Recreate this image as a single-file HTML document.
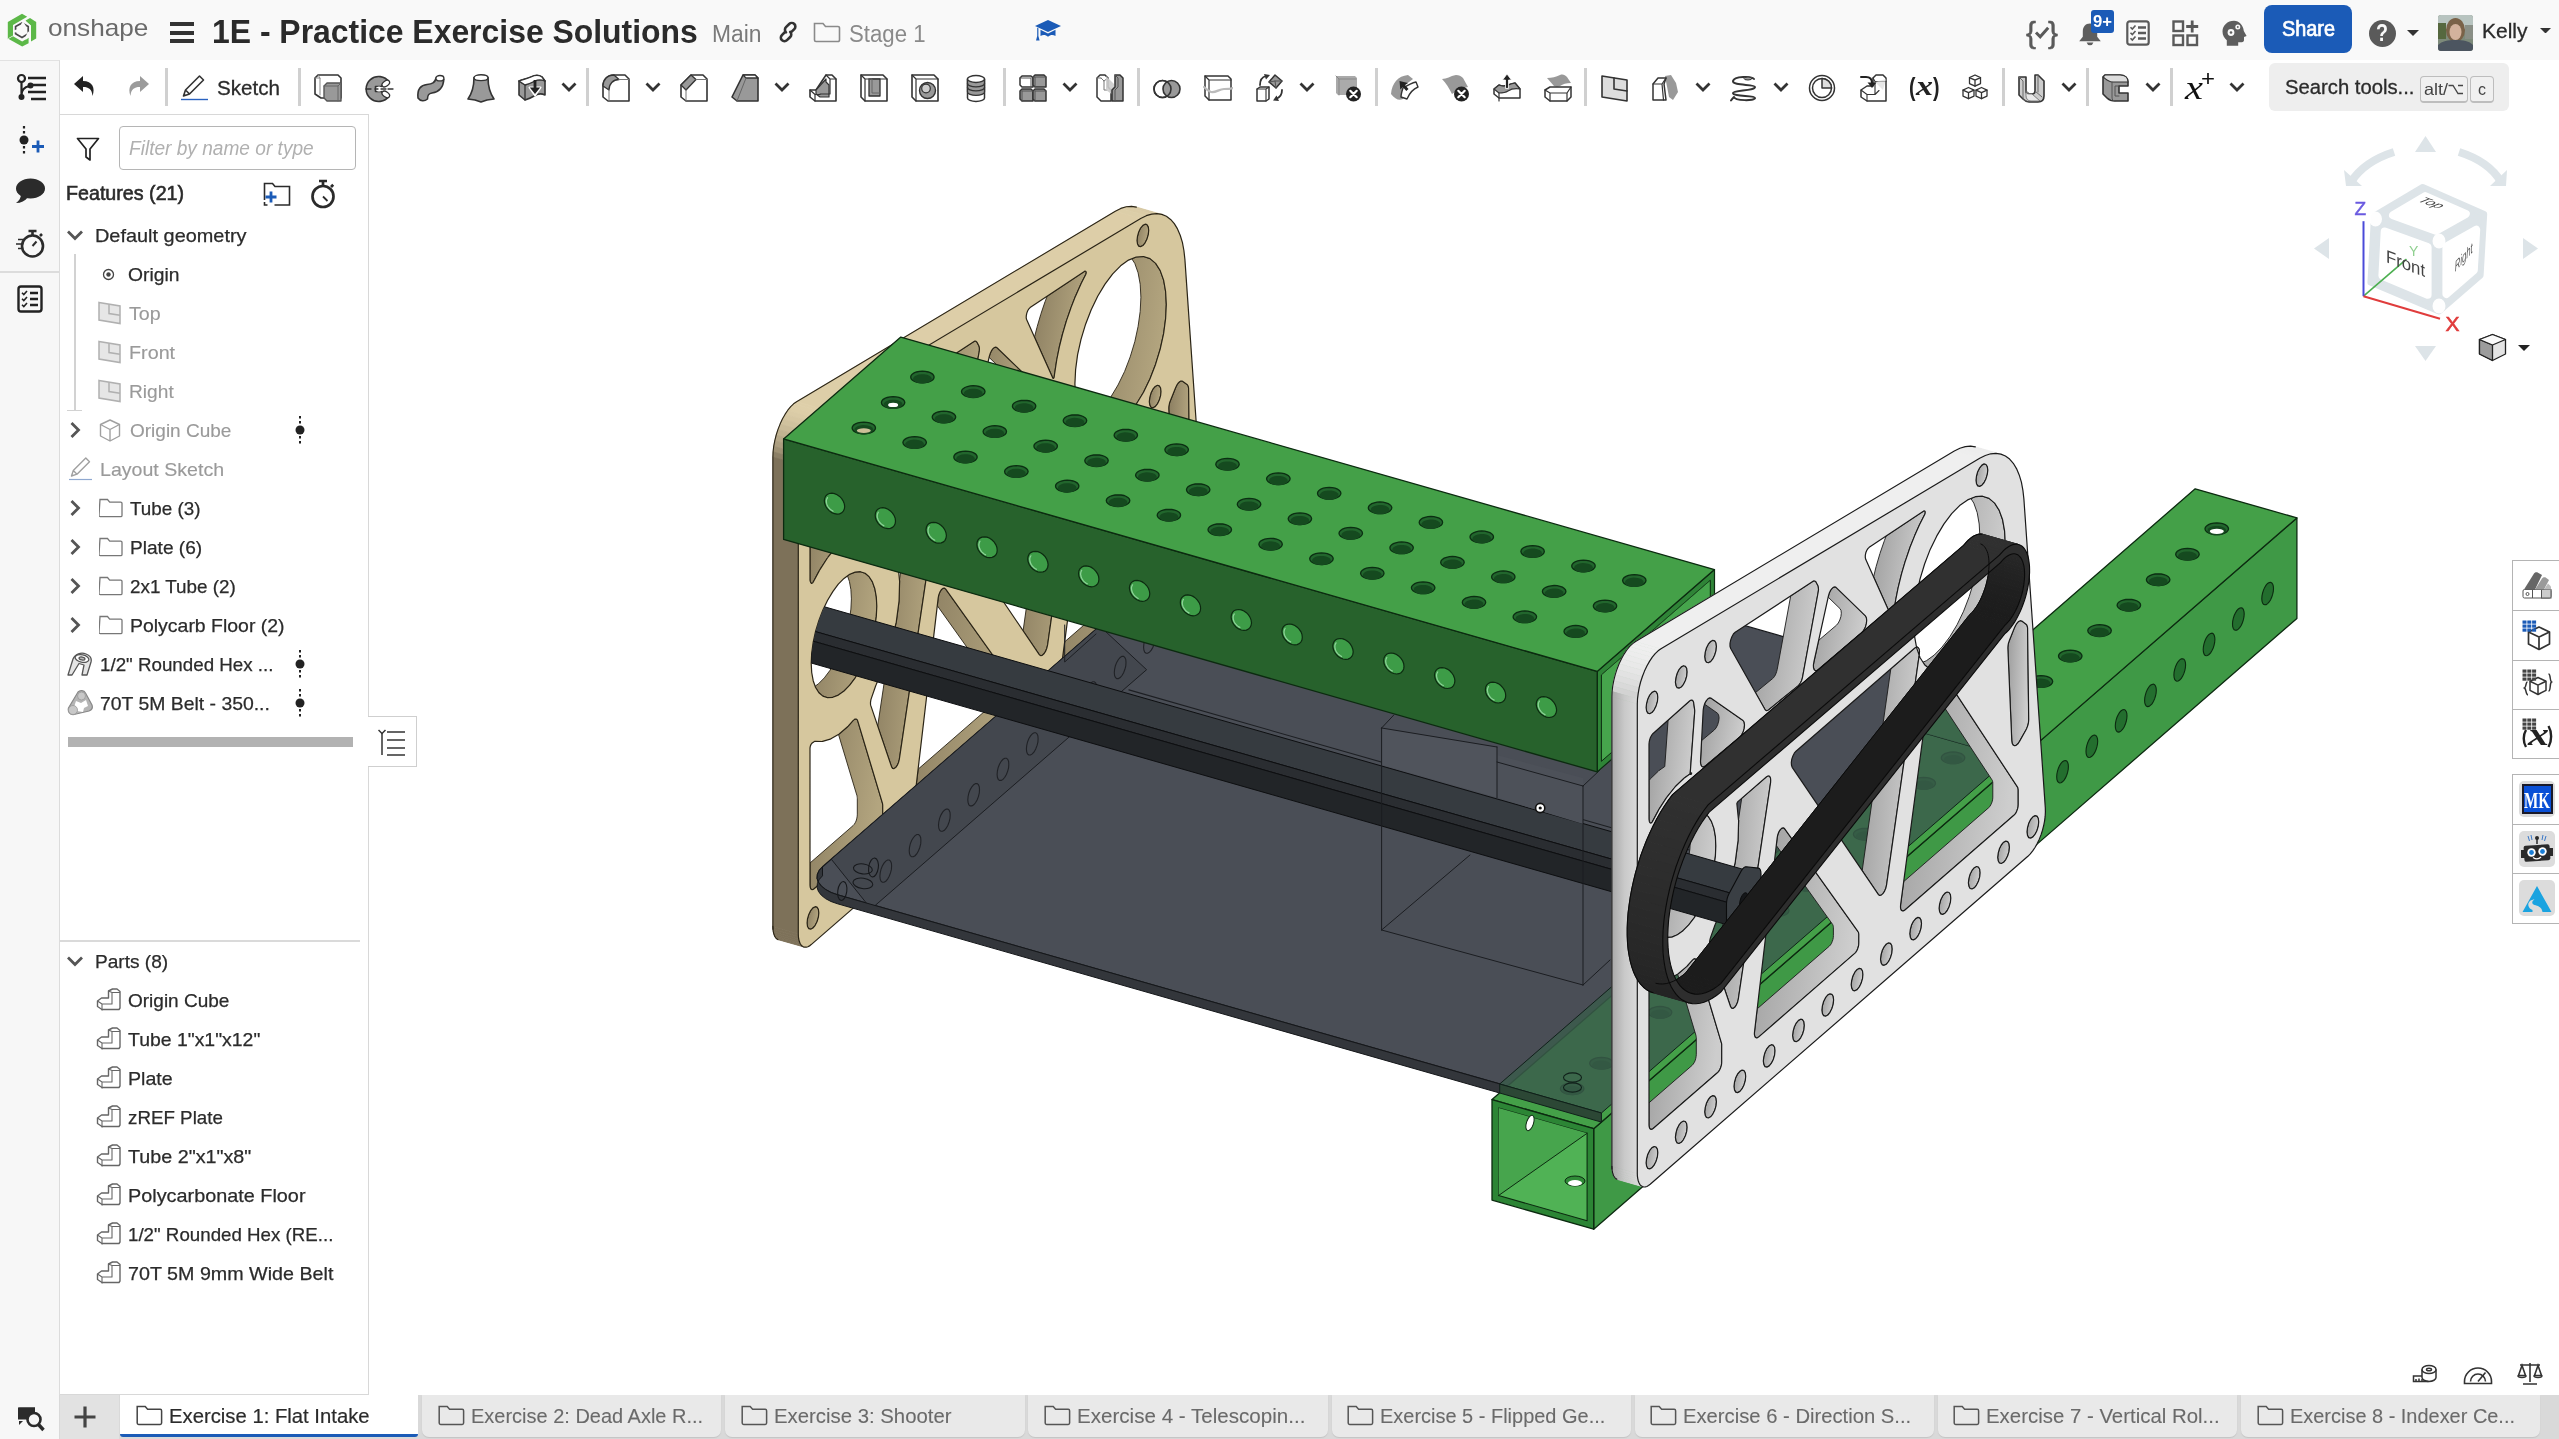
<!DOCTYPE html>
<html lang="en"><head><meta charset="utf-8"><title>1E - Practice Exercise Solutions | Onshape</title>
<style>
html,body{margin:0;padding:0;background:#fff;overflow:hidden}
#r{will-change:transform;opacity:.9999;position:relative;width:2559px;height:1439px;overflow:hidden;background:#fff;font-family:"Liberation Sans",sans-serif}
.a{position:absolute;display:block}
.t{position:absolute;white-space:nowrap;transform-origin:0 0;display:block}
</style></head>
<body><div id="r">
<svg class="a" style="left:0;top:0" width="2559" height="1439" viewBox="0 0 2559 1439">
<defs>
<clipPath id="sc1"><polygon points="844.0,578.4 838.9,583.6 833.9,590.0 829.1,597.5 824.7,605.9 820.8,615.1 817.5,624.7 814.8,634.5 812.8,644.4 811.6,654.0 811.2,663.2 811.6,671.7 812.8,679.2 814.8,685.6 817.5,690.8 820.8,694.6 824.7,697.0 829.1,697.8 833.9,697.0 838.9,694.7 844.0,691.0 2344.0,1179.5 2344.0,947.0"/></clipPath>
<clipPath id="sc2"><polygon points="1683.0,818.2 1677.9,823.3 1672.9,829.7 1668.1,837.2 1663.7,845.7 1659.8,854.8 1656.5,864.4 1653.8,874.3 1651.8,884.2 1650.6,893.8 1650.2,902.9 1650.6,911.4 1651.8,918.9 1653.8,925.4 1656.5,930.6 1659.8,934.4 1663.7,936.7 1668.1,937.5 1672.9,936.8 1677.9,934.5 1683.0,930.7 3183.0,1419.3 3183.0,1186.7"/></clipPath>
<linearGradient id="tpw" x1="0" y1="0" x2="1" y2="0.3"><stop offset="0" stop-color="#8a7d60"/><stop offset="1" stop-color="#b3a57f"/></linearGradient>
<linearGradient id="wpw" x1="0" y1="0" x2="1" y2="0.3"><stop offset="0" stop-color="#9c9c9c"/><stop offset="1" stop-color="#cdcdcd"/></linearGradient>
<clipPath id="endclip"><polygon points="1601.4,674.8 1710.3,580.2 1710.3,666.6 1601.4,761.3"/></clipPath>
<clipPath id="rtclip"><polygon points="1908.7,737.7 2195.2,488.8 2296.9,517.9 2296.9,618.4 2010.4,867.3"/></clipPath>
<linearGradient id="wpl" gradientUnits="userSpaceOnUse" x1="1611" y1="0" x2="1638" y2="0"><stop offset="0" stop-color="#a6a6a6"/><stop offset="0.5" stop-color="#c9c9c9"/><stop offset="1" stop-color="#dadada"/></linearGradient>
</defs>
<polygon points="798.3,933.7 798.4,936.5 773.0,929.2 772.9,926.4" fill="#7d7159" stroke="#7d7159" stroke-width="0.8"/>
<polygon points="798.4,936.5 798.7,939.0 773.3,931.8 773.0,929.2" fill="#7d7159" stroke="#7d7159" stroke-width="0.8"/>
<polygon points="798.7,939.0 799.3,941.3 773.9,934.0 773.3,931.8" fill="#7d7159" stroke="#7d7159" stroke-width="0.8"/>
<polygon points="799.3,941.3 800.0,943.2 774.6,936.0 773.9,934.0" fill="#7d7159" stroke="#7d7159" stroke-width="0.8"/>
<polygon points="800.0,943.2 801.0,944.8 775.5,937.6 774.6,936.0" fill="#7d7159" stroke="#7d7159" stroke-width="0.8"/>
<polygon points="801.0,944.8 802.1,946.0 776.7,938.8 775.5,937.6" fill="#7d7159" stroke="#7d7159" stroke-width="0.8"/>
<polygon points="802.1,946.0 803.3,946.8 777.9,939.6 776.7,938.8" fill="#7d7159" stroke="#7d7159" stroke-width="0.8"/>
<polygon points="1161.8,214.4 1156.9,213.6 1131.5,206.4 1136.4,207.1" fill="#d4c6a1" stroke="#d4c6a1" stroke-width="0.8"/>
<polygon points="1156.9,213.6 1151.7,214.1 1126.3,206.8 1131.5,206.4" fill="#d8c9a4" stroke="#d8c9a4" stroke-width="0.8"/>
<polygon points="1151.7,214.1 1146.3,215.7 1120.8,208.4 1126.3,206.8" fill="#dbcca6" stroke="#dbcca6" stroke-width="0.8"/>
<polygon points="1146.3,215.7 1140.7,218.5 1115.3,211.3 1120.8,208.4" fill="#dccea8" stroke="#dccea8" stroke-width="0.8"/>
<polygon points="1140.7,218.5 822.0,409.0 796.6,401.7 1115.3,211.3" fill="#ddcea8" stroke="#ddcea8" stroke-width="0.8"/>
<polygon points="822.0,409.0 819.1,411.1 793.6,403.8 796.6,401.7" fill="#decfa9" stroke="#decfa9" stroke-width="0.8"/>
<polygon points="819.1,411.1 816.1,414.0 790.7,406.7 793.6,403.8" fill="#decfa9" stroke="#decfa9" stroke-width="0.8"/>
<polygon points="816.1,414.0 813.2,417.5 787.8,410.2 790.7,406.7" fill="#ddcea8" stroke="#ddcea8" stroke-width="0.8"/>
<polygon points="813.2,417.5 810.5,421.6 785.0,414.4 787.8,410.2" fill="#dacba6" stroke="#dacba6" stroke-width="0.8"/>
<polygon points="810.5,421.6 807.9,426.3 782.4,419.0 785.0,414.4" fill="#d6c7a2" stroke="#d6c7a2" stroke-width="0.8"/>
<polygon points="807.9,426.3 805.5,431.3 780.1,424.1 782.4,419.0" fill="#d0c29e" stroke="#d0c29e" stroke-width="0.8"/>
<polygon points="805.5,431.3 803.4,436.7 778.0,429.4 780.1,424.1" fill="#c9bb98" stroke="#c9bb98" stroke-width="0.8"/>
<polygon points="803.4,436.7 801.6,442.3 776.2,435.0 778.0,429.4" fill="#c1b391" stroke="#c1b391" stroke-width="0.8"/>
<polygon points="801.6,442.3 800.2,448.0 774.8,440.7 776.2,435.0" fill="#b7a989" stroke="#b7a989" stroke-width="0.8"/>
<polygon points="800.2,448.0 799.1,453.6 773.7,446.3 774.8,440.7" fill="#ac9e80" stroke="#ac9e80" stroke-width="0.8"/>
<polygon points="799.1,453.6 798.5,459.1 773.1,451.8 773.7,446.3" fill="#9e9174" stroke="#9e9174" stroke-width="0.8"/>
<polygon points="798.5,459.1 798.3,464.3 772.9,457.1 773.1,451.8" fill="#8c8066" stroke="#8c8066" stroke-width="0.8"/>
<polygon points="798.3,464.3 798.3,933.7 772.9,926.4 772.9,457.1" fill="#7d7159" stroke="#7d7159" stroke-width="0.8"/>
<polygon points="1165.6,291.5 1163.6,280.1 1160.2,270.6 1155.6,263.4 1150.0,258.6 1143.5,256.5 1136.2,257.0 1131.8,258.8 1134.8,263.4 1138.1,272.8 1140.2,284.2 1140.9,297.2 1140.2,311.4 1138.1,326.4 1134.8,341.7 1130.2,356.9 1124.6,371.5 1118.0,385.0 1110.8,397.0 1103.1,407.2 1095.2,415.3 1087.2,421.0 1083.9,422.4 1085.6,425.0 1091.2,429.8 1097.7,431.9 1105.0,431.4 1112.7,428.3 1120.6,422.6 1128.5,414.5 1136.2,404.3 1143.5,392.2 1150.0,378.7 1155.6,364.2 1160.2,349.0 1163.6,333.7 1165.6,318.7 1166.3,304.5" fill="url(#tpw)" stroke="#2a2416" stroke-width="0.9" stroke-linejoin="round"/>
<polygon points="876.3,596.9 874.8,588.7 872.4,581.9 869.1,576.7 865.1,573.3 860.4,571.7 855.2,572.1 849.7,574.3 847.5,575.9 849.4,581.4 850.9,589.6 851.4,598.9 850.9,609.1 849.4,619.9 847.0,630.9 843.7,641.8 839.7,652.2 835.0,661.9 829.8,670.6 824.3,677.9 818.6,683.7 815.1,686.2 815.6,687.5 818.9,692.7 822.9,696.1 827.6,697.7 832.8,697.3 838.3,695.1 844.0,691.0 849.7,685.2 855.2,677.8 860.4,669.2 865.1,659.5 869.1,649.0 872.4,638.2 874.8,627.2 876.3,616.4 876.8,606.2" fill="url(#tpw)" stroke="#2a2416" stroke-width="0.9" stroke-linejoin="round"/>
<polygon points="1052.9,378.2 1053.1,378.4 1053.4,378.4 1053.6,378.2 1053.9,377.8 1054.1,377.3 1054.2,376.8 1054.6,373.5 1054.6,373.4 1054.6,373.4 1054.6,373.3 1054.7,373.2 1054.7,373.2 1054.7,373.1 1056.6,360.7 1056.6,360.6 1056.6,360.5 1056.6,360.4 1056.6,360.3 1056.7,360.2 1056.7,360.0 1059.2,347.6 1059.2,347.5 1059.2,347.4 1059.2,347.3 1059.3,347.2 1059.3,347.1 1059.3,347.0 1062.4,334.5 1062.4,334.4 1062.5,334.3 1062.5,334.2 1062.5,334.1 1062.6,334.0 1062.6,333.9 1066.2,321.5 1066.2,321.4 1066.3,321.3 1066.3,321.2 1066.4,321.1 1066.4,321.0 1066.4,320.9 1070.6,308.8 1070.6,308.6 1070.6,308.5 1070.7,308.4 1070.7,308.3 1070.8,308.2 1070.8,308.1 1075.4,296.3 1075.5,296.2 1075.5,296.1 1075.6,296.0 1075.6,295.9 1075.7,295.8 1075.7,295.7 1080.7,284.4 1080.8,284.3 1080.8,284.2 1080.9,284.1 1080.9,284.0 1081.0,283.9 1081.0,283.8 1085.7,274.5 1085.9,274.0 1086.1,273.5 1086.2,273.0 1086.2,272.5 1086.2,272.1 1086.0,271.8 1086.0,271.7 1085.8,271.5 1085.6,271.3 1085.3,271.2 1085.0,271.2 1084.7,271.2 1084.4,271.4 1047.2,296.2 1045.4,300.8 1045.3,300.9 1045.3,301.1 1045.3,301.2 1045.2,301.3 1045.2,301.4 1045.1,301.5 1041.0,313.6 1041.0,313.7 1040.9,313.8 1040.9,313.9 1040.9,314.0 1040.8,314.2 1040.8,314.3 1037.2,326.6 1037.1,326.7 1037.1,326.8 1037.1,326.9 1037.0,327.0 1037.0,327.2 1037.0,327.3 1034.5,337.1" fill="url(#tpw)" stroke="#2a2416" stroke-width="0.9" stroke-linejoin="round"/>
<polygon points="810.0,579.2 810.0,580.0 810.1,580.8 810.3,581.4 810.5,582.0 810.7,582.5 811.0,582.9 811.1,583.0 811.4,583.3 811.8,583.3 812.2,583.2 812.6,582.8 813.0,582.3 813.4,581.7 819.3,570.6 819.4,570.4 819.5,570.3 819.6,570.1 819.7,569.9 819.8,569.8 819.9,569.6 827.4,558.0 827.5,557.8 827.6,557.7 827.7,557.6 827.8,557.4 827.9,557.3 828.0,557.1 835.9,547.3 836.1,547.1 836.2,547.0 836.3,546.9 836.4,546.8 836.5,546.7 836.6,546.6 844.7,538.7 844.8,538.6 844.9,538.5 845.0,538.4 845.1,538.3 845.2,538.2 845.3,538.2 851.2,534.0 851.2,533.7 855.6,472.0 855.7,471.6 855.7,471.2 855.7,470.8 855.7,470.4 855.6,470.1 855.6,469.7 854.7,463.2 854.4,462.0 853.9,461.0 853.2,460.5 852.4,460.3 851.5,460.6 850.6,461.2 829.1,480.4 825.8,526.4 825.8,526.7 819.9,530.9 819.8,531.0 819.7,531.1 819.6,531.2 819.4,531.2 819.3,531.3 819.2,531.4 811.2,539.3 811.1,539.4 810.9,539.5 810.8,539.6 810.7,539.8 810.6,539.9 810.5,540.0 810.0,540.6" fill="url(#tpw)" stroke="#2a2416" stroke-width="0.9" stroke-linejoin="round"/>
<polygon points="861.5,521.5 861.5,523.6 861.9,525.4 862.6,526.6 863.6,527.1 864.8,527.1 866.0,526.3 900.7,497.6 902.5,495.4 904.1,492.2 905.1,488.6 905.5,485.2 905.0,482.4 903.9,480.8 872.0,458.4 870.6,458.1 868.9,459.0 867.2,461.1 865.7,463.9 865.6,464.4 878.5,473.5 879.6,475.1 880.0,477.9 879.7,481.4 878.7,485.0 877.1,488.1 875.2,490.3 862.6,500.8" fill="url(#tpw)" stroke="#2a2416" stroke-width="0.9" stroke-linejoin="round"/>
<polygon points="925.9,469.6 926.3,470.2 926.9,470.6 927.5,470.8 928.2,470.8 928.9,470.5 929.7,470.0 959.0,446.2 960.0,445.2 960.9,443.9 961.8,442.4 962.5,440.7 963.1,438.9 963.6,437.0 979.1,352.2 979.3,350.9 979.4,349.6 979.4,348.3 979.3,347.2 979.0,346.3 978.7,345.5 977.0,342.4 976.6,341.9 976.1,341.4 975.6,341.2 975.0,341.2 974.3,341.4 973.7,341.7 951.7,356.1 938.1,429.7 937.7,431.6 937.1,433.4 936.4,435.2 935.5,436.7 934.6,437.9 933.6,438.9 916.4,452.8" fill="url(#tpw)" stroke="#2a2416" stroke-width="0.9" stroke-linejoin="round"/>
<polygon points="989.1,357.4 1001.0,368.9 1001.9,370.7 1002.2,373.5 1001.8,376.8 1000.8,380.3 999.3,383.3 997.5,385.4 979.6,400.7 974.8,422.3 974.4,425.2 974.5,427.8 975.1,429.7 976.2,430.8 977.5,431.0 979.0,430.1 1022.9,392.7 1024.7,390.6 1026.2,387.6 1027.3,384.1 1027.7,380.7 1027.4,377.9 1026.4,376.1 997.0,347.7 995.8,347.1 994.4,347.5 992.8,348.9 991.4,350.9 990.2,353.6 989.3,356.4" fill="url(#tpw)" stroke="#2a2416" stroke-width="0.9" stroke-linejoin="round"/>
<polygon points="878.6,832.8 879.6,831.6 880.6,830.1 881.5,828.2 882.1,826.2 882.5,824.1 882.7,822.2 882.7,805.5 882.7,805.0 882.6,804.6 882.6,804.2 882.5,803.8 882.5,803.4 882.4,803.1 857.7,720.9 857.3,719.9 856.7,719.3 856.0,719.0 855.1,719.1 854.3,719.6 853.3,720.4 848.2,726.2 848.1,726.3 848.0,726.4 847.9,726.5 847.8,726.6 847.7,726.7 847.6,726.8 839.5,733.7 839.4,733.8 839.3,733.9 839.2,734.0 839.1,734.1 838.9,734.1 838.8,734.2 838.5,734.4 857.0,795.8 857.0,796.2 857.1,796.6 857.2,796.9 857.2,797.4 857.3,797.8 857.3,798.2 857.3,814.9 857.1,816.9 856.7,818.9 856.1,821.0 855.2,822.8 854.2,824.4 853.2,825.5 810.0,863.0 810.0,885.3 810.2,887.0 810.6,888.4 811.2,889.3 812.1,889.6 813.1,889.5 814.1,888.8" fill="url(#tpw)" stroke="#2a2416" stroke-width="0.9" stroke-linejoin="round"/>
<polygon points="931.5,542.6 931.7,540.3 931.5,538.3 930.9,536.9 930.0,536.2 928.9,536.2 927.6,537.0 902.6,558.6 899.5,579.9 899.5,580.2 899.5,580.4 899.6,580.7 899.6,580.9 899.6,581.1 899.6,581.4 899.6,581.6 899.1,600.0 899.1,600.2 899.1,600.5 899.1,600.7 899.0,601.0 899.0,601.2 899.0,601.5 896.4,621.1 896.4,621.4 896.3,621.7 896.3,621.9 896.3,622.2 896.2,622.5 896.1,622.7 891.6,642.9 891.5,643.1 891.4,643.4 891.4,643.7 891.3,643.9 891.2,644.2 891.1,644.5 888.8,651.7 877.7,726.1 891.6,766.9 892.6,768.4 894.0,768.6 895.6,767.6 897.2,765.4 898.5,762.5 899.3,759.4" fill="url(#tpw)" stroke="#2a2416" stroke-width="0.9" stroke-linejoin="round"/>
<polygon points="1015.7,713.7 1016.8,712.5 1017.8,711.0 1018.6,709.1 1019.3,707.1 1019.7,705.0 1019.8,703.1 1019.8,695.4 1019.8,694.7 1019.7,694.0 1019.6,693.4 1019.4,692.8 1019.2,692.3 1019.0,691.9 945.5,588.9 944.3,588.1 942.9,588.4 941.3,589.8 939.9,592.1 938.8,594.9 938.2,597.9 937.3,605.7 993.6,684.6 993.8,685.0 994.0,685.5 994.2,686.1 994.3,686.7 994.4,687.4 994.4,688.1 994.4,695.8 994.2,697.8 993.8,699.8 993.2,701.9 992.3,703.7 991.3,705.3 990.3,706.4 918.2,769.1 915.4,792.2 915.4,794.4 915.6,796.2 916.2,797.5 917.1,798.1 918.2,798.0 919.4,797.3" fill="url(#tpw)" stroke="#2a2416" stroke-width="0.9" stroke-linejoin="round"/>
<polygon points="1080.3,414.5 1080.4,412.0 1080.2,409.8 1079.5,408.2 1078.5,407.4 1077.2,407.4 1075.8,408.3 1051.7,429.1 1023.1,630.8 1039.3,654.7 1040.6,655.6 1042.2,655.3 1043.9,653.8 1045.5,651.4 1046.8,648.2 1047.6,644.9" fill="url(#tpw)" stroke="#2a2416" stroke-width="0.9" stroke-linejoin="round"/>
<polygon points="1175.1,575.2 1176.2,574.1 1177.1,572.5 1178.0,570.7 1178.7,568.6 1179.1,566.6 1179.2,564.7 1179.2,550.8 1179.2,550.1 1179.1,549.5 1179.0,548.9 1178.9,548.3 1178.7,547.8 1178.4,547.4 1099.3,427.1 1098.2,426.3 1096.8,426.6 1095.3,427.9 1093.8,430.1 1092.7,432.9 1092.0,435.8 1090.8,445.5 1153.0,540.1 1153.2,540.5 1153.4,541.0 1153.6,541.6 1153.7,542.2 1153.8,542.9 1153.8,543.6 1153.8,557.4 1153.6,559.3 1153.2,561.4 1152.6,563.4 1151.7,565.3 1150.7,566.8 1149.7,568.0 1064.7,641.8 1061.6,665.1 1061.4,667.3 1061.7,669.2 1062.3,670.5 1063.2,671.2 1064.3,671.2 1065.5,670.4" fill="url(#tpw)" stroke="#2a2416" stroke-width="0.9" stroke-linejoin="round"/>
<polygon points="1186.9,490.2 1187.7,488.6 1188.4,486.9 1189.0,485.0 1189.4,483.2 1189.6,481.4 1189.7,479.7 1188.6,389.4 1188.6,388.3 1188.4,387.2 1188.2,386.3 1187.8,385.5 1187.4,384.9 1187.0,384.5 1182.8,381.4 1181.7,381.0 1180.5,381.2 1179.2,382.1 1177.9,383.5 1176.7,385.4 1175.6,387.7 1170.5,400.5 1169.9,401.9 1169.5,403.4 1169.2,404.9 1168.9,406.3 1168.8,407.8 1168.8,409.1 1172.8,501.0 1173.2,503.6 1174.1,505.3 1175.5,506.0 1177.1,505.5 1178.9,504.0 1180.5,501.6" fill="url(#tpw)" stroke="#2a2416" stroke-width="0.9" stroke-linejoin="round"/>
<polygon points="818.4,909.4 817.1,907.2 815.2,906.7 812.9,907.9 810.7,910.6 808.8,914.4 807.5,918.8 807.1,923.0 807.5,926.5 808.8,928.7 810.7,929.2 812.9,928.0 815.2,925.3 817.1,921.5 818.4,917.1 818.8,912.9" fill="url(#tpw)" stroke="#2a2416" stroke-width="0.9" stroke-linejoin="round"/>
<polygon points="847.7,884.0 846.4,881.8 844.5,881.3 842.2,882.5 840.0,885.2 838.1,889.0 836.8,893.4 836.4,897.6 836.8,901.0 838.1,903.2 840.0,903.7 842.2,902.5 844.5,899.8 846.4,896.0 847.7,891.6 848.1,887.4" fill="url(#tpw)" stroke="#2a2416" stroke-width="0.9" stroke-linejoin="round"/>
<polygon points="877.0,858.5 875.7,856.3 873.8,855.8 871.5,857.0 869.3,859.7 867.4,863.5 866.1,867.9 865.7,872.1 866.1,875.6 867.4,877.8 869.3,878.3 871.5,877.1 873.8,874.4 875.7,870.6 877.0,866.2 877.4,862.0" fill="url(#tpw)" stroke="#2a2416" stroke-width="0.9" stroke-linejoin="round"/>
<polygon points="906.3,833.1 905.0,830.9 903.1,830.4 900.8,831.5 898.6,834.3 896.7,838.1 895.4,842.5 895.0,846.7 895.4,850.1 896.7,852.3 898.6,852.8 900.8,851.6 903.1,848.9 905.0,845.1 906.3,840.7 906.7,836.5" fill="url(#tpw)" stroke="#2a2416" stroke-width="0.9" stroke-linejoin="round"/>
<polygon points="935.6,807.6 934.3,805.4 932.4,804.9 930.1,806.1 927.9,808.8 926.0,812.6 924.7,817.0 924.3,821.2 924.7,824.7 926.0,826.9 927.9,827.4 930.1,826.2 932.4,823.5 934.3,819.7 935.6,815.3 936.0,811.1" fill="url(#tpw)" stroke="#2a2416" stroke-width="0.9" stroke-linejoin="round"/>
<polygon points="964.9,782.2 963.6,780.0 961.7,779.5 959.4,780.6 957.2,783.4 955.3,787.2 954.0,791.6 953.6,795.8 954.0,799.2 955.3,801.4 957.2,801.9 959.4,800.7 961.7,798.0 963.6,794.2 964.9,789.8 965.3,785.6" fill="url(#tpw)" stroke="#2a2416" stroke-width="0.9" stroke-linejoin="round"/>
<polygon points="994.2,756.7 992.9,754.5 991.0,754.0 988.8,755.2 986.5,757.9 984.6,761.7 983.3,766.1 982.9,770.3 983.3,773.8 984.6,776.0 986.5,776.5 988.8,775.3 991.0,772.6 992.9,768.8 994.2,764.4 994.6,760.2" fill="url(#tpw)" stroke="#2a2416" stroke-width="0.9" stroke-linejoin="round"/>
<polygon points="1023.5,731.3 1022.2,729.1 1020.3,728.6 1018.0,729.8 1015.8,732.5 1013.9,736.3 1012.6,740.7 1012.2,744.9 1012.6,748.3 1013.9,750.5 1015.8,751.0 1018.0,749.8 1020.3,747.1 1022.2,743.3 1023.5,738.9 1023.9,734.7" fill="url(#tpw)" stroke="#2a2416" stroke-width="0.9" stroke-linejoin="round"/>
<polygon points="1052.8,705.8 1051.5,703.6 1049.6,703.1 1047.3,704.3 1045.1,707.0 1043.2,710.8 1041.9,715.2 1041.5,719.4 1041.9,722.9 1043.2,725.1 1045.1,725.6 1047.3,724.4 1049.6,721.7 1051.5,717.9 1052.8,713.5 1053.2,709.3" fill="url(#tpw)" stroke="#2a2416" stroke-width="0.9" stroke-linejoin="round"/>
<polygon points="1082.1,680.4 1080.8,678.2 1078.9,677.7 1076.7,678.9 1074.4,681.6 1072.5,685.4 1071.2,689.8 1070.8,694.0 1071.2,697.4 1072.5,699.6 1074.4,700.1 1076.7,698.9 1078.9,696.2 1080.8,692.4 1082.1,688.0 1082.5,683.8" fill="url(#tpw)" stroke="#2a2416" stroke-width="0.9" stroke-linejoin="round"/>
<polygon points="1111.4,654.9 1110.1,652.7 1108.2,652.2 1106.0,653.4 1103.7,656.1 1101.8,659.9 1100.5,664.3 1100.1,668.5 1100.5,672.0 1101.8,674.2 1103.7,674.7 1106.0,673.5 1108.2,670.8 1110.1,667.0 1111.4,662.6 1111.8,658.4" fill="url(#tpw)" stroke="#2a2416" stroke-width="0.9" stroke-linejoin="round"/>
<polygon points="1140.7,629.5 1139.4,627.3 1137.5,626.8 1135.2,628.0 1133.0,630.7 1131.1,634.5 1129.8,638.9 1129.4,643.1 1129.8,646.5 1131.1,648.7 1133.0,649.2 1135.2,648.0 1137.5,645.3 1139.4,641.5 1140.7,637.1 1141.1,632.9" fill="url(#tpw)" stroke="#2a2416" stroke-width="0.9" stroke-linejoin="round"/>
<polygon points="1170.0,604.0 1168.7,601.8 1166.8,601.3 1164.5,602.5 1162.3,605.2 1160.4,609.0 1159.1,613.4 1158.7,617.6 1159.1,621.1 1160.4,623.3 1162.3,623.8 1164.5,622.6 1166.8,619.9 1168.7,616.1 1170.0,611.7 1170.4,607.5" fill="url(#tpw)" stroke="#2a2416" stroke-width="0.9" stroke-linejoin="round"/>
<polygon points="1199.3,578.6 1198.0,576.4 1196.1,575.9 1193.8,577.0 1191.6,579.8 1189.7,583.6 1188.4,588.0 1188.0,592.2 1188.4,595.6 1189.7,597.8 1191.6,598.3 1193.8,597.1 1196.1,594.4 1198.0,590.6 1199.3,586.2 1199.7,582.0" fill="url(#tpw)" stroke="#2a2416" stroke-width="0.9" stroke-linejoin="round"/>
<polygon points="818.4,454.1 817.1,452.0 815.2,451.5 812.9,452.6 810.7,455.3 808.8,459.2 807.5,463.5 807.1,467.8 807.5,471.2 808.8,473.4 810.7,473.9 812.9,472.7 815.2,470.0 817.1,466.2 818.4,461.8 818.8,457.6" fill="url(#tpw)" stroke="#2a2416" stroke-width="0.9" stroke-linejoin="round"/>
<polygon points="847.7,428.7 846.4,426.5 844.5,426.0 842.2,427.2 840.0,429.9 838.1,433.7 836.8,438.1 836.4,442.3 836.8,445.8 838.1,447.9 840.0,448.5 842.2,447.3 844.5,444.6 846.4,440.7 847.7,436.4 848.1,432.1" fill="url(#tpw)" stroke="#2a2416" stroke-width="0.9" stroke-linejoin="round"/>
<polygon points="877.0,403.2 875.7,401.1 873.8,400.6 871.5,401.7 869.3,404.4 867.4,408.3 866.1,412.6 865.7,416.9 866.1,420.3 867.4,422.5 869.3,423.0 871.5,421.8 873.8,419.1 875.7,415.3 877.0,410.9 877.4,406.7" fill="url(#tpw)" stroke="#2a2416" stroke-width="0.9" stroke-linejoin="round"/>
<polygon points="1148.3,226.9 1147.0,224.7 1145.1,224.2 1142.9,225.4 1140.6,228.1 1138.7,231.9 1137.5,236.3 1137.0,240.5 1137.5,244.0 1138.7,246.1 1140.6,246.6 1142.9,245.5 1145.1,242.8 1147.0,238.9 1148.3,234.6 1148.7,230.3" fill="url(#tpw)" stroke="#2a2416" stroke-width="0.9" stroke-linejoin="round"/>
<polygon points="1160.6,388.0 1159.3,385.9 1157.4,385.3 1155.2,386.5 1152.9,389.2 1151.0,393.1 1149.8,397.4 1149.3,401.7 1149.8,405.1 1151.0,407.3 1152.9,407.8 1155.2,406.6 1157.4,403.9 1159.3,400.1 1160.6,395.7 1161.0,391.5" fill="url(#tpw)" stroke="#2a2416" stroke-width="0.9" stroke-linejoin="round"/>
<path d="M798.3 933.7 L798.4 936.5 L798.7 939.0 L799.3 941.3 L800.0 943.2 L801.0 944.8 L802.1 946.0 L803.3 946.8 L804.7 947.2 L806.3 947.2 L807.9 946.7 L809.5 945.9 L811.2 944.6 L1188.8 616.6 L1191.3 614.2 L1193.7 611.2 L1196.0 607.7 L1198.2 603.8 L1200.2 599.6 L1201.9 595.1 L1203.4 590.5 L1204.7 585.8 L1205.6 581.0 L1206.2 576.4 L1206.4 572.0 L1206.3 567.9 L1184.9 259.4 L1183.9 250.5 L1182.4 242.4 L1180.2 235.2 L1177.5 228.9 L1174.3 223.6 L1170.6 219.4 L1166.4 216.3 L1161.8 214.4 L1156.9 213.6 L1151.7 214.1 L1146.3 215.7 L1140.7 218.5 L822.0 409.0 L819.1 411.1 L816.1 414.0 L813.2 417.5 L810.5 421.6 L807.9 426.3 L805.5 431.3 L803.4 436.7 L801.6 442.3 L800.2 448.0 L799.1 453.6 L798.5 459.1 L798.3 464.3ZM1166.3 304.5 L1165.6 291.5 L1163.6 280.1 L1160.2 270.6 L1155.6 263.4 L1150.0 258.6 L1143.5 256.5 L1136.2 257.0 L1128.5 260.1 L1120.6 265.8 L1112.7 273.9 L1105.0 284.1 L1097.7 296.2 L1091.2 309.7 L1085.6 324.2 L1081.0 339.4 L1077.6 354.7 L1075.6 369.7 L1074.9 383.9 L1075.6 396.9 L1077.6 408.3 L1081.0 417.8 L1085.6 425.0 L1091.2 429.8 L1097.7 431.9 L1105.0 431.4 L1112.7 428.3 L1120.6 422.6 L1128.5 414.5 L1136.2 404.3 L1143.5 392.2 L1150.0 378.7 L1155.6 364.2 L1160.2 349.0 L1163.6 333.7 L1165.6 318.7ZM876.8 606.2 L876.3 596.9 L874.8 588.7 L872.4 581.9 L869.1 576.7 L865.1 573.3 L860.4 571.7 L855.2 572.1 L849.7 574.3 L844.0 578.4 L838.3 584.2 L832.8 591.6 L827.6 600.2 L822.9 609.9 L818.9 620.4 L815.6 631.2 L813.2 642.2 L811.7 653.0 L811.2 663.2 L811.7 672.5 L813.2 680.7 L815.6 687.5 L818.9 692.7 L822.9 696.1 L827.6 697.7 L832.8 697.3 L838.3 695.1 L844.0 691.0 L849.7 685.2 L855.2 677.8 L860.4 669.2 L865.1 659.5 L869.1 649.0 L872.4 638.2 L874.8 627.2 L876.3 616.4ZM1026.6 319.5 L1026.2 317.8 L1026.3 315.6 L1026.8 313.1 L1027.7 310.8 L1028.9 308.8 L1030.1 307.6 L1084.4 271.4 L1084.7 271.2 L1085.0 271.2 L1085.3 271.2 L1085.6 271.3 L1085.8 271.5 L1086.0 271.7 L1086.0 271.8 L1086.2 272.1 L1086.2 272.5 L1086.2 273.0 L1086.1 273.5 L1085.9 274.0 L1085.7 274.5 L1081.0 283.8 L1081.0 283.9 L1080.9 284.0 L1080.9 284.1 L1080.8 284.2 L1080.8 284.3 L1080.7 284.4 L1075.7 295.7 L1075.7 295.8 L1075.6 295.9 L1075.6 296.0 L1075.5 296.1 L1075.5 296.2 L1075.4 296.3 L1070.8 308.1 L1070.8 308.2 L1070.7 308.3 L1070.7 308.4 L1070.6 308.5 L1070.6 308.6 L1070.6 308.8 L1066.4 320.9 L1066.4 321.0 L1066.4 321.1 L1066.3 321.2 L1066.3 321.3 L1066.2 321.4 L1066.2 321.5 L1062.6 333.9 L1062.6 334.0 L1062.5 334.1 L1062.5 334.2 L1062.5 334.3 L1062.4 334.4 L1062.4 334.5 L1059.3 347.0 L1059.3 347.1 L1059.3 347.2 L1059.2 347.3 L1059.2 347.4 L1059.2 347.5 L1059.2 347.6 L1056.7 360.0 L1056.7 360.2 L1056.6 360.3 L1056.6 360.4 L1056.6 360.5 L1056.6 360.6 L1056.6 360.7 L1054.7 373.1 L1054.7 373.2 L1054.7 373.2 L1054.6 373.3 L1054.6 373.4 L1054.6 373.4 L1054.6 373.5 L1054.2 376.8 L1054.1 377.3 L1053.9 377.8 L1053.6 378.2 L1053.4 378.4 L1053.1 378.4 L1052.9 378.2ZM810.0 504.3 L810.2 502.4 L810.6 500.4 L811.2 498.4 L812.0 496.5 L813.0 495.0 L814.1 493.8 L850.6 461.2 L851.5 460.6 L852.4 460.3 L853.2 460.5 L853.9 461.0 L854.4 462.0 L854.7 463.2 L855.6 469.7 L855.6 470.1 L855.7 470.4 L855.7 470.8 L855.7 471.2 L855.7 471.6 L855.6 472.0 L851.2 533.7 L851.2 534.1 L851.3 534.5 L851.5 534.7 L851.8 534.7 L852.1 534.6 L852.3 534.2 L852.4 534.2 L852.5 533.9 L852.6 533.7 L852.6 533.4 L852.5 533.3 L852.4 533.2 L852.3 533.2 L845.3 538.2 L845.2 538.2 L845.1 538.3 L845.0 538.4 L844.9 538.5 L844.8 538.6 L844.7 538.7 L836.6 546.6 L836.5 546.7 L836.4 546.8 L836.3 546.9 L836.2 547.0 L836.1 547.1 L835.9 547.3 L828.0 557.1 L827.9 557.3 L827.8 557.4 L827.7 557.6 L827.6 557.7 L827.5 557.8 L827.4 558.0 L819.9 569.6 L819.8 569.8 L819.7 569.9 L819.6 570.1 L819.5 570.3 L819.4 570.4 L819.3 570.6 L813.4 581.7 L813.0 582.3 L812.6 582.8 L812.2 583.2 L811.8 583.3 L811.4 583.3 L811.1 583.0 L811.0 582.9 L810.7 582.5 L810.5 582.0 L810.3 581.4 L810.1 580.8 L810.0 580.0 L810.0 579.2ZM864.2 470.4 L864.7 467.1 L865.7 463.9 L867.2 461.1 L868.9 459.0 L870.6 458.1 L872.0 458.4 L903.9 480.8 L905.0 482.4 L905.5 485.2 L905.1 488.6 L904.1 492.2 L902.5 495.4 L900.7 497.6 L866.0 526.3 L864.8 527.1 L863.6 527.1 L862.6 526.6 L861.9 525.4 L861.5 523.6 L861.5 521.5ZM891.7 408.8 L891.0 406.6 L891.0 403.6 L891.6 400.2 L892.8 396.9 L894.4 394.2 L896.2 392.5 L973.7 341.7 L974.3 341.4 L975.0 341.2 L975.6 341.2 L976.1 341.4 L976.6 341.9 L977.0 342.4 L978.7 345.5 L979.0 346.3 L979.3 347.2 L979.4 348.3 L979.4 349.6 L979.3 350.9 L979.1 352.2 L963.6 437.0 L963.1 438.9 L962.5 440.7 L961.8 442.4 L960.9 443.9 L960.0 445.2 L959.0 446.2 L929.7 470.0 L928.9 470.5 L928.2 470.8 L927.5 470.8 L926.9 470.6 L926.3 470.2 L925.9 469.6ZM989.3 356.4 L990.2 353.6 L991.4 350.9 L992.8 348.9 L994.4 347.5 L995.8 347.1 L997.0 347.7 L1026.4 376.1 L1027.4 377.9 L1027.7 380.7 L1027.3 384.1 L1026.2 387.6 L1024.7 390.6 L1022.9 392.7 L979.0 430.1 L977.5 431.0 L976.2 430.8 L975.1 429.7 L974.5 427.8 L974.4 425.2 L974.8 422.3ZM814.1 888.8 L813.1 889.5 L812.1 889.6 L811.2 889.3 L810.6 888.4 L810.2 887.0 L810.0 885.3 L810.0 748.4 L810.1 747.4 L810.3 746.3 L810.7 745.3 L811.1 744.3 L811.7 743.5 L812.2 743.0 L813.7 741.9 L813.9 741.7 L814.2 741.6 L814.5 741.5 L814.7 741.4 L815.0 741.3 L815.3 741.3 L822.0 741.5 L822.1 741.5 L822.2 741.5 L822.3 741.5 L822.4 741.4 L822.5 741.4 L822.6 741.4 L830.2 739.1 L830.3 739.1 L830.4 739.1 L830.5 739.0 L830.6 739.0 L830.8 738.9 L830.9 738.8 L838.8 734.2 L838.9 734.1 L839.1 734.1 L839.2 734.0 L839.3 733.9 L839.4 733.8 L839.5 733.7 L847.6 726.8 L847.7 726.7 L847.8 726.6 L847.9 726.5 L848.0 726.4 L848.1 726.3 L848.2 726.2 L853.3 720.4 L854.3 719.6 L855.1 719.1 L856.0 719.0 L856.7 719.3 L857.3 719.9 L857.7 720.9 L882.4 803.1 L882.5 803.4 L882.5 803.8 L882.6 804.2 L882.6 804.6 L882.7 805.0 L882.7 805.5 L882.7 822.2 L882.5 824.1 L882.1 826.2 L881.5 828.2 L880.6 830.1 L879.6 831.6 L878.6 832.8ZM899.3 759.4 L898.5 762.5 L897.2 765.4 L895.6 767.6 L894.0 768.6 L892.6 768.4 L891.6 766.9 L870.9 705.9 L870.6 704.9 L870.5 703.6 L870.5 702.3 L870.7 700.8 L871.0 699.4 L871.5 697.9 L875.7 685.7 L875.8 685.5 L875.9 685.4 L875.9 685.2 L876.0 685.0 L876.1 684.8 L876.2 684.6 L884.2 665.8 L884.3 665.5 L884.4 665.3 L884.5 665.0 L884.6 664.8 L884.7 664.5 L884.8 664.3 L891.1 644.5 L891.2 644.2 L891.3 643.9 L891.4 643.7 L891.4 643.4 L891.5 643.1 L891.6 642.9 L896.1 622.7 L896.2 622.5 L896.3 622.2 L896.3 621.9 L896.3 621.7 L896.4 621.4 L896.4 621.1 L899.0 601.5 L899.0 601.2 L899.0 601.0 L899.1 600.7 L899.1 600.5 L899.1 600.2 L899.1 600.0 L899.6 581.6 L899.6 581.4 L899.6 581.1 L899.6 580.9 L899.6 580.7 L899.5 580.4 L899.5 580.2 L897.9 564.3 L897.9 564.0 L897.9 563.7 L898.0 563.4 L898.1 563.0 L898.3 562.8 L898.4 562.5 L898.7 562.2 L898.8 562.0 L899.0 561.9 L899.1 561.8 L899.2 561.6 L899.3 561.5 L899.5 561.4 L927.6 537.0 L928.9 536.2 L930.0 536.2 L930.9 536.9 L931.5 538.3 L931.7 540.3 L931.5 542.6ZM919.4 797.3 L918.2 798.0 L917.1 798.1 L916.2 797.5 L915.6 796.2 L915.4 794.4 L915.4 792.2 L938.2 597.9 L938.8 594.9 L939.9 592.1 L941.3 589.8 L942.9 588.4 L944.3 588.1 L945.5 588.9 L1019.0 691.9 L1019.2 692.3 L1019.4 692.8 L1019.6 693.4 L1019.7 694.0 L1019.8 694.7 L1019.8 695.4 L1019.8 703.1 L1019.7 705.0 L1019.3 707.1 L1018.6 709.1 L1017.8 711.0 L1016.8 712.5 L1015.7 713.7ZM1047.6 644.9 L1046.8 648.2 L1045.5 651.4 L1043.9 653.8 L1042.2 655.3 L1040.6 655.6 L1039.3 654.7 L953.2 527.5 L952.4 525.5 L952.3 522.7 L952.8 519.5 L953.8 516.3 L955.3 513.5 L957.0 511.5 L1075.8 408.3 L1077.2 407.4 L1078.5 407.4 L1079.5 408.2 L1080.2 409.8 L1080.4 412.0 L1080.3 414.5ZM1065.5 670.4 L1064.3 671.2 L1063.2 671.2 L1062.3 670.5 L1061.7 669.2 L1061.4 667.3 L1061.6 665.1 L1092.0 435.8 L1092.7 432.9 L1093.8 430.1 L1095.3 427.9 L1096.8 426.6 L1098.2 426.3 L1099.3 427.1 L1178.4 547.4 L1178.7 547.8 L1178.9 548.3 L1179.0 548.9 L1179.1 549.5 L1179.2 550.1 L1179.2 550.8 L1179.2 564.7 L1179.1 566.6 L1178.7 568.6 L1178.0 570.7 L1177.1 572.5 L1176.2 574.1 L1175.1 575.2ZM1180.5 501.6 L1178.9 504.0 L1177.1 505.5 L1175.5 506.0 L1174.1 505.3 L1173.2 503.6 L1172.8 501.0 L1168.8 409.1 L1168.8 407.8 L1168.9 406.3 L1169.2 404.9 L1169.5 403.4 L1169.9 401.9 L1170.5 400.5 L1175.6 387.7 L1176.7 385.4 L1177.9 383.5 L1179.2 382.1 L1180.5 381.2 L1181.7 381.0 L1182.8 381.4 L1187.0 384.5 L1187.4 384.9 L1187.8 385.5 L1188.2 386.3 L1188.4 387.2 L1188.6 388.3 L1188.6 389.4 L1189.7 479.7 L1189.6 481.4 L1189.4 483.2 L1189.0 485.0 L1188.4 486.9 L1187.7 488.6 L1186.9 490.2ZM818.8 912.9 L818.4 909.4 L817.1 907.2 L815.2 906.7 L812.9 907.9 L810.7 910.6 L808.8 914.4 L807.5 918.8 L807.1 923.0 L807.5 926.5 L808.8 928.7 L810.7 929.2 L812.9 928.0 L815.2 925.3 L817.1 921.5 L818.4 917.1ZM848.1 887.4 L847.7 884.0 L846.4 881.8 L844.5 881.3 L842.2 882.5 L840.0 885.2 L838.1 889.0 L836.8 893.4 L836.4 897.6 L836.8 901.0 L838.1 903.2 L840.0 903.7 L842.2 902.5 L844.5 899.8 L846.4 896.0 L847.7 891.6ZM877.4 862.0 L877.0 858.5 L875.7 856.3 L873.8 855.8 L871.5 857.0 L869.3 859.7 L867.4 863.5 L866.1 867.9 L865.7 872.1 L866.1 875.6 L867.4 877.8 L869.3 878.3 L871.5 877.1 L873.8 874.4 L875.7 870.6 L877.0 866.2ZM906.7 836.5 L906.3 833.1 L905.0 830.9 L903.1 830.4 L900.8 831.5 L898.6 834.3 L896.7 838.1 L895.4 842.5 L895.0 846.7 L895.4 850.1 L896.7 852.3 L898.6 852.8 L900.8 851.6 L903.1 848.9 L905.0 845.1 L906.3 840.7ZM936.0 811.1 L935.6 807.6 L934.3 805.4 L932.4 804.9 L930.1 806.1 L927.9 808.8 L926.0 812.6 L924.7 817.0 L924.3 821.2 L924.7 824.7 L926.0 826.9 L927.9 827.4 L930.1 826.2 L932.4 823.5 L934.3 819.7 L935.6 815.3ZM965.3 785.6 L964.9 782.2 L963.6 780.0 L961.7 779.5 L959.4 780.6 L957.2 783.4 L955.3 787.2 L954.0 791.6 L953.6 795.8 L954.0 799.2 L955.3 801.4 L957.2 801.9 L959.4 800.7 L961.7 798.0 L963.6 794.2 L964.9 789.8ZM994.6 760.2 L994.2 756.7 L992.9 754.5 L991.0 754.0 L988.8 755.2 L986.5 757.9 L984.6 761.7 L983.3 766.1 L982.9 770.3 L983.3 773.8 L984.6 776.0 L986.5 776.5 L988.8 775.3 L991.0 772.6 L992.9 768.8 L994.2 764.4ZM1023.9 734.7 L1023.5 731.3 L1022.2 729.1 L1020.3 728.6 L1018.0 729.8 L1015.8 732.5 L1013.9 736.3 L1012.6 740.7 L1012.2 744.9 L1012.6 748.3 L1013.9 750.5 L1015.8 751.0 L1018.0 749.8 L1020.3 747.1 L1022.2 743.3 L1023.5 738.9ZM1053.2 709.3 L1052.8 705.8 L1051.5 703.6 L1049.6 703.1 L1047.3 704.3 L1045.1 707.0 L1043.2 710.8 L1041.9 715.2 L1041.5 719.4 L1041.9 722.9 L1043.2 725.1 L1045.1 725.6 L1047.3 724.4 L1049.6 721.7 L1051.5 717.9 L1052.8 713.5ZM1082.5 683.8 L1082.1 680.4 L1080.8 678.2 L1078.9 677.7 L1076.7 678.9 L1074.4 681.6 L1072.5 685.4 L1071.2 689.8 L1070.8 694.0 L1071.2 697.4 L1072.5 699.6 L1074.4 700.1 L1076.7 698.9 L1078.9 696.2 L1080.8 692.4 L1082.1 688.0ZM1111.8 658.4 L1111.4 654.9 L1110.1 652.7 L1108.2 652.2 L1106.0 653.4 L1103.7 656.1 L1101.8 659.9 L1100.5 664.3 L1100.1 668.5 L1100.5 672.0 L1101.8 674.2 L1103.7 674.7 L1106.0 673.5 L1108.2 670.8 L1110.1 667.0 L1111.4 662.6ZM1141.1 632.9 L1140.7 629.5 L1139.4 627.3 L1137.5 626.8 L1135.2 628.0 L1133.0 630.7 L1131.1 634.5 L1129.8 638.9 L1129.4 643.1 L1129.8 646.5 L1131.1 648.7 L1133.0 649.2 L1135.2 648.0 L1137.5 645.3 L1139.4 641.5 L1140.7 637.1ZM1170.4 607.5 L1170.0 604.0 L1168.7 601.8 L1166.8 601.3 L1164.5 602.5 L1162.3 605.2 L1160.4 609.0 L1159.1 613.4 L1158.7 617.6 L1159.1 621.1 L1160.4 623.3 L1162.3 623.8 L1164.5 622.6 L1166.8 619.9 L1168.7 616.1 L1170.0 611.7ZM1199.7 582.0 L1199.3 578.6 L1198.0 576.4 L1196.1 575.9 L1193.8 577.0 L1191.6 579.8 L1189.7 583.6 L1188.4 588.0 L1188.0 592.2 L1188.4 595.6 L1189.7 597.8 L1191.6 598.3 L1193.8 597.1 L1196.1 594.4 L1198.0 590.6 L1199.3 586.2ZM818.8 457.6 L818.4 454.1 L817.1 452.0 L815.2 451.5 L812.9 452.6 L810.7 455.3 L808.8 459.2 L807.5 463.5 L807.1 467.8 L807.5 471.2 L808.8 473.4 L810.7 473.9 L812.9 472.7 L815.2 470.0 L817.1 466.2 L818.4 461.8ZM848.1 432.1 L847.7 428.7 L846.4 426.5 L844.5 426.0 L842.2 427.2 L840.0 429.9 L838.1 433.7 L836.8 438.1 L836.4 442.3 L836.8 445.8 L838.1 447.9 L840.0 448.5 L842.2 447.3 L844.5 444.6 L846.4 440.7 L847.7 436.4ZM877.4 406.7 L877.0 403.2 L875.7 401.1 L873.8 400.6 L871.5 401.7 L869.3 404.4 L867.4 408.3 L866.1 412.6 L865.7 416.9 L866.1 420.3 L867.4 422.5 L869.3 423.0 L871.5 421.8 L873.8 419.1 L875.7 415.3 L877.0 410.9ZM1148.7 230.3 L1148.3 226.9 L1147.0 224.7 L1145.1 224.2 L1142.9 225.4 L1140.6 228.1 L1138.7 231.9 L1137.5 236.3 L1137.0 240.5 L1137.5 244.0 L1138.7 246.1 L1140.6 246.6 L1142.9 245.5 L1145.1 242.8 L1147.0 238.9 L1148.3 234.6ZM1161.0 391.5 L1160.6 388.0 L1159.3 385.9 L1157.4 385.3 L1155.2 386.5 L1152.9 389.2 L1151.0 393.1 L1149.8 397.4 L1149.3 401.7 L1149.8 405.1 L1151.0 407.3 L1152.9 407.8 L1155.2 406.6 L1157.4 403.9 L1159.3 400.1 L1160.6 395.7Z" fill="#d6c79e" fill-rule="evenodd" stroke="#2a2416" stroke-width="1.2" stroke-linejoin="round"/>
<polyline points="772.9,926.4 773.0,929.2 773.0,929.2 773.3,931.8 773.3,931.8 773.9,934.0 773.9,934.0 774.6,936.0 774.6,936.0 775.5,937.6 775.5,937.6 776.7,938.8 776.7,938.8 777.9,939.6" fill="none" stroke="#2a2416" stroke-width="1.1" stroke-linejoin="round" stroke-linecap="round" />
<polyline points="1136.4,207.1 1131.5,206.4 1131.5,206.4 1126.3,206.8 1126.3,206.8 1120.8,208.4 1120.8,208.4 1115.3,211.3 1115.3,211.3 796.6,401.7 796.6,401.7 793.6,403.8 793.6,403.8 790.7,406.7 790.7,406.7 787.8,410.2 787.8,410.2 785.0,414.4 785.0,414.4 782.4,419.0 782.4,419.0 780.1,424.1 780.1,424.1 778.0,429.4 778.0,429.4 776.2,435.0 776.2,435.0 774.8,440.7 774.8,440.7 773.7,446.3 773.7,446.3 773.1,451.8 773.1,451.8 772.9,457.1 772.9,457.1 772.9,926.4 772.9,926.4 773.0,929.2" fill="none" stroke="#2a2416" stroke-width="1.1" stroke-linejoin="round" stroke-linecap="round" />
<polygon points="822.5,866.8 819.2,870.5 817.4,874.4 817.1,878.4 818.4,882.4 821.3,886.1 825.5,889.5 831.0,892.5 837.6,894.8 1601.4,1113.0 2010.4,757.7 2010.4,701.5 1211.0,473.0 1211.0,529.3" fill="#4a4e56" stroke="#15171a" stroke-width="1.2" stroke-linejoin="round" />
<polygon points="831.3,859.2 1099.7,626.0 1146.6,669.7 871.1,909.0" fill="#43474e" stroke="#1c1e22" stroke-width="1" stroke-linejoin="round" />
<polygon points="891.6,866.0 891.4,863.2 890.5,861.1 889.2,860.0 887.6,860.0 885.8,861.1 884.0,863.1 882.3,866.0 881.0,869.3 880.2,872.9 879.9,876.2 880.2,879.1 881.0,881.1 882.3,882.2 884.0,882.2 885.8,881.2 887.6,879.1 889.2,876.3 890.5,872.9 891.4,869.4 891.6,866.0" fill="none" stroke="#202226" stroke-width="1.1"/>
<polygon points="920.9,840.6 920.7,837.7 919.8,835.6 918.5,834.5 916.9,834.5 915.1,835.6 913.3,837.7 911.6,840.5 910.3,843.9 909.5,847.4 909.2,850.8 909.5,853.6 910.3,855.7 911.6,856.8 913.3,856.8 915.1,855.7 916.9,853.7 918.5,850.8 919.8,847.5 920.7,843.9 920.9,840.6" fill="none" stroke="#202226" stroke-width="1.1"/>
<polygon points="950.2,815.1 950.0,812.3 949.1,810.2 947.8,809.1 946.2,809.1 944.4,810.2 942.6,812.2 940.9,815.1 939.6,818.4 938.8,822.0 938.5,825.3 938.8,828.2 939.6,830.2 940.9,831.3 942.6,831.3 944.4,830.3 946.2,828.2 947.8,825.4 949.1,822.0 950.0,818.5 950.2,815.1" fill="none" stroke="#202226" stroke-width="1.1"/>
<polygon points="979.5,789.7 979.3,786.8 978.4,784.7 977.1,783.6 975.5,783.6 973.7,784.7 971.9,786.8 970.2,789.6 968.9,793.0 968.1,796.5 967.8,799.9 968.1,802.7 968.9,804.8 970.2,805.9 971.9,805.9 973.7,804.8 975.5,802.8 977.1,799.9 978.4,796.6 979.3,793.0 979.5,789.7" fill="none" stroke="#202226" stroke-width="1.1"/>
<polygon points="1008.8,764.2 1008.6,761.4 1007.7,759.3 1006.4,758.2 1004.8,758.2 1003.0,759.3 1001.2,761.3 999.5,764.2 998.2,767.5 997.4,771.1 997.1,774.4 997.4,777.3 998.2,779.3 999.5,780.4 1001.2,780.4 1003.0,779.4 1004.8,777.3 1006.4,774.5 1007.7,771.1 1008.6,767.6 1008.8,764.2" fill="none" stroke="#202226" stroke-width="1.1"/>
<polygon points="1038.1,738.8 1037.9,735.9 1037.0,733.8 1035.7,732.7 1034.1,732.7 1032.3,733.8 1030.5,735.9 1028.8,738.7 1027.5,742.1 1026.7,745.6 1026.4,749.0 1026.7,751.8 1027.5,753.9 1028.8,755.0 1030.5,755.0 1032.3,753.9 1034.1,751.9 1035.7,749.0 1037.0,745.7 1037.9,742.1 1038.1,738.8" fill="none" stroke="#202226" stroke-width="1.1"/>
<polygon points="1067.4,713.3 1067.2,710.5 1066.3,708.4 1065.0,707.3 1063.4,707.3 1061.6,708.4 1059.8,710.4 1058.1,713.3 1056.8,716.6 1056.0,720.2 1055.7,723.5 1056.0,726.4 1056.8,728.4 1058.1,729.5 1059.8,729.5 1061.6,728.5 1063.4,726.4 1065.0,723.6 1066.3,720.2 1067.2,716.7 1067.4,713.3" fill="none" stroke="#202226" stroke-width="1.1"/>
<polygon points="1096.7,687.9 1096.5,685.0 1095.6,682.9 1094.3,681.8 1092.7,681.8 1090.9,682.9 1089.1,685.0 1087.4,687.8 1086.1,691.2 1085.3,694.7 1085.0,698.1 1085.3,700.9 1086.1,703.0 1087.4,704.1 1089.1,704.1 1090.9,703.0 1092.7,701.0 1094.3,698.1 1095.6,694.8 1096.5,691.2 1096.7,687.9" fill="none" stroke="#202226" stroke-width="1.1"/>
<polygon points="1126.0,662.4 1125.8,659.6 1124.9,657.5 1123.6,656.4 1122.0,656.4 1120.2,657.5 1118.4,659.5 1116.7,662.4 1115.4,665.7 1114.6,669.3 1114.3,672.6 1114.6,675.5 1115.4,677.5 1116.7,678.6 1118.4,678.6 1120.2,677.6 1122.0,675.5 1123.6,672.7 1124.9,669.3 1125.8,665.8 1126.0,662.4" fill="none" stroke="#202226" stroke-width="1.1"/>
<polygon points="1155.3,637.0 1155.1,634.1 1154.2,632.0 1152.9,630.9 1151.3,630.9 1149.5,632.0 1147.7,634.1 1146.0,636.9 1144.7,640.3 1143.9,643.8 1143.6,647.2 1143.9,650.0 1144.7,652.1 1146.0,653.2 1147.7,653.2 1149.5,652.1 1151.3,650.1 1152.9,647.2 1154.2,643.9 1155.1,640.3 1155.3,637.0" fill="none" stroke="#202226" stroke-width="1.1"/>
<polygon points="822.5,866.8 819.2,870.5 817.4,874.4 817.1,878.4 818.4,882.4 821.3,886.1 825.5,889.5 831.0,892.5 837.6,894.8 1601.4,1113.0 1601.4,1122.1 837.6,903.8 831.0,901.5 825.5,898.6 821.3,895.2 818.4,891.4 817.1,887.5 817.4,883.4 819.2,879.5 822.5,875.8" fill="#33363b" stroke="#15171a" stroke-width="1" stroke-linejoin="round" />
<ellipse cx="862.9" cy="868.9" rx="9.5" ry="5" fill="none" stroke="#17191c" stroke-width="1.1" transform="rotate(8 862.9 868.9)"/>
<ellipse cx="862.9" cy="883.4" rx="10" ry="5.2" fill="none" stroke="#17191c" stroke-width="1.1" transform="rotate(8 862.9 883.4)"/>
<ellipse cx="873.5" cy="867.5" rx="4.8" ry="9.5" fill="none" stroke="#17191c" stroke-width="1.1" transform="rotate(8 873.5 867.5)"/>
<ellipse cx="842.3" cy="891" rx="4.5" ry="9.5" fill="none" stroke="#17191c" stroke-width="1.1" transform="rotate(8 842.3 891)"/>
<polyline points="1128.9,689.9 1851.0,896.2" fill="none" stroke="#1d1f23" stroke-width="1.1" stroke-linejoin="round" stroke-linecap="round" />
<polyline points="1064.7,625.0 1064.7,662.0 1096.0,634.0" fill="none" stroke="#1d1f23" stroke-width="1.0" stroke-linejoin="round" stroke-linecap="round" />
<g clip-path="url(#sc1)"><polygon points="811.2,603.0 1675.6,850.0 1675.6,877.4 811.2,630.4" fill="#363b40" stroke="#0e0f11" stroke-width="1.0" stroke-linejoin="round" />
<polygon points="811.2,630.4 1675.6,877.4 1675.6,887.6 811.2,640.6" fill="#2a2d31" stroke="#0e0f11" stroke-width="1.0" stroke-linejoin="round" />
<polygon points="811.2,640.6 1675.6,887.6 1675.6,910.0 811.2,663.0" fill="#222528" stroke="#0e0f11" stroke-width="1.0" stroke-linejoin="round" /></g>
<polygon points="1381.6,728.0 1497.0,747.0 1497.0,797.6 1381.6,765.0" fill="#50545c" stroke="none" stroke-width="0" stroke-linejoin="round" />
<polygon points="1497.0,755.0 1583.0,778.0 1583.0,824.0 1497.0,797.6" fill="#4d5159" stroke="none" stroke-width="0" stroke-linejoin="round" />
<polyline points="1381.6,728.0 1381.6,930.0" fill="none" stroke="#1b1d21" stroke-width="1" stroke-linejoin="round" stroke-linecap="round" />
<polyline points="1381.6,728.0 1393.8,715.0" fill="none" stroke="#1b1d21" stroke-width="1" stroke-linejoin="round" stroke-linecap="round" />
<polyline points="1381.6,728.0 1497.0,747.0" fill="none" stroke="#1b1d21" stroke-width="1" stroke-linejoin="round" stroke-linecap="round" />
<polyline points="1497.0,747.0 1497.0,797.6" fill="none" stroke="#1b1d21" stroke-width="1" stroke-linejoin="round" stroke-linecap="round" />
<polyline points="1497.0,762.0 1583.0,786.0" fill="none" stroke="#1b1d21" stroke-width="1" stroke-linejoin="round" stroke-linecap="round" />
<polyline points="1583.0,786.0 1583.0,985.0" fill="none" stroke="#1b1d21" stroke-width="1" stroke-linejoin="round" stroke-linecap="round" />
<polyline points="1583.0,786.0 1600.0,770.0" fill="none" stroke="#1b1d21" stroke-width="1" stroke-linejoin="round" stroke-linecap="round" />
<polyline points="1381.6,930.0 1583.0,985.0" fill="none" stroke="#1b1d21" stroke-width="1" stroke-linejoin="round" stroke-linecap="round" />
<polyline points="1381.6,930.0 1470.0,855.0" fill="none" stroke="#1b1d21" stroke-width="1" stroke-linejoin="round" stroke-linecap="round" />
<polyline points="1583.0,985.0 1610.0,960.0" fill="none" stroke="#1b1d21" stroke-width="1" stroke-linejoin="round" stroke-linecap="round" />
<circle cx="1540.2" cy="808" r="4.6" fill="#fff" stroke="#111" stroke-width="1.6"/><circle cx="1540.2" cy="808" r="1.6" fill="#111"/>
<polygon points="1597.2,671.4 1714.5,569.6 1714.5,670.1 1597.2,771.9" fill="#2f8437" stroke="#0c2a10" stroke-width="1.2" stroke-linejoin="round" />
<polygon points="1601.4,674.8 1710.3,580.2 1710.3,666.6 1601.4,761.3" fill="#46a54c" stroke="#0c2a10" stroke-width="1" stroke-linejoin="round" />
<polygon points="1601.4,674.8 1710.3,580.2 1588.3,545.3 1479.3,640.0" fill="#3c9443" stroke="none" stroke-width="0" stroke-linejoin="round" clip-path="url(#endclip)"/>
<polygon points="783.6,438.9 1597.2,671.4 1597.2,771.9 783.6,539.4" fill="#27622c" stroke="#0c2a10" stroke-width="1.3" stroke-linejoin="round" />
<polygon points="783.6,438.9 1597.2,671.4 1714.5,569.6 900.8,337.1" fill="#44a048" stroke="#0c2a10" stroke-width="1.3" stroke-linejoin="round" />
<polygon points="932.6,380.0 933.7,378.6 934.1,377.0 933.7,375.5 932.6,374.1 930.7,372.9 928.3,372.0 925.4,371.4 922.4,371.2 919.4,371.4 916.5,372.0 914.1,372.9 912.2,374.2 911.1,375.6 910.7,377.1 911.1,378.6 912.2,380.0 914.1,381.2 916.5,382.2 919.4,382.7 922.4,382.9 925.4,382.7 928.3,382.1 930.7,381.2 932.6,380.0" fill="#22662d" stroke="#0b2e12" stroke-width="1.3"/><polygon points="930.5,381.2 931.6,379.8 931.7,378.4 931.0,376.9 929.4,375.7 927.1,374.8 924.3,374.3 921.4,374.2 918.6,374.6 916.1,375.4 914.3,376.5 913.2,377.9 913.1,379.4 913.8,380.8 915.4,382.0 917.7,382.9 920.5,383.5 923.4,383.5 926.2,383.1 928.7,382.3 930.5,381.2" fill="#154a1f"/>
<polygon points="983.4,394.5 984.6,393.1 985.0,391.6 984.6,390.1 983.4,388.6 981.5,387.4 979.1,386.5 976.3,385.9 973.2,385.7 970.2,385.9 967.4,386.5 964.9,387.5 963.1,388.7 961.9,390.1 961.5,391.6 961.9,393.1 963.1,394.6 965.0,395.8 967.4,396.7 970.2,397.3 973.3,397.5 976.3,397.3 979.1,396.7 981.6,395.7 983.4,394.5" fill="#22662d" stroke="#0b2e12" stroke-width="1.3"/><polygon points="981.4,395.7 982.4,394.4 982.6,392.9 981.8,391.5 980.2,390.2 977.9,389.3 975.2,388.8 972.3,388.7 969.4,389.1 967.0,389.9 965.1,391.1 964.1,392.4 963.9,393.9 964.7,395.3 966.3,396.6 968.6,397.5 971.3,398.0 974.2,398.1 977.1,397.7 979.5,396.9 981.4,395.7" fill="#154a1f"/>
<polygon points="1034.3,409.0 1035.4,407.6 1035.8,406.1 1035.4,404.6 1034.3,403.2 1032.4,402.0 1030.0,401.0 1027.1,400.5 1024.1,400.3 1021.1,400.5 1018.2,401.1 1015.8,402.0 1013.9,403.2 1012.8,404.6 1012.4,406.2 1012.8,407.7 1013.9,409.1 1015.8,410.3 1018.2,411.2 1021.1,411.8 1024.1,412.0 1027.1,411.8 1030.0,411.2 1032.4,410.3 1034.3,409.0" fill="#22662d" stroke="#0b2e12" stroke-width="1.3"/><polygon points="1032.2,410.3 1033.3,408.9 1033.4,407.4 1032.7,406.0 1031.1,404.8 1028.8,403.9 1026.0,403.3 1023.1,403.3 1020.3,403.7 1017.8,404.5 1016.0,405.6 1014.9,407.0 1014.8,408.4 1015.5,409.9 1017.1,411.1 1019.4,412.0 1022.2,412.5 1025.1,412.6 1027.9,412.2 1030.4,411.4 1032.2,410.3" fill="#154a1f"/>
<polygon points="1085.1,423.6 1086.3,422.1 1086.7,420.6 1086.3,419.1 1085.1,417.7 1083.2,416.5 1080.8,415.6 1078.0,415.0 1074.9,414.8 1071.9,415.0 1069.1,415.6 1066.6,416.5 1064.8,417.8 1063.6,419.2 1063.2,420.7 1063.6,422.2 1064.8,423.6 1066.7,424.8 1069.1,425.8 1071.9,426.3 1075.0,426.5 1078.0,426.3 1080.8,425.7 1083.3,424.8 1085.1,423.6" fill="#22662d" stroke="#0b2e12" stroke-width="1.3"/><polygon points="1083.1,424.8 1084.1,423.4 1084.3,421.9 1083.5,420.5 1081.9,419.3 1079.6,418.4 1076.9,417.9 1074.0,417.8 1071.1,418.2 1068.7,419.0 1066.8,420.1 1065.8,421.5 1065.6,423.0 1066.4,424.4 1068.0,425.6 1070.3,426.5 1073.0,427.1 1075.9,427.1 1078.8,426.7 1081.2,425.9 1083.1,424.8" fill="#154a1f"/>
<polygon points="1136.0,438.1 1137.1,436.7 1137.5,435.2 1137.1,433.6 1136.0,432.2 1134.1,431.0 1131.7,430.1 1128.8,429.5 1125.8,429.3 1122.8,429.5 1119.9,430.1 1117.5,431.1 1115.6,432.3 1114.5,433.7 1114.1,435.2 1114.5,436.7 1115.6,438.1 1117.5,439.4 1119.9,440.3 1122.8,440.9 1125.8,441.1 1128.8,440.8 1131.7,440.3 1134.1,439.3 1136.0,438.1" fill="#22662d" stroke="#0b2e12" stroke-width="1.3"/><polygon points="1133.9,439.3 1135.0,437.9 1135.1,436.5 1134.4,435.1 1132.8,433.8 1130.5,432.9 1127.7,432.4 1124.8,432.3 1122.0,432.7 1119.5,433.5 1117.7,434.7 1116.6,436.0 1116.5,437.5 1117.2,438.9 1118.8,440.1 1121.1,441.1 1123.9,441.6 1126.8,441.7 1129.6,441.3 1132.1,440.5 1133.9,439.3" fill="#154a1f"/>
<polygon points="1186.8,452.6 1188.0,451.2 1188.4,449.7 1188.0,448.2 1186.8,446.8 1184.9,445.6 1182.5,444.6 1179.7,444.1 1176.6,443.9 1173.6,444.1 1170.8,444.7 1168.3,445.6 1166.5,446.8 1165.3,448.2 1164.9,449.7 1165.3,451.3 1166.5,452.7 1168.4,453.9 1170.8,454.8 1173.6,455.4 1176.7,455.6 1179.7,455.4 1182.5,454.8 1185.0,453.8 1186.8,452.6" fill="#22662d" stroke="#0b2e12" stroke-width="1.3"/><polygon points="1184.8,453.8 1185.8,452.5 1186.0,451.0 1185.2,449.6 1183.6,448.4 1181.3,447.4 1178.6,446.9 1175.7,446.9 1172.8,447.2 1170.4,448.1 1168.5,449.2 1167.5,450.6 1167.3,452.0 1168.1,453.4 1169.7,454.7 1172.0,455.6 1174.7,456.1 1177.6,456.2 1180.5,455.8 1182.9,455.0 1184.8,453.8" fill="#154a1f"/>
<polygon points="1237.7,467.2 1238.8,465.7 1239.2,464.2 1238.8,462.7 1237.7,461.3 1235.8,460.1 1233.4,459.2 1230.5,458.6 1227.5,458.4 1224.5,458.6 1221.6,459.2 1219.2,460.1 1217.3,461.3 1216.2,462.8 1215.8,464.3 1216.2,465.8 1217.3,467.2 1219.2,468.4 1221.6,469.3 1224.5,469.9 1227.5,470.1 1230.5,469.9 1233.4,469.3 1235.8,468.4 1237.7,467.2" fill="#22662d" stroke="#0b2e12" stroke-width="1.3"/><polygon points="1235.6,468.4 1236.7,467.0 1236.8,465.5 1236.1,464.1 1234.5,462.9 1232.2,462.0 1229.4,461.5 1226.5,461.4 1223.7,461.8 1221.2,462.6 1219.4,463.7 1218.3,465.1 1218.2,466.6 1218.9,468.0 1220.5,469.2 1222.8,470.1 1225.6,470.6 1228.5,470.7 1231.3,470.3 1233.8,469.5 1235.6,468.4" fill="#154a1f"/>
<polygon points="1288.5,481.7 1289.7,480.3 1290.1,478.8 1289.7,477.2 1288.5,475.8 1286.6,474.6 1284.2,473.7 1281.4,473.1 1278.3,472.9 1275.3,473.1 1272.5,473.7 1270.0,474.7 1268.2,475.9 1267.0,477.3 1266.6,478.8 1267.0,480.3 1268.2,481.7 1270.1,482.9 1272.5,483.9 1275.3,484.4 1278.4,484.6 1281.4,484.4 1284.2,483.8 1286.7,482.9 1288.5,481.7" fill="#22662d" stroke="#0b2e12" stroke-width="1.3"/><polygon points="1286.5,482.9 1287.5,481.5 1287.7,480.1 1286.9,478.7 1285.3,477.4 1283.0,476.5 1280.3,476.0 1277.4,475.9 1274.5,476.3 1272.1,477.1 1270.2,478.3 1269.2,479.6 1269.0,481.1 1269.8,482.5 1271.4,483.7 1273.7,484.7 1276.4,485.2 1279.3,485.2 1282.2,484.9 1284.6,484.0 1286.5,482.9" fill="#154a1f"/>
<polygon points="1339.4,496.2 1340.5,494.8 1340.9,493.3 1340.5,491.8 1339.4,490.4 1337.5,489.1 1335.1,488.2 1332.2,487.6 1329.2,487.4 1326.2,487.7 1323.3,488.2 1320.9,489.2 1319.0,490.4 1317.9,491.8 1317.5,493.3 1317.9,494.9 1319.0,496.3 1320.9,497.5 1323.3,498.4 1326.2,499.0 1329.2,499.2 1332.2,499.0 1335.1,498.4 1337.5,497.4 1339.4,496.2" fill="#22662d" stroke="#0b2e12" stroke-width="1.3"/><polygon points="1337.3,497.4 1338.4,496.1 1338.5,494.6 1337.8,493.2 1336.2,492.0 1333.9,491.0 1331.1,490.5 1328.2,490.4 1325.4,490.8 1322.9,491.6 1321.1,492.8 1320.0,494.2 1319.9,495.6 1320.6,497.0 1322.2,498.3 1324.5,499.2 1327.3,499.7 1330.2,499.8 1333.0,499.4 1335.5,498.6 1337.3,497.4" fill="#154a1f"/>
<polygon points="1390.2,510.7 1391.4,509.3 1391.8,507.8 1391.4,506.3 1390.2,504.9 1388.3,503.7 1385.9,502.8 1383.1,502.2 1380.0,502.0 1377.0,502.2 1374.2,502.8 1371.7,503.7 1369.9,504.9 1368.7,506.4 1368.3,507.9 1368.7,509.4 1369.9,510.8 1371.8,512.0 1374.2,512.9 1377.0,513.5 1380.1,513.7 1383.1,513.5 1385.9,512.9 1388.4,512.0 1390.2,510.7" fill="#22662d" stroke="#0b2e12" stroke-width="1.3"/><polygon points="1388.2,512.0 1389.2,510.6 1389.4,509.1 1388.6,507.7 1387.0,506.5 1384.7,505.6 1382.0,505.0 1379.1,505.0 1376.2,505.4 1373.8,506.2 1371.9,507.3 1370.9,508.7 1370.7,510.2 1371.5,511.6 1373.1,512.8 1375.4,513.7 1378.1,514.2 1381.0,514.3 1383.9,513.9 1386.3,513.1 1388.2,512.0" fill="#154a1f"/>
<polygon points="1441.1,525.3 1442.2,523.9 1442.6,522.3 1442.2,520.8 1441.1,519.4 1439.2,518.2 1436.8,517.3 1433.9,516.7 1430.9,516.5 1427.9,516.7 1425.0,517.3 1422.6,518.2 1420.7,519.5 1419.6,520.9 1419.2,522.4 1419.6,523.9 1420.7,525.3 1422.6,526.5 1425.0,527.5 1427.9,528.0 1430.9,528.2 1433.9,528.0 1436.8,527.4 1439.2,526.5 1441.1,525.3" fill="#22662d" stroke="#0b2e12" stroke-width="1.3"/><polygon points="1439.0,526.5 1440.1,525.1 1440.2,523.7 1439.5,522.2 1437.9,521.0 1435.6,520.1 1432.8,519.6 1429.9,519.5 1427.1,519.9 1424.6,520.7 1422.8,521.8 1421.7,523.2 1421.6,524.7 1422.3,526.1 1423.9,527.3 1426.2,528.2 1429.0,528.8 1431.9,528.8 1434.7,528.4 1437.2,527.6 1439.0,526.5" fill="#154a1f"/>
<polygon points="1491.9,539.8 1493.1,538.4 1493.5,536.9 1493.1,535.4 1491.9,533.9 1490.0,532.7 1487.6,531.8 1484.8,531.2 1481.7,531.0 1478.7,531.2 1475.9,531.8 1473.4,532.8 1471.6,534.0 1470.4,535.4 1470.0,536.9 1470.4,538.4 1471.6,539.9 1473.5,541.1 1475.9,542.0 1478.7,542.6 1481.8,542.8 1484.8,542.6 1487.6,542.0 1490.1,541.0 1491.9,539.8" fill="#22662d" stroke="#0b2e12" stroke-width="1.3"/><polygon points="1489.9,541.0 1490.9,539.7 1491.1,538.2 1490.3,536.8 1488.7,535.5 1486.4,534.6 1483.7,534.1 1480.8,534.0 1477.9,534.4 1475.5,535.2 1473.6,536.4 1472.6,537.7 1472.4,539.2 1473.2,540.6 1474.8,541.9 1477.1,542.8 1479.8,543.3 1482.7,543.4 1485.6,543.0 1488.0,542.2 1489.9,541.0" fill="#154a1f"/>
<polygon points="1542.8,554.3 1543.9,552.9 1544.3,551.4 1543.9,549.9 1542.8,548.5 1540.9,547.3 1538.5,546.3 1535.6,545.8 1532.6,545.6 1529.6,545.8 1526.7,546.4 1524.3,547.3 1522.4,548.5 1521.3,549.9 1520.9,551.5 1521.3,553.0 1522.4,554.4 1524.3,555.6 1526.7,556.5 1529.6,557.1 1532.6,557.3 1535.6,557.1 1538.5,556.5 1540.9,555.6 1542.8,554.3" fill="#22662d" stroke="#0b2e12" stroke-width="1.3"/><polygon points="1540.7,555.6 1541.8,554.2 1541.9,552.7 1541.2,551.3 1539.6,550.1 1537.3,549.2 1534.5,548.6 1531.6,548.6 1528.8,549.0 1526.3,549.8 1524.5,550.9 1523.4,552.3 1523.3,553.7 1524.0,555.2 1525.6,556.4 1527.9,557.3 1530.7,557.8 1533.6,557.9 1536.4,557.5 1538.9,556.7 1540.7,555.6" fill="#154a1f"/>
<polygon points="1593.6,568.9 1594.8,567.4 1595.2,565.9 1594.8,564.4 1593.6,563.0 1591.7,561.8 1589.3,560.9 1586.5,560.3 1583.4,560.1 1580.4,560.3 1577.6,560.9 1575.1,561.8 1573.3,563.1 1572.1,564.5 1571.7,566.0 1572.1,567.5 1573.3,568.9 1575.2,570.1 1577.6,571.0 1580.4,571.6 1583.5,571.8 1586.5,571.6 1589.3,571.0 1591.8,570.1 1593.6,568.9" fill="#22662d" stroke="#0b2e12" stroke-width="1.3"/><polygon points="1591.6,570.1 1592.6,568.7 1592.8,567.2 1592.0,565.8 1590.4,564.6 1588.1,563.7 1585.4,563.2 1582.5,563.1 1579.6,563.5 1577.2,564.3 1575.3,565.4 1574.3,566.8 1574.1,568.3 1574.9,569.7 1576.5,570.9 1578.8,571.8 1581.5,572.4 1584.4,572.4 1587.3,572.0 1589.7,571.2 1591.6,570.1" fill="#154a1f"/>
<polygon points="1644.5,583.4 1645.6,582.0 1646.0,580.5 1645.6,578.9 1644.5,577.5 1642.6,576.3 1640.2,575.4 1637.3,574.8 1634.3,574.6 1631.3,574.8 1628.4,575.4 1626.0,576.4 1624.1,577.6 1623.0,579.0 1622.6,580.5 1623.0,582.0 1624.1,583.4 1626.0,584.7 1628.4,585.6 1631.3,586.2 1634.3,586.4 1637.3,586.1 1640.2,585.6 1642.6,584.6 1644.5,583.4" fill="#22662d" stroke="#0b2e12" stroke-width="1.3"/><polygon points="1642.4,584.6 1643.5,583.2 1643.6,581.8 1642.9,580.4 1641.3,579.1 1639.0,578.2 1636.2,577.7 1633.3,577.6 1630.5,578.0 1628.0,578.8 1626.2,580.0 1625.1,581.3 1625.0,582.8 1625.7,584.2 1627.3,585.4 1629.6,586.4 1632.4,586.9 1635.3,587.0 1638.1,586.6 1640.6,585.8 1642.4,584.6" fill="#154a1f"/>
<polygon points="903.3,405.4 904.4,404.0 904.8,402.5 904.4,401.0 903.3,399.6 901.4,398.4 899.0,397.4 896.1,396.9 893.1,396.7 890.1,396.9 887.2,397.5 884.8,398.4 882.9,399.6 881.8,401.0 881.4,402.5 881.8,404.1 882.9,405.5 884.8,406.7 887.2,407.6 890.1,408.2 893.1,408.4 896.1,408.2 899.0,407.6 901.4,406.6 903.3,405.4" fill="#22662d" stroke="#0b2e12" stroke-width="1.3"/><polygon points="901.2,406.6 902.3,405.3 902.4,403.8 901.7,402.4 900.1,401.2 897.8,400.2 895.0,399.7 892.1,399.7 889.3,400.0 886.8,400.9 885.0,402.0 883.9,403.4 883.8,404.8 884.5,406.2 886.1,407.5 888.4,408.4 891.2,408.9 894.1,409.0 896.9,408.6 899.4,407.8 901.2,406.6" fill="#154a1f"/>
<polygon points="954.1,420.0 955.3,418.5 955.7,417.0 955.3,415.5 954.1,414.1 952.2,412.9 949.8,412.0 947.0,411.4 943.9,411.2 940.9,411.4 938.1,412.0 935.6,412.9 933.8,414.1 932.6,415.6 932.2,417.1 932.6,418.6 933.8,420.0 935.7,421.2 938.1,422.1 940.9,422.7 944.0,422.9 947.0,422.7 949.8,422.1 952.3,421.2 954.1,420.0" fill="#22662d" stroke="#0b2e12" stroke-width="1.3"/><polygon points="952.1,421.2 953.1,419.8 953.3,418.3 952.5,416.9 950.9,415.7 948.6,414.8 945.9,414.3 943.0,414.2 940.1,414.6 937.7,415.4 935.8,416.5 934.8,417.9 934.6,419.4 935.4,420.8 937.0,422.0 939.3,422.9 942.0,423.4 944.9,423.5 947.8,423.1 950.2,422.3 952.1,421.2" fill="#154a1f"/>
<polygon points="1005.0,434.5 1006.1,433.1 1006.5,431.6 1006.1,430.0 1005.0,428.6 1003.1,427.4 1000.7,426.5 997.8,425.9 994.8,425.7 991.8,425.9 988.9,426.5 986.5,427.5 984.6,428.7 983.5,430.1 983.1,431.6 983.5,433.1 984.6,434.5 986.5,435.7 988.9,436.7 991.8,437.2 994.8,437.4 997.8,437.2 1000.7,436.6 1003.1,435.7 1005.0,434.5" fill="#22662d" stroke="#0b2e12" stroke-width="1.3"/><polygon points="1002.9,435.7 1004.0,434.3 1004.1,432.9 1003.4,431.5 1001.8,430.2 999.5,429.3 996.7,428.8 993.8,428.7 991.0,429.1 988.5,429.9 986.7,431.1 985.6,432.4 985.5,433.9 986.2,435.3 987.8,436.5 990.1,437.5 992.9,438.0 995.8,438.0 998.6,437.7 1001.1,436.8 1002.9,435.7" fill="#154a1f"/>
<polygon points="1055.8,449.0 1057.0,447.6 1057.4,446.1 1057.0,444.6 1055.8,443.2 1053.9,441.9 1051.5,441.0 1048.7,440.4 1045.6,440.2 1042.6,440.5 1039.8,441.0 1037.3,442.0 1035.5,443.2 1034.3,444.6 1033.9,446.1 1034.3,447.7 1035.5,449.1 1037.4,450.3 1039.8,451.2 1042.6,451.8 1045.7,452.0 1048.7,451.8 1051.5,451.2 1054.0,450.2 1055.8,449.0" fill="#22662d" stroke="#0b2e12" stroke-width="1.3"/><polygon points="1053.8,450.2 1054.8,448.9 1055.0,447.4 1054.2,446.0 1052.6,444.8 1050.3,443.8 1047.6,443.3 1044.7,443.2 1041.8,443.6 1039.4,444.4 1037.5,445.6 1036.5,447.0 1036.3,448.4 1037.1,449.8 1038.7,451.1 1041.0,452.0 1043.7,452.5 1046.6,452.6 1049.5,452.2 1051.9,451.4 1053.8,450.2" fill="#154a1f"/>
<polygon points="1106.7,463.5 1107.8,462.1 1108.2,460.6 1107.8,459.1 1106.7,457.7 1104.8,456.5 1102.4,455.6 1099.5,455.0 1096.5,454.8 1093.5,455.0 1090.6,455.6 1088.2,456.5 1086.3,457.7 1085.2,459.2 1084.8,460.7 1085.2,462.2 1086.3,463.6 1088.2,464.8 1090.6,465.7 1093.5,466.3 1096.5,466.5 1099.5,466.3 1102.4,465.7 1104.8,464.8 1106.7,463.5" fill="#22662d" stroke="#0b2e12" stroke-width="1.3"/><polygon points="1104.6,464.8 1105.7,463.4 1105.8,461.9 1105.1,460.5 1103.5,459.3 1101.2,458.4 1098.4,457.8 1095.5,457.8 1092.7,458.2 1090.2,459.0 1088.4,460.1 1087.3,461.5 1087.2,463.0 1087.9,464.4 1089.5,465.6 1091.8,466.5 1094.6,467.0 1097.5,467.1 1100.3,466.7 1102.8,465.9 1104.6,464.8" fill="#154a1f"/>
<polygon points="1157.5,478.1 1158.7,476.7 1159.1,475.1 1158.7,473.6 1157.5,472.2 1155.6,471.0 1153.2,470.1 1150.4,469.5 1147.3,469.3 1144.3,469.5 1141.5,470.1 1139.0,471.0 1137.2,472.3 1136.0,473.7 1135.6,475.2 1136.0,476.7 1137.2,478.1 1139.1,479.3 1141.5,480.3 1144.3,480.8 1147.4,481.0 1150.4,480.8 1153.2,480.2 1155.7,479.3 1157.5,478.1" fill="#22662d" stroke="#0b2e12" stroke-width="1.3"/><polygon points="1155.5,479.3 1156.5,477.9 1156.7,476.5 1155.9,475.0 1154.3,473.8 1152.0,472.9 1149.3,472.4 1146.4,472.3 1143.5,472.7 1141.1,473.5 1139.2,474.6 1138.2,476.0 1138.0,477.5 1138.8,478.9 1140.4,480.1 1142.7,481.0 1145.4,481.6 1148.3,481.6 1151.2,481.2 1153.6,480.4 1155.5,479.3" fill="#154a1f"/>
<polygon points="1208.4,492.6 1209.5,491.2 1209.9,489.7 1209.5,488.2 1208.4,486.7 1206.5,485.5 1204.1,484.6 1201.2,484.0 1198.2,483.8 1195.2,484.0 1192.3,484.6 1189.9,485.6 1188.0,486.8 1186.9,488.2 1186.5,489.7 1186.9,491.2 1188.0,492.7 1189.9,493.9 1192.3,494.8 1195.2,495.4 1198.2,495.6 1201.2,495.4 1204.1,494.8 1206.5,493.8 1208.4,492.6" fill="#22662d" stroke="#0b2e12" stroke-width="1.3"/><polygon points="1206.3,493.8 1207.4,492.5 1207.5,491.0 1206.8,489.6 1205.2,488.3 1202.9,487.4 1200.1,486.9 1197.2,486.8 1194.4,487.2 1191.9,488.0 1190.1,489.2 1189.0,490.5 1188.9,492.0 1189.6,493.4 1191.2,494.7 1193.5,495.6 1196.3,496.1 1199.2,496.2 1202.0,495.8 1204.5,495.0 1206.3,493.8" fill="#154a1f"/>
<polygon points="1259.2,507.1 1260.4,505.7 1260.8,504.2 1260.4,502.7 1259.2,501.3 1257.3,500.1 1254.9,499.1 1252.1,498.6 1249.0,498.4 1246.0,498.6 1243.2,499.2 1240.7,500.1 1238.9,501.3 1237.7,502.7 1237.3,504.3 1237.7,505.8 1238.9,507.2 1240.8,508.4 1243.2,509.3 1246.0,509.9 1249.1,510.1 1252.1,509.9 1254.9,509.3 1257.4,508.4 1259.2,507.1" fill="#22662d" stroke="#0b2e12" stroke-width="1.3"/><polygon points="1257.2,508.4 1258.2,507.0 1258.4,505.5 1257.6,504.1 1256.0,502.9 1253.7,502.0 1251.0,501.4 1248.1,501.4 1245.2,501.8 1242.8,502.6 1240.9,503.7 1239.9,505.1 1239.7,506.5 1240.5,508.0 1242.1,509.2 1244.4,510.1 1247.1,510.6 1250.0,510.7 1252.9,510.3 1255.3,509.5 1257.2,508.4" fill="#154a1f"/>
<polygon points="1310.1,521.7 1311.2,520.2 1311.6,518.7 1311.2,517.2 1310.1,515.8 1308.2,514.6 1305.8,513.7 1302.9,513.1 1299.9,512.9 1296.9,513.1 1294.0,513.7 1291.6,514.6 1289.7,515.9 1288.6,517.3 1288.2,518.8 1288.6,520.3 1289.7,521.7 1291.6,522.9 1294.0,523.8 1296.9,524.4 1299.9,524.6 1302.9,524.4 1305.8,523.8 1308.2,522.9 1310.1,521.7" fill="#22662d" stroke="#0b2e12" stroke-width="1.3"/><polygon points="1308.0,522.9 1309.1,521.5 1309.2,520.0 1308.5,518.6 1306.9,517.4 1304.6,516.5 1301.8,516.0 1298.9,515.9 1296.1,516.3 1293.6,517.1 1291.8,518.2 1290.7,519.6 1290.6,521.1 1291.3,522.5 1292.9,523.7 1295.2,524.6 1298.0,525.2 1300.9,525.2 1303.7,524.8 1306.2,524.0 1308.0,522.9" fill="#154a1f"/>
<polygon points="1360.9,536.2 1362.1,534.8 1362.5,533.3 1362.1,531.7 1360.9,530.3 1359.0,529.1 1356.6,528.2 1353.8,527.6 1350.7,527.4 1347.7,527.6 1344.9,528.2 1342.4,529.2 1340.6,530.4 1339.4,531.8 1339.0,533.3 1339.4,534.8 1340.6,536.2 1342.5,537.5 1344.9,538.4 1347.7,539.0 1350.8,539.2 1353.8,538.9 1356.6,538.4 1359.1,537.4 1360.9,536.2" fill="#22662d" stroke="#0b2e12" stroke-width="1.3"/><polygon points="1358.9,537.4 1359.9,536.0 1360.1,534.6 1359.3,533.2 1357.7,531.9 1355.4,531.0 1352.7,530.5 1349.8,530.4 1346.9,530.8 1344.5,531.6 1342.6,532.8 1341.6,534.1 1341.4,535.6 1342.2,537.0 1343.8,538.2 1346.1,539.2 1348.8,539.7 1351.7,539.8 1354.6,539.4 1357.0,538.6 1358.9,537.4" fill="#154a1f"/>
<polygon points="1411.8,550.7 1412.9,549.3 1413.3,547.8 1412.9,546.3 1411.8,544.9 1409.9,543.7 1407.5,542.7 1404.6,542.2 1401.6,542.0 1398.6,542.2 1395.7,542.8 1393.3,543.7 1391.4,544.9 1390.3,546.3 1389.9,547.8 1390.3,549.4 1391.4,550.8 1393.3,552.0 1395.7,552.9 1398.6,553.5 1401.6,553.7 1404.6,553.5 1407.5,552.9 1409.9,551.9 1411.8,550.7" fill="#22662d" stroke="#0b2e12" stroke-width="1.3"/><polygon points="1409.7,551.9 1410.8,550.6 1410.9,549.1 1410.2,547.7 1408.6,546.5 1406.3,545.5 1403.5,545.0 1400.6,545.0 1397.8,545.3 1395.3,546.2 1393.5,547.3 1392.4,548.7 1392.3,550.1 1393.0,551.5 1394.6,552.8 1396.9,553.7 1399.7,554.2 1402.6,554.3 1405.4,553.9 1407.9,553.1 1409.7,551.9" fill="#154a1f"/>
<polygon points="1462.6,565.3 1463.8,563.8 1464.2,562.3 1463.8,560.8 1462.6,559.4 1460.7,558.2 1458.3,557.3 1455.5,556.7 1452.4,556.5 1449.4,556.7 1446.6,557.3 1444.1,558.2 1442.3,559.4 1441.1,560.9 1440.7,562.4 1441.1,563.9 1442.3,565.3 1444.2,566.5 1446.6,567.4 1449.4,568.0 1452.5,568.2 1455.5,568.0 1458.3,567.4 1460.8,566.5 1462.6,565.3" fill="#22662d" stroke="#0b2e12" stroke-width="1.3"/><polygon points="1460.6,566.5 1461.6,565.1 1461.8,563.6 1461.0,562.2 1459.4,561.0 1457.1,560.1 1454.4,559.6 1451.5,559.5 1448.6,559.9 1446.2,560.7 1444.3,561.8 1443.3,563.2 1443.1,564.7 1443.9,566.1 1445.5,567.3 1447.8,568.2 1450.5,568.7 1453.4,568.8 1456.3,568.4 1458.7,567.6 1460.6,566.5" fill="#154a1f"/>
<polygon points="1513.5,579.8 1514.6,578.4 1515.0,576.9 1514.6,575.3 1513.5,573.9 1511.6,572.7 1509.2,571.8 1506.3,571.2 1503.3,571.0 1500.3,571.2 1497.4,571.8 1495.0,572.8 1493.1,574.0 1492.0,575.4 1491.6,576.9 1492.0,578.4 1493.1,579.8 1495.0,581.0 1497.4,582.0 1500.3,582.5 1503.3,582.7 1506.3,582.5 1509.2,581.9 1511.6,581.0 1513.5,579.8" fill="#22662d" stroke="#0b2e12" stroke-width="1.3"/><polygon points="1511.4,581.0 1512.5,579.6 1512.6,578.2 1511.9,576.8 1510.3,575.5 1508.0,574.6 1505.2,574.1 1502.3,574.0 1499.5,574.4 1497.0,575.2 1495.2,576.4 1494.1,577.7 1494.0,579.2 1494.7,580.6 1496.3,581.8 1498.6,582.8 1501.4,583.3 1504.3,583.3 1507.1,583.0 1509.6,582.1 1511.4,581.0" fill="#154a1f"/>
<polygon points="1564.3,594.3 1565.5,592.9 1565.9,591.4 1565.5,589.9 1564.3,588.5 1562.4,587.2 1560.0,586.3 1557.2,585.7 1554.1,585.5 1551.1,585.8 1548.3,586.3 1545.8,587.3 1544.0,588.5 1542.8,589.9 1542.4,591.4 1542.8,593.0 1544.0,594.4 1545.9,595.6 1548.3,596.5 1551.1,597.1 1554.2,597.3 1557.2,597.1 1560.0,596.5 1562.5,595.5 1564.3,594.3" fill="#22662d" stroke="#0b2e12" stroke-width="1.3"/><polygon points="1562.3,595.5 1563.3,594.2 1563.5,592.7 1562.7,591.3 1561.1,590.1 1558.8,589.1 1556.1,588.6 1553.2,588.5 1550.3,588.9 1547.9,589.7 1546.0,590.9 1545.0,592.3 1544.8,593.7 1545.6,595.1 1547.2,596.4 1549.5,597.3 1552.2,597.8 1555.1,597.9 1558.0,597.5 1560.4,596.7 1562.3,595.5" fill="#154a1f"/>
<polygon points="1615.2,608.8 1616.3,607.4 1616.7,605.9 1616.3,604.4 1615.2,603.0 1613.3,601.8 1610.9,600.8 1608.0,600.3 1605.0,600.1 1602.0,600.3 1599.1,600.9 1596.7,601.8 1594.8,603.0 1593.7,604.5 1593.3,606.0 1593.7,607.5 1594.8,608.9 1596.7,610.1 1599.1,611.0 1602.0,611.6 1605.0,611.8 1608.0,611.6 1610.9,611.0 1613.3,610.1 1615.2,608.8" fill="#22662d" stroke="#0b2e12" stroke-width="1.3"/><polygon points="1613.1,610.1 1614.2,608.7 1614.3,607.2 1613.6,605.8 1612.0,604.6 1609.7,603.7 1606.9,603.1 1604.0,603.1 1601.2,603.5 1598.7,604.3 1596.9,605.4 1595.8,606.8 1595.7,608.3 1596.4,609.7 1598.0,610.9 1600.3,611.8 1603.1,612.3 1606.0,612.4 1608.8,612.0 1611.3,611.2 1613.1,610.1" fill="#154a1f"/>
<polygon points="874.0,430.9 875.1,429.5 875.5,427.9 875.1,426.4 874.0,425.0 872.1,423.8 869.7,422.9 866.8,422.3 863.8,422.1 860.8,422.3 857.9,422.9 855.5,423.8 853.6,425.1 852.5,426.5 852.1,428.0 852.5,429.5 853.6,430.9 855.5,432.1 857.9,433.1 860.8,433.6 863.8,433.8 866.8,433.6 869.7,433.0 872.1,432.1 874.0,430.9" fill="#22662d" stroke="#0b2e12" stroke-width="1.3"/><polygon points="871.9,432.1 873.0,430.7 873.1,429.3 872.4,427.8 870.8,426.6 868.5,425.7 865.7,425.2 862.8,425.1 860.0,425.5 857.5,426.3 855.7,427.4 854.6,428.8 854.5,430.3 855.2,431.7 856.8,432.9 859.1,433.8 861.9,434.4 864.8,434.4 867.6,434.0 870.1,433.2 871.9,432.1" fill="#154a1f"/>
<polygon points="924.8,445.4 926.0,444.0 926.4,442.5 926.0,441.0 924.8,439.5 922.9,438.3 920.5,437.4 917.7,436.8 914.6,436.6 911.6,436.8 908.8,437.4 906.3,438.4 904.5,439.6 903.3,441.0 902.9,442.5 903.3,444.0 904.5,445.5 906.4,446.7 908.8,447.6 911.6,448.2 914.7,448.4 917.7,448.2 920.5,447.6 923.0,446.6 924.8,445.4" fill="#22662d" stroke="#0b2e12" stroke-width="1.3"/><polygon points="922.8,446.6 923.8,445.3 924.0,443.8 923.2,442.4 921.6,441.1 919.3,440.2 916.6,439.7 913.7,439.6 910.8,440.0 908.4,440.8 906.5,442.0 905.5,443.3 905.3,444.8 906.1,446.2 907.7,447.5 910.0,448.4 912.7,448.9 915.6,449.0 918.5,448.6 920.9,447.8 922.8,446.6" fill="#154a1f"/>
<polygon points="975.7,459.9 976.8,458.5 977.2,457.0 976.8,455.5 975.7,454.1 973.8,452.9 971.4,451.9 968.5,451.4 965.5,451.2 962.5,451.4 959.6,452.0 957.2,452.9 955.3,454.1 954.2,455.5 953.8,457.1 954.2,458.6 955.3,460.0 957.2,461.2 959.6,462.1 962.5,462.7 965.5,462.9 968.5,462.7 971.4,462.1 973.8,461.2 975.7,459.9" fill="#22662d" stroke="#0b2e12" stroke-width="1.3"/><polygon points="973.6,461.2 974.7,459.8 974.8,458.3 974.1,456.9 972.5,455.7 970.2,454.8 967.4,454.2 964.5,454.2 961.7,454.6 959.2,455.4 957.4,456.5 956.3,457.9 956.2,459.3 956.9,460.8 958.5,462.0 960.8,462.9 963.6,463.4 966.5,463.5 969.3,463.1 971.8,462.3 973.6,461.2" fill="#154a1f"/>
<polygon points="1026.5,474.5 1027.7,473.0 1028.1,471.5 1027.7,470.0 1026.5,468.6 1024.6,467.4 1022.2,466.5 1019.4,465.9 1016.3,465.7 1013.3,465.9 1010.5,466.5 1008.0,467.4 1006.2,468.7 1005.0,470.1 1004.6,471.6 1005.0,473.1 1006.2,474.5 1008.1,475.7 1010.5,476.6 1013.3,477.2 1016.4,477.4 1019.4,477.2 1022.2,476.6 1024.7,475.7 1026.5,474.5" fill="#22662d" stroke="#0b2e12" stroke-width="1.3"/><polygon points="1024.5,475.7 1025.5,474.3 1025.7,472.8 1024.9,471.4 1023.3,470.2 1021.0,469.3 1018.3,468.8 1015.4,468.7 1012.5,469.1 1010.1,469.9 1008.2,471.0 1007.2,472.4 1007.0,473.9 1007.8,475.3 1009.4,476.5 1011.7,477.4 1014.4,478.0 1017.3,478.0 1020.2,477.6 1022.6,476.8 1024.5,475.7" fill="#154a1f"/>
<polygon points="1077.4,489.0 1078.5,487.6 1078.9,486.1 1078.5,484.5 1077.4,483.1 1075.5,481.9 1073.1,481.0 1070.2,480.4 1067.2,480.2 1064.2,480.4 1061.3,481.0 1058.9,482.0 1057.0,483.2 1055.9,484.6 1055.5,486.1 1055.9,487.6 1057.0,489.0 1058.9,490.3 1061.3,491.2 1064.2,491.8 1067.2,492.0 1070.2,491.7 1073.1,491.2 1075.5,490.2 1077.4,489.0" fill="#22662d" stroke="#0b2e12" stroke-width="1.3"/><polygon points="1075.3,490.2 1076.4,488.8 1076.5,487.4 1075.8,486.0 1074.2,484.7 1071.9,483.8 1069.1,483.3 1066.2,483.2 1063.4,483.6 1060.9,484.4 1059.1,485.6 1058.0,486.9 1057.9,488.4 1058.6,489.8 1060.2,491.0 1062.5,492.0 1065.3,492.5 1068.2,492.6 1071.0,492.2 1073.5,491.4 1075.3,490.2" fill="#154a1f"/>
<polygon points="1128.2,503.5 1129.4,502.1 1129.8,500.6 1129.4,499.1 1128.2,497.7 1126.3,496.5 1123.9,495.5 1121.1,495.0 1118.0,494.8 1115.0,495.0 1112.2,495.6 1109.7,496.5 1107.9,497.7 1106.7,499.1 1106.3,500.6 1106.7,502.2 1107.9,503.6 1109.8,504.8 1112.2,505.7 1115.0,506.3 1118.1,506.5 1121.1,506.3 1123.9,505.7 1126.4,504.7 1128.2,503.5" fill="#22662d" stroke="#0b2e12" stroke-width="1.3"/><polygon points="1126.2,504.7 1127.2,503.4 1127.4,501.9 1126.6,500.5 1125.0,499.3 1122.7,498.3 1120.0,497.8 1117.1,497.8 1114.2,498.1 1111.8,499.0 1109.9,500.1 1108.9,501.5 1108.7,502.9 1109.5,504.3 1111.1,505.6 1113.4,506.5 1116.1,507.0 1119.0,507.1 1121.9,506.7 1124.3,505.9 1126.2,504.7" fill="#154a1f"/>
<polygon points="1179.1,518.1 1180.2,516.6 1180.6,515.1 1180.2,513.6 1179.1,512.2 1177.2,511.0 1174.8,510.1 1171.9,509.5 1168.9,509.3 1165.9,509.5 1163.0,510.1 1160.6,511.0 1158.7,512.2 1157.6,513.7 1157.2,515.2 1157.6,516.7 1158.7,518.1 1160.6,519.3 1163.0,520.2 1165.9,520.8 1168.9,521.0 1171.9,520.8 1174.8,520.2 1177.2,519.3 1179.1,518.1" fill="#22662d" stroke="#0b2e12" stroke-width="1.3"/><polygon points="1177.0,519.3 1178.1,517.9 1178.2,516.4 1177.5,515.0 1175.9,513.8 1173.6,512.9 1170.8,512.4 1167.9,512.3 1165.1,512.7 1162.6,513.5 1160.8,514.6 1159.7,516.0 1159.6,517.5 1160.3,518.9 1161.9,520.1 1164.2,521.0 1167.0,521.5 1169.9,521.6 1172.7,521.2 1175.2,520.4 1177.0,519.3" fill="#154a1f"/>
<polygon points="1229.9,532.6 1231.1,531.2 1231.5,529.7 1231.1,528.1 1229.9,526.7 1228.0,525.5 1225.6,524.6 1222.8,524.0 1219.7,523.8 1216.7,524.0 1213.9,524.6 1211.4,525.6 1209.6,526.8 1208.4,528.2 1208.0,529.7 1208.4,531.2 1209.6,532.6 1211.5,533.8 1213.9,534.8 1216.7,535.3 1219.8,535.5 1222.8,535.3 1225.6,534.7 1228.1,533.8 1229.9,532.6" fill="#22662d" stroke="#0b2e12" stroke-width="1.3"/><polygon points="1227.9,533.8 1228.9,532.4 1229.1,531.0 1228.3,529.6 1226.7,528.3 1224.4,527.4 1221.7,526.9 1218.8,526.8 1215.9,527.2 1213.5,528.0 1211.6,529.2 1210.6,530.5 1210.4,532.0 1211.2,533.4 1212.8,534.6 1215.1,535.6 1217.8,536.1 1220.7,536.1 1223.6,535.8 1226.0,534.9 1227.9,533.8" fill="#154a1f"/>
<polygon points="1280.8,547.1 1281.9,545.7 1282.3,544.2 1281.9,542.7 1280.8,541.3 1278.9,540.0 1276.5,539.1 1273.6,538.5 1270.6,538.3 1267.6,538.6 1264.7,539.1 1262.3,540.1 1260.4,541.3 1259.3,542.7 1258.9,544.2 1259.3,545.8 1260.4,547.2 1262.3,548.4 1264.7,549.3 1267.6,549.9 1270.6,550.1 1273.6,549.9 1276.5,549.3 1278.9,548.3 1280.8,547.1" fill="#22662d" stroke="#0b2e12" stroke-width="1.3"/><polygon points="1278.7,548.3 1279.8,547.0 1279.9,545.5 1279.2,544.1 1277.6,542.9 1275.3,541.9 1272.5,541.4 1269.6,541.3 1266.8,541.7 1264.3,542.5 1262.5,543.7 1261.4,545.1 1261.3,546.5 1262.0,547.9 1263.6,549.2 1265.9,550.1 1268.7,550.6 1271.6,550.7 1274.4,550.3 1276.9,549.5 1278.7,548.3" fill="#154a1f"/>
<polygon points="1331.6,561.6 1332.8,560.2 1333.2,558.7 1332.8,557.2 1331.6,555.8 1329.7,554.6 1327.3,553.6 1324.5,553.1 1321.4,552.9 1318.4,553.1 1315.6,553.7 1313.1,554.6 1311.3,555.8 1310.1,557.3 1309.7,558.8 1310.1,560.3 1311.3,561.7 1313.2,562.9 1315.6,563.8 1318.4,564.4 1321.5,564.6 1324.5,564.4 1327.3,563.8 1329.8,562.9 1331.6,561.6" fill="#22662d" stroke="#0b2e12" stroke-width="1.3"/><polygon points="1329.6,562.9 1330.6,561.5 1330.8,560.0 1330.0,558.6 1328.4,557.4 1326.1,556.5 1323.4,555.9 1320.5,555.9 1317.6,556.3 1315.2,557.1 1313.3,558.2 1312.3,559.6 1312.1,561.1 1312.9,562.5 1314.5,563.7 1316.8,564.6 1319.5,565.1 1322.4,565.2 1325.3,564.8 1327.7,564.0 1329.6,562.9" fill="#154a1f"/>
<polygon points="1382.5,576.2 1383.6,574.8 1384.0,573.2 1383.6,571.7 1382.5,570.3 1380.6,569.1 1378.2,568.2 1375.3,567.6 1372.3,567.4 1369.3,567.6 1366.4,568.2 1364.0,569.1 1362.1,570.4 1361.0,571.8 1360.6,573.3 1361.0,574.8 1362.1,576.2 1364.0,577.4 1366.4,578.4 1369.3,578.9 1372.3,579.1 1375.3,578.9 1378.2,578.3 1380.6,577.4 1382.5,576.2" fill="#22662d" stroke="#0b2e12" stroke-width="1.3"/><polygon points="1380.4,577.4 1381.5,576.0 1381.6,574.6 1380.9,573.1 1379.3,571.9 1377.0,571.0 1374.2,570.5 1371.3,570.4 1368.5,570.8 1366.0,571.6 1364.2,572.7 1363.1,574.1 1363.0,575.6 1363.7,577.0 1365.3,578.2 1367.6,579.1 1370.4,579.7 1373.3,579.7 1376.1,579.3 1378.6,578.5 1380.4,577.4" fill="#154a1f"/>
<polygon points="1433.3,590.7 1434.5,589.3 1434.9,587.8 1434.5,586.3 1433.3,584.8 1431.4,583.6 1429.0,582.7 1426.2,582.1 1423.1,581.9 1420.1,582.1 1417.3,582.7 1414.8,583.7 1413.0,584.9 1411.8,586.3 1411.4,587.8 1411.8,589.3 1413.0,590.8 1414.9,592.0 1417.3,592.9 1420.1,593.5 1423.2,593.7 1426.2,593.5 1429.0,592.9 1431.5,591.9 1433.3,590.7" fill="#22662d" stroke="#0b2e12" stroke-width="1.3"/><polygon points="1431.3,591.9 1432.3,590.6 1432.5,589.1 1431.7,587.7 1430.1,586.4 1427.8,585.5 1425.1,585.0 1422.2,584.9 1419.3,585.3 1416.9,586.1 1415.0,587.3 1414.0,588.6 1413.8,590.1 1414.6,591.5 1416.2,592.8 1418.5,593.7 1421.2,594.2 1424.1,594.3 1427.0,593.9 1429.4,593.1 1431.3,591.9" fill="#154a1f"/>
<polygon points="1484.2,605.2 1485.3,603.8 1485.7,602.3 1485.3,600.8 1484.2,599.4 1482.3,598.2 1479.9,597.2 1477.0,596.7 1474.0,596.5 1471.0,596.7 1468.1,597.3 1465.7,598.2 1463.8,599.4 1462.7,600.8 1462.3,602.4 1462.7,603.9 1463.8,605.3 1465.7,606.5 1468.1,607.4 1471.0,608.0 1474.0,608.2 1477.0,608.0 1479.9,607.4 1482.3,606.5 1484.2,605.2" fill="#22662d" stroke="#0b2e12" stroke-width="1.3"/><polygon points="1482.1,606.5 1483.2,605.1 1483.3,603.6 1482.6,602.2 1481.0,601.0 1478.7,600.1 1475.9,599.5 1473.0,599.5 1470.2,599.9 1467.7,600.7 1465.9,601.8 1464.8,603.2 1464.7,604.6 1465.4,606.1 1467.0,607.3 1469.3,608.2 1472.1,608.7 1475.0,608.8 1477.8,608.4 1480.3,607.6 1482.1,606.5" fill="#154a1f"/>
<polygon points="1535.0,619.8 1536.2,618.3 1536.6,616.8 1536.2,615.3 1535.0,613.9 1533.1,612.7 1530.7,611.8 1527.9,611.2 1524.8,611.0 1521.8,611.2 1519.0,611.8 1516.5,612.7 1514.7,614.0 1513.5,615.4 1513.1,616.9 1513.5,618.4 1514.7,619.8 1516.6,621.0 1519.0,622.0 1521.8,622.5 1524.9,622.7 1527.9,622.5 1530.7,621.9 1533.2,621.0 1535.0,619.8" fill="#22662d" stroke="#0b2e12" stroke-width="1.3"/><polygon points="1533.0,621.0 1534.0,619.6 1534.2,618.1 1533.4,616.7 1531.8,615.5 1529.5,614.6 1526.8,614.1 1523.9,614.0 1521.0,614.4 1518.6,615.2 1516.7,616.3 1515.7,617.7 1515.5,619.2 1516.3,620.6 1517.9,621.8 1520.2,622.7 1522.9,623.3 1525.8,623.3 1528.7,622.9 1531.1,622.1 1533.0,621.0" fill="#154a1f"/>
<polygon points="1585.9,634.3 1587.0,632.9 1587.4,631.4 1587.0,629.8 1585.9,628.4 1584.0,627.2 1581.6,626.3 1578.7,625.7 1575.7,625.5 1572.7,625.7 1569.8,626.3 1567.4,627.3 1565.5,628.5 1564.4,629.9 1564.0,631.4 1564.4,632.9 1565.5,634.3 1567.4,635.6 1569.8,636.5 1572.7,637.1 1575.7,637.3 1578.7,637.0 1581.6,636.5 1584.0,635.5 1585.9,634.3" fill="#22662d" stroke="#0b2e12" stroke-width="1.3"/><polygon points="1583.8,635.5 1584.9,634.1 1585.0,632.7 1584.3,631.3 1582.7,630.0 1580.4,629.1 1577.6,628.6 1574.7,628.5 1571.9,628.9 1569.4,629.7 1567.6,630.9 1566.5,632.2 1566.4,633.7 1567.1,635.1 1568.7,636.3 1571.0,637.3 1573.8,637.8 1576.7,637.9 1579.5,637.5 1582.0,636.7 1583.8,635.5" fill="#154a1f"/>
<polygon points="844.7,506.6 844.3,503.9 843.3,501.2 841.7,498.6 839.6,496.4 837.1,494.7 834.5,493.6 831.9,493.2 829.4,493.5 827.3,494.5 825.7,496.1 824.7,498.3 824.3,500.8 824.7,503.5 825.7,506.2 827.3,508.7 829.4,510.9 831.9,512.6 834.5,513.7 837.1,514.1 839.6,513.8 841.7,512.8 843.3,511.2 844.3,509.1 844.7,506.6" fill="#3d9c47" stroke="#0c2a10" stroke-width="1.2"/><polyline points="827.5,497.6 826.8,498.9 826.4,500.2 826.4,501.8 826.6,503.4 827.1,505.0 827.9,506.5 829.0,508.0 830.2,509.3 831.6,510.3 833.1,511.2" fill="none" stroke="#8fd39a" stroke-width="1.2" stroke-linejoin="round" stroke-linecap="round" />
<polygon points="895.5,521.1 895.2,518.4 894.2,515.7 892.5,513.1 890.4,510.9 888.0,509.2 885.4,508.1 882.7,507.7 880.3,508.0 878.2,509.0 876.5,510.7 875.5,512.8 875.2,515.3 875.5,518.0 876.5,520.7 878.2,523.3 880.3,525.5 882.7,527.2 885.4,528.2 888.0,528.7 890.4,528.4 892.5,527.4 894.2,525.7 895.2,523.6 895.5,521.1" fill="#3d9c47" stroke="#0c2a10" stroke-width="1.2"/><polyline points="878.3,512.2 877.7,513.4 877.3,514.8 877.2,516.3 877.5,517.9 878.0,519.5 878.8,521.0 879.8,522.5 881.0,523.8 882.4,524.9 883.9,525.7" fill="none" stroke="#8fd39a" stroke-width="1.2" stroke-linejoin="round" stroke-linecap="round" />
<polygon points="946.4,535.6 946.0,532.9 945.0,530.2 943.4,527.7 941.3,525.5 938.8,523.8 936.2,522.7 933.6,522.3 931.1,522.6 929.0,523.6 927.4,525.2 926.4,527.3 926.0,529.8 926.4,532.5 927.4,535.2 929.0,537.8 931.1,540.0 933.6,541.7 936.2,542.8 938.8,543.2 941.3,542.9 943.4,541.9 945.0,540.3 946.0,538.1 946.4,535.6" fill="#3d9c47" stroke="#0c2a10" stroke-width="1.2"/><polyline points="929.2,526.7 928.5,527.9 928.1,529.3 928.1,530.8 928.3,532.4 928.8,534.0 929.6,535.6 930.7,537.0 931.9,538.3 933.3,539.4 934.8,540.2" fill="none" stroke="#8fd39a" stroke-width="1.2" stroke-linejoin="round" stroke-linecap="round" />
<polygon points="997.2,550.2 996.9,547.5 995.9,544.8 994.2,542.2 992.1,540.0 989.7,538.3 987.0,537.2 984.4,536.8 982.0,537.1 979.9,538.1 978.2,539.7 977.2,541.9 976.9,544.4 977.2,547.1 978.2,549.8 979.9,552.3 982.0,554.5 984.4,556.2 987.0,557.3 989.7,557.7 992.1,557.4 994.2,556.4 995.9,554.8 996.9,552.7 997.2,550.2" fill="#3d9c47" stroke="#0c2a10" stroke-width="1.2"/><polyline points="980.0,541.2 979.4,542.4 979.0,543.8 978.9,545.4 979.2,546.9 979.7,548.6 980.5,550.1 981.5,551.6 982.7,552.8 984.1,553.9 985.6,554.8" fill="none" stroke="#8fd39a" stroke-width="1.2" stroke-linejoin="round" stroke-linecap="round" />
<polygon points="1048.1,564.7 1047.7,562.0 1046.7,559.3 1045.1,556.7 1043.0,554.5 1040.5,552.8 1037.9,551.7 1035.3,551.3 1032.8,551.6 1030.7,552.6 1029.1,554.2 1028.1,556.4 1027.7,558.9 1028.1,561.6 1029.1,564.3 1030.7,566.8 1032.8,569.0 1035.3,570.7 1037.9,571.8 1040.5,572.2 1043.0,571.9 1045.1,571.0 1046.7,569.3 1047.7,567.2 1048.1,564.7" fill="#3d9c47" stroke="#0c2a10" stroke-width="1.2"/><polyline points="1030.9,555.8 1030.2,557.0 1029.8,558.4 1029.8,559.9 1030.0,561.5 1030.5,563.1 1031.3,564.6 1032.4,566.1 1033.6,567.4 1035.0,568.5 1036.5,569.3" fill="none" stroke="#8fd39a" stroke-width="1.2" stroke-linejoin="round" stroke-linecap="round" />
<polygon points="1098.9,579.2 1098.6,576.5 1097.6,573.8 1095.9,571.3 1093.8,569.1 1091.4,567.4 1088.8,566.3 1086.1,565.9 1083.7,566.2 1081.6,567.2 1079.9,568.8 1078.9,570.9 1078.6,573.4 1078.9,576.1 1079.9,578.8 1081.6,581.4 1083.7,583.6 1086.1,585.3 1088.8,586.4 1091.4,586.8 1093.8,586.5 1095.9,585.5 1097.6,583.9 1098.6,581.7 1098.9,579.2" fill="#3d9c47" stroke="#0c2a10" stroke-width="1.2"/><polyline points="1081.7,570.3 1081.1,571.5 1080.7,572.9 1080.6,574.4 1080.9,576.0 1081.4,577.6 1082.2,579.2 1083.2,580.6 1084.4,581.9 1085.8,583.0 1087.3,583.8" fill="none" stroke="#8fd39a" stroke-width="1.2" stroke-linejoin="round" stroke-linecap="round" />
<polygon points="1149.8,593.8 1149.4,591.1 1148.4,588.3 1146.8,585.8 1144.7,583.6 1142.2,581.9 1139.6,580.8 1137.0,580.4 1134.5,580.7 1132.4,581.7 1130.8,583.3 1129.8,585.4 1129.4,587.9 1129.8,590.6 1130.8,593.4 1132.4,595.9 1134.5,598.1 1137.0,599.8 1139.6,600.9 1142.2,601.3 1144.7,601.0 1146.8,600.0 1148.4,598.4 1149.4,596.3 1149.8,593.8" fill="#3d9c47" stroke="#0c2a10" stroke-width="1.2"/><polyline points="1132.6,584.8 1131.9,586.0 1131.5,587.4 1131.5,588.9 1131.7,590.5 1132.2,592.1 1133.0,593.7 1134.1,595.1 1135.3,596.4 1136.7,597.5 1138.2,598.4" fill="none" stroke="#8fd39a" stroke-width="1.2" stroke-linejoin="round" stroke-linecap="round" />
<polygon points="1200.6,608.3 1200.3,605.6 1199.3,602.9 1197.6,600.3 1195.5,598.1 1193.1,596.4 1190.4,595.3 1187.8,594.9 1185.4,595.2 1183.3,596.2 1181.6,597.8 1180.6,600.0 1180.3,602.5 1180.6,605.2 1181.6,607.9 1183.3,610.4 1185.4,612.6 1187.8,614.3 1190.4,615.4 1193.1,615.8 1195.5,615.5 1197.6,614.5 1199.3,612.9 1200.3,610.8 1200.6,608.3" fill="#3d9c47" stroke="#0c2a10" stroke-width="1.2"/><polyline points="1183.4,599.3 1182.8,600.6 1182.4,602.0 1182.3,603.5 1182.6,605.1 1183.1,606.7 1183.9,608.2 1184.9,609.7 1186.1,611.0 1187.5,612.1 1189.0,612.9" fill="none" stroke="#8fd39a" stroke-width="1.2" stroke-linejoin="round" stroke-linecap="round" />
<polygon points="1251.5,622.8 1251.1,620.1 1250.1,617.4 1248.5,614.9 1246.4,612.7 1243.9,611.0 1241.3,609.9 1238.7,609.5 1236.2,609.8 1234.1,610.7 1232.5,612.4 1231.5,614.5 1231.1,617.0 1231.5,619.7 1232.5,622.4 1234.1,625.0 1236.2,627.2 1238.7,628.9 1241.3,630.0 1243.9,630.4 1246.4,630.1 1248.5,629.1 1250.1,627.5 1251.1,625.3 1251.5,622.8" fill="#3d9c47" stroke="#0c2a10" stroke-width="1.2"/><polyline points="1234.3,613.9 1233.6,615.1 1233.2,616.5 1233.2,618.0 1233.4,619.6 1233.9,621.2 1234.7,622.8 1235.8,624.2 1237.0,625.5 1238.4,626.6 1239.9,627.4" fill="none" stroke="#8fd39a" stroke-width="1.2" stroke-linejoin="round" stroke-linecap="round" />
<polygon points="1302.3,637.3 1302.0,634.6 1301.0,631.9 1299.3,629.4 1297.2,627.2 1294.8,625.5 1292.1,624.4 1289.5,624.0 1287.1,624.3 1285.0,625.3 1283.3,626.9 1282.3,629.0 1282.0,631.5 1282.3,634.2 1283.3,636.9 1285.0,639.5 1287.1,641.7 1289.5,643.4 1292.1,644.5 1294.8,644.9 1297.2,644.6 1299.3,643.6 1301.0,642.0 1302.0,639.8 1302.3,637.3" fill="#3d9c47" stroke="#0c2a10" stroke-width="1.2"/><polyline points="1285.1,628.4 1284.5,629.6 1284.1,631.0 1284.0,632.5 1284.3,634.1 1284.8,635.7 1285.6,637.3 1286.6,638.7 1287.8,640.0 1289.2,641.1 1290.7,642.0" fill="none" stroke="#8fd39a" stroke-width="1.2" stroke-linejoin="round" stroke-linecap="round" />
<polygon points="1353.2,651.9 1352.8,649.2 1351.8,646.5 1350.2,643.9 1348.1,641.7 1345.6,640.0 1343.0,638.9 1340.4,638.5 1337.9,638.8 1335.8,639.8 1334.2,641.4 1333.2,643.6 1332.8,646.1 1333.2,648.8 1334.2,651.5 1335.8,654.0 1337.9,656.2 1340.4,657.9 1343.0,659.0 1345.6,659.4 1348.1,659.1 1350.2,658.1 1351.8,656.5 1352.8,654.4 1353.2,651.9" fill="#3d9c47" stroke="#0c2a10" stroke-width="1.2"/><polyline points="1336.0,642.9 1335.3,644.2 1334.9,645.5 1334.9,647.1 1335.1,648.7 1335.6,650.3 1336.4,651.8 1337.5,653.3 1338.7,654.6 1340.1,655.6 1341.6,656.5" fill="none" stroke="#8fd39a" stroke-width="1.2" stroke-linejoin="round" stroke-linecap="round" />
<polygon points="1404.0,666.4 1403.7,663.7 1402.7,661.0 1401.0,658.4 1398.9,656.2 1396.5,654.5 1393.8,653.4 1391.2,653.0 1388.8,653.3 1386.7,654.3 1385.0,656.0 1384.0,658.1 1383.7,660.6 1384.0,663.3 1385.0,666.0 1386.7,668.6 1388.8,670.8 1391.2,672.5 1393.8,673.5 1396.5,674.0 1398.9,673.7 1401.0,672.7 1402.7,671.0 1403.7,668.9 1404.0,666.4" fill="#3d9c47" stroke="#0c2a10" stroke-width="1.2"/><polyline points="1386.8,657.5 1386.2,658.7 1385.8,660.1 1385.7,661.6 1386.0,663.2 1386.5,664.8 1387.3,666.3 1388.3,667.8 1389.5,669.1 1390.9,670.2 1392.4,671.0" fill="none" stroke="#8fd39a" stroke-width="1.2" stroke-linejoin="round" stroke-linecap="round" />
<polygon points="1454.9,680.9 1454.5,678.2 1453.5,675.5 1451.9,673.0 1449.8,670.8 1447.3,669.1 1444.7,668.0 1442.1,667.6 1439.6,667.9 1437.5,668.9 1435.9,670.5 1434.9,672.6 1434.5,675.1 1434.9,677.8 1435.9,680.5 1437.5,683.1 1439.6,685.3 1442.1,687.0 1444.7,688.1 1447.3,688.5 1449.8,688.2 1451.9,687.2 1453.5,685.6 1454.5,683.4 1454.9,680.9" fill="#3d9c47" stroke="#0c2a10" stroke-width="1.2"/><polyline points="1437.7,672.0 1437.0,673.2 1436.6,674.6 1436.6,676.1 1436.8,677.7 1437.3,679.3 1438.1,680.9 1439.2,682.3 1440.4,683.6 1441.8,684.7 1443.3,685.5" fill="none" stroke="#8fd39a" stroke-width="1.2" stroke-linejoin="round" stroke-linecap="round" />
<polygon points="1505.7,695.5 1505.4,692.8 1504.4,690.1 1502.7,687.5 1500.6,685.3 1498.2,683.6 1495.5,682.5 1492.9,682.1 1490.5,682.4 1488.4,683.4 1486.7,685.0 1485.7,687.2 1485.4,689.7 1485.7,692.4 1486.7,695.1 1488.4,697.6 1490.5,699.8 1492.9,701.5 1495.5,702.6 1498.2,703.0 1500.6,702.7 1502.7,701.7 1504.4,700.1 1505.4,698.0 1505.7,695.5" fill="#3d9c47" stroke="#0c2a10" stroke-width="1.2"/><polyline points="1488.5,686.5 1487.9,687.7 1487.5,689.1 1487.4,690.7 1487.7,692.2 1488.2,693.9 1489.0,695.4 1490.0,696.9 1491.2,698.1 1492.6,699.2 1494.1,700.1" fill="none" stroke="#8fd39a" stroke-width="1.2" stroke-linejoin="round" stroke-linecap="round" />
<polygon points="1556.6,710.0 1556.2,707.3 1555.2,704.6 1553.6,702.0 1551.5,699.8 1549.0,698.1 1546.4,697.0 1543.8,696.6 1541.3,696.9 1539.2,697.9 1537.6,699.5 1536.6,701.7 1536.2,704.2 1536.6,706.9 1537.6,709.6 1539.2,712.1 1541.3,714.3 1543.8,716.0 1546.4,717.1 1549.0,717.5 1551.5,717.2 1553.6,716.3 1555.2,714.6 1556.2,712.5 1556.6,710.0" fill="#3d9c47" stroke="#0c2a10" stroke-width="1.2"/><polyline points="1539.4,701.1 1538.7,702.3 1538.3,703.7 1538.3,705.2 1538.5,706.8 1539.0,708.4 1539.8,709.9 1540.9,711.4 1542.1,712.7 1543.5,713.8 1545.0,714.6" fill="none" stroke="#8fd39a" stroke-width="1.2" stroke-linejoin="round" stroke-linecap="round" />
<ellipse cx="893.1" cy="404.9" rx="5" ry="2.2" fill="#fff"/>
<ellipse cx="863.8" cy="430.6" rx="7" ry="2.4" fill="#cdbf98"/>
<polygon points="1593.7,1128.7 2296.9,517.9 2296.9,618.4 1593.7,1229.2" fill="#3f9946" stroke="#0c2a10" stroke-width="1.3" stroke-linejoin="round" />
<polygon points="1492.0,1099.6 1593.7,1128.7 2296.9,517.9 2195.2,488.8" fill="#44a048" stroke="#0c2a10" stroke-width="1.3" stroke-linejoin="round" />
<polygon points="1492.0,1099.6 1593.7,1128.7 1593.7,1229.2 1492.0,1200.1" fill="#2c8535" stroke="#0c2a10" stroke-width="1.3" stroke-linejoin="round" />
<polygon points="1498.6,1108.0 1587.1,1133.3 1587.1,1220.8 1498.6,1195.5" fill="#50b255" stroke="#0c2a10" stroke-width="1.1" stroke-linejoin="round" />
<polygon points="1498.6,1108.0 1587.1,1133.3 1498.6,1195.5" fill="#47a54d" stroke="none" stroke-width="0" stroke-linejoin="round" />
<polyline points="1587.1,1133.3 1498.6,1195.5" fill="none" stroke="#0c2a10" stroke-width="1" stroke-linejoin="round" stroke-linecap="round" />
<ellipse cx="1530" cy="1123" rx="3.5" ry="8" fill="#fff" stroke="#0c2a10" stroke-width="1" transform="rotate(18 1530 1123)"/>
<ellipse cx="1575" cy="1181" rx="10" ry="5" fill="#2f8a37" stroke="#0c2a10" stroke-width="1"/><ellipse cx="1575" cy="1183" rx="7" ry="3" fill="#fff"/>
<polygon points="1582.4,1091.6 1583.5,1090.2 1583.9,1088.7 1583.5,1087.2 1582.3,1085.7 1580.5,1084.5 1578.0,1083.6 1575.2,1083.0 1572.2,1082.8 1569.1,1083.0 1566.3,1083.6 1563.9,1084.6 1562.0,1085.8 1560.8,1087.2 1560.4,1088.7 1560.8,1090.2 1562.0,1091.7 1563.9,1092.9 1566.3,1093.8 1569.2,1094.4 1572.2,1094.6 1575.2,1094.4 1578.1,1093.8 1580.5,1092.8 1582.4,1091.6" fill="#22662d" stroke="#0b2e12" stroke-width="1.3"/><polygon points="1580.3,1092.8 1581.4,1091.5 1581.5,1090.0 1580.8,1088.6 1579.2,1087.3 1576.9,1086.4 1574.1,1085.9 1571.2,1085.8 1568.4,1086.2 1565.9,1087.0 1564.0,1088.2 1563.0,1089.6 1562.8,1091.0 1563.6,1092.4 1565.2,1093.7 1567.5,1094.6 1570.2,1095.1 1573.2,1095.2 1576.0,1094.8 1578.5,1094.0 1580.3,1092.8" fill="#154a1f"/>
<polygon points="1628.9,1148.4 1628.7,1146.0 1628.1,1144.1 1627.2,1142.8 1626.0,1142.2 1624.6,1142.5 1623.0,1143.4 1621.5,1145.1 1620.1,1147.3 1618.9,1150.0 1618.0,1152.9 1617.4,1155.8 1617.2,1158.6 1617.4,1161.0 1618.0,1162.9 1618.9,1164.2 1620.1,1164.7 1621.5,1164.5 1623.0,1163.5 1624.6,1161.9 1626.0,1159.6 1627.2,1157.0 1628.1,1154.1 1628.7,1151.2 1628.9,1148.4" fill="#236e2e" stroke="#0c2a10" stroke-width="1.1"/>
<polygon points="1611.7,1066.2 1612.8,1064.7 1613.2,1063.2 1612.8,1061.7 1611.6,1060.3 1609.8,1059.1 1607.3,1058.2 1604.5,1057.6 1601.5,1057.4 1598.4,1057.6 1595.6,1058.2 1593.2,1059.1 1591.3,1060.3 1590.1,1061.8 1589.7,1063.3 1590.1,1064.8 1591.3,1066.2 1593.2,1067.4 1595.6,1068.3 1598.5,1068.9 1601.5,1069.1 1604.5,1068.9 1607.4,1068.3 1609.8,1067.4 1611.7,1066.2" fill="#22662d" stroke="#0b2e12" stroke-width="1.3"/><polygon points="1609.6,1067.4 1610.7,1066.0 1610.8,1064.5 1610.1,1063.1 1608.5,1061.9 1606.2,1061.0 1603.4,1060.5 1600.5,1060.4 1597.7,1060.8 1595.2,1061.6 1593.3,1062.7 1592.3,1064.1 1592.1,1065.6 1592.9,1067.0 1594.5,1068.2 1596.8,1069.1 1599.5,1069.6 1602.5,1069.7 1605.3,1069.3 1607.8,1068.5 1609.6,1067.4" fill="#154a1f"/>
<polygon points="1658.2,1122.9 1658.0,1120.5 1657.4,1118.6 1656.5,1117.3 1655.3,1116.8 1653.9,1117.0 1652.3,1118.0 1650.8,1119.6 1649.4,1121.9 1648.2,1124.5 1647.3,1127.4 1646.7,1130.3 1646.5,1133.1 1646.7,1135.6 1647.3,1137.5 1648.2,1138.7 1649.4,1139.3 1650.8,1139.1 1652.3,1138.1 1653.9,1136.4 1655.3,1134.2 1656.5,1131.5 1657.4,1128.7 1658.0,1125.7 1658.2,1122.9" fill="#236e2e" stroke="#0c2a10" stroke-width="1.1"/>
<polygon points="1641.0,1040.7 1642.1,1039.3 1642.5,1037.8 1642.1,1036.3 1640.9,1034.8 1639.1,1033.6 1636.6,1032.7 1633.8,1032.1 1630.8,1031.9 1627.7,1032.1 1624.9,1032.7 1622.5,1033.7 1620.6,1034.9 1619.4,1036.3 1619.0,1037.8 1619.4,1039.3 1620.6,1040.8 1622.5,1042.0 1624.9,1042.9 1627.8,1043.5 1630.8,1043.7 1633.8,1043.5 1636.7,1042.9 1639.1,1041.9 1641.0,1040.7" fill="#22662d" stroke="#0b2e12" stroke-width="1.3"/><polygon points="1638.9,1041.9 1640.0,1040.6 1640.1,1039.1 1639.4,1037.7 1637.8,1036.4 1635.5,1035.5 1632.7,1035.0 1629.8,1034.9 1627.0,1035.3 1624.5,1036.1 1622.6,1037.3 1621.6,1038.7 1621.4,1040.1 1622.2,1041.5 1623.8,1042.8 1626.1,1043.7 1628.8,1044.2 1631.8,1044.3 1634.6,1043.9 1637.1,1043.1 1638.9,1041.9" fill="#154a1f"/>
<polygon points="1687.5,1097.5 1687.3,1095.1 1686.7,1093.2 1685.8,1091.9 1684.6,1091.3 1683.2,1091.6 1681.6,1092.5 1680.1,1094.2 1678.7,1096.4 1677.5,1099.1 1676.6,1102.0 1676.0,1104.9 1675.8,1107.7 1676.0,1110.1 1676.6,1112.0 1677.5,1113.3 1678.7,1113.8 1680.1,1113.6 1681.6,1112.6 1683.2,1111.0 1684.6,1108.7 1685.8,1106.1 1686.7,1103.2 1687.3,1100.3 1687.5,1097.5" fill="#236e2e" stroke="#0c2a10" stroke-width="1.1"/>
<polygon points="1670.3,1015.3 1671.4,1013.8 1671.8,1012.3 1671.4,1010.8 1670.2,1009.4 1668.4,1008.2 1665.9,1007.3 1663.1,1006.7 1660.1,1006.5 1657.0,1006.7 1654.2,1007.3 1651.8,1008.2 1649.9,1009.4 1648.7,1010.9 1648.3,1012.4 1648.7,1013.9 1649.9,1015.3 1651.8,1016.5 1654.2,1017.4 1657.1,1018.0 1660.1,1018.2 1663.1,1018.0 1666.0,1017.4 1668.4,1016.5 1670.3,1015.3" fill="#22662d" stroke="#0b2e12" stroke-width="1.3"/><polygon points="1668.2,1016.5 1669.3,1015.1 1669.4,1013.6 1668.7,1012.2 1667.1,1011.0 1664.8,1010.1 1662.0,1009.6 1659.1,1009.5 1656.3,1009.9 1653.8,1010.7 1651.9,1011.8 1650.9,1013.2 1650.7,1014.7 1651.5,1016.1 1653.1,1017.3 1655.4,1018.2 1658.1,1018.7 1661.1,1018.8 1663.9,1018.4 1666.4,1017.6 1668.2,1016.5" fill="#154a1f"/>
<polygon points="1716.8,1072.0 1716.6,1069.6 1716.0,1067.7 1715.1,1066.4 1713.9,1065.9 1712.5,1066.1 1710.9,1067.1 1709.4,1068.7 1708.0,1071.0 1706.8,1073.6 1705.9,1076.5 1705.3,1079.4 1705.1,1082.2 1705.3,1084.7 1705.9,1086.6 1706.8,1087.8 1708.0,1088.4 1709.4,1088.2 1710.9,1087.2 1712.5,1085.5 1713.9,1083.3 1715.1,1080.6 1716.0,1077.8 1716.6,1074.8 1716.8,1072.0" fill="#236e2e" stroke="#0c2a10" stroke-width="1.1"/>
<polygon points="1699.6,989.8 1700.7,988.4 1701.1,986.9 1700.7,985.4 1699.5,983.9 1697.7,982.7 1695.2,981.8 1692.4,981.2 1689.4,981.0 1686.3,981.2 1683.5,981.8 1681.1,982.8 1679.2,984.0 1678.0,985.4 1677.6,986.9 1678.0,988.4 1679.2,989.9 1681.1,991.1 1683.5,992.0 1686.4,992.6 1689.4,992.8 1692.4,992.6 1695.3,992.0 1697.7,991.0 1699.6,989.8" fill="#22662d" stroke="#0b2e12" stroke-width="1.3"/><polygon points="1697.5,991.0 1698.6,989.7 1698.7,988.2 1698.0,986.8 1696.4,985.5 1694.1,984.6 1691.3,984.1 1688.4,984.0 1685.6,984.4 1683.1,985.2 1681.2,986.4 1680.2,987.8 1680.0,989.2 1680.8,990.6 1682.4,991.9 1684.7,992.8 1687.4,993.3 1690.4,993.4 1693.2,993.0 1695.7,992.2 1697.5,991.0" fill="#154a1f"/>
<polygon points="1746.1,1046.6 1745.9,1044.2 1745.3,1042.3 1744.4,1041.0 1743.2,1040.4 1741.8,1040.7 1740.2,1041.6 1738.7,1043.3 1737.3,1045.5 1736.1,1048.2 1735.2,1051.1 1734.6,1054.0 1734.4,1056.8 1734.6,1059.2 1735.2,1061.1 1736.1,1062.4 1737.3,1062.9 1738.7,1062.7 1740.2,1061.7 1741.8,1060.1 1743.2,1057.8 1744.4,1055.2 1745.3,1052.3 1745.9,1049.4 1746.1,1046.6" fill="#236e2e" stroke="#0c2a10" stroke-width="1.1"/>
<polygon points="1728.9,964.4 1730.0,962.9 1730.4,961.4 1730.0,959.9 1728.8,958.5 1727.0,957.3 1724.5,956.4 1721.7,955.8 1718.7,955.6 1715.6,955.8 1712.8,956.4 1710.4,957.3 1708.5,958.5 1707.3,960.0 1706.9,961.5 1707.3,963.0 1708.5,964.4 1710.4,965.6 1712.8,966.5 1715.7,967.1 1718.7,967.3 1721.7,967.1 1724.6,966.5 1727.0,965.6 1728.9,964.4" fill="#22662d" stroke="#0b2e12" stroke-width="1.3"/><polygon points="1726.8,965.6 1727.9,964.2 1728.0,962.7 1727.3,961.3 1725.7,960.1 1723.4,959.2 1720.6,958.7 1717.7,958.6 1714.9,959.0 1712.4,959.8 1710.5,960.9 1709.5,962.3 1709.3,963.8 1710.1,965.2 1711.7,966.4 1714.0,967.3 1716.7,967.8 1719.7,967.9 1722.5,967.5 1725.0,966.7 1726.8,965.6" fill="#154a1f"/>
<polygon points="1775.4,1021.1 1775.2,1018.7 1774.6,1016.8 1773.7,1015.5 1772.5,1015.0 1771.1,1015.2 1769.5,1016.2 1768.0,1017.8 1766.6,1020.1 1765.4,1022.7 1764.5,1025.6 1763.9,1028.5 1763.7,1031.3 1763.9,1033.8 1764.5,1035.7 1765.4,1036.9 1766.6,1037.5 1768.0,1037.3 1769.5,1036.3 1771.1,1034.6 1772.5,1032.4 1773.7,1029.7 1774.6,1026.9 1775.2,1023.9 1775.4,1021.1" fill="#236e2e" stroke="#0c2a10" stroke-width="1.1"/>
<polygon points="1758.2,938.9 1759.3,937.5 1759.7,936.0 1759.3,934.5 1758.1,933.0 1756.3,931.8 1753.8,930.9 1751.0,930.3 1748.0,930.1 1744.9,930.3 1742.1,930.9 1739.7,931.9 1737.8,933.1 1736.6,934.5 1736.2,936.0 1736.6,937.5 1737.8,939.0 1739.7,940.2 1742.1,941.1 1745.0,941.7 1748.0,941.9 1751.0,941.7 1753.9,941.1 1756.3,940.1 1758.2,938.9" fill="#22662d" stroke="#0b2e12" stroke-width="1.3"/><polygon points="1756.1,940.1 1757.2,938.8 1757.3,937.3 1756.6,935.9 1755.0,934.6 1752.7,933.7 1749.9,933.2 1747.0,933.1 1744.2,933.5 1741.7,934.3 1739.8,935.5 1738.8,936.9 1738.6,938.3 1739.4,939.7 1741.0,941.0 1743.3,941.9 1746.0,942.4 1749.0,942.5 1751.8,942.1 1754.3,941.3 1756.1,940.1" fill="#154a1f"/>
<polygon points="1804.7,995.7 1804.5,993.3 1803.9,991.4 1803.0,990.1 1801.8,989.5 1800.4,989.8 1798.8,990.7 1797.3,992.4 1795.9,994.6 1794.7,997.3 1793.8,1000.2 1793.2,1003.1 1793.0,1005.9 1793.2,1008.3 1793.8,1010.2 1794.7,1011.5 1795.9,1012.0 1797.3,1011.8 1798.8,1010.8 1800.4,1009.2 1801.8,1006.9 1803.0,1004.3 1803.9,1001.4 1804.5,998.5 1804.7,995.7" fill="#236e2e" stroke="#0c2a10" stroke-width="1.1"/>
<polygon points="1787.5,913.5 1788.6,912.0 1789.0,910.5 1788.6,909.0 1787.4,907.6 1785.6,906.4 1783.1,905.5 1780.3,904.9 1777.3,904.7 1774.2,904.9 1771.4,905.5 1769.0,906.4 1767.1,907.6 1765.9,909.1 1765.5,910.6 1765.9,912.1 1767.1,913.5 1769.0,914.7 1771.4,915.6 1774.3,916.2 1777.3,916.4 1780.3,916.2 1783.2,915.6 1785.6,914.7 1787.5,913.5" fill="#22662d" stroke="#0b2e12" stroke-width="1.3"/><polygon points="1785.4,914.7 1786.5,913.3 1786.6,911.8 1785.9,910.4 1784.3,909.2 1782.0,908.3 1779.2,907.8 1776.3,907.7 1773.5,908.1 1771.0,908.9 1769.1,910.0 1768.1,911.4 1767.9,912.9 1768.7,914.3 1770.3,915.5 1772.6,916.4 1775.3,916.9 1778.3,917.0 1781.1,916.6 1783.6,915.8 1785.4,914.7" fill="#154a1f"/>
<polygon points="1834.0,970.2 1833.8,967.8 1833.2,965.9 1832.3,964.6 1831.1,964.1 1829.7,964.3 1828.1,965.3 1826.6,966.9 1825.2,969.2 1824.0,971.8 1823.1,974.7 1822.5,977.6 1822.3,980.4 1822.5,982.9 1823.1,984.8 1824.0,986.0 1825.2,986.6 1826.6,986.4 1828.1,985.4 1829.7,983.7 1831.1,981.5 1832.3,978.8 1833.2,976.0 1833.8,973.0 1834.0,970.2" fill="#236e2e" stroke="#0c2a10" stroke-width="1.1"/>
<polygon points="1816.8,888.0 1817.9,886.6 1818.3,885.1 1817.9,883.6 1816.7,882.1 1814.9,880.9 1812.4,880.0 1809.6,879.4 1806.6,879.2 1803.5,879.4 1800.7,880.0 1798.3,881.0 1796.4,882.2 1795.2,883.6 1794.8,885.1 1795.2,886.6 1796.4,888.1 1798.3,889.3 1800.7,890.2 1803.6,890.8 1806.6,891.0 1809.6,890.8 1812.5,890.2 1814.9,889.2 1816.8,888.0" fill="#22662d" stroke="#0b2e12" stroke-width="1.3"/><polygon points="1814.7,889.2 1815.8,887.9 1815.9,886.4 1815.2,885.0 1813.6,883.7 1811.3,882.8 1808.5,882.3 1805.6,882.2 1802.8,882.6 1800.3,883.4 1798.4,884.6 1797.4,886.0 1797.2,887.4 1798.0,888.8 1799.6,890.1 1801.9,891.0 1804.6,891.5 1807.6,891.6 1810.4,891.2 1812.9,890.4 1814.7,889.2" fill="#154a1f"/>
<polygon points="1863.3,944.8 1863.1,942.4 1862.5,940.5 1861.6,939.2 1860.4,938.6 1859.0,938.9 1857.4,939.8 1855.9,941.5 1854.5,943.7 1853.3,946.4 1852.4,949.3 1851.8,952.2 1851.6,955.0 1851.8,957.4 1852.4,959.3 1853.3,960.6 1854.5,961.1 1855.9,960.9 1857.4,959.9 1859.0,958.3 1860.4,956.0 1861.6,953.4 1862.5,950.5 1863.1,947.6 1863.3,944.8" fill="#236e2e" stroke="#0c2a10" stroke-width="1.1"/>
<polygon points="1846.1,862.6 1847.2,861.1 1847.6,859.6 1847.2,858.1 1846.0,856.7 1844.2,855.5 1841.7,854.6 1838.9,854.0 1835.9,853.8 1832.8,854.0 1830.0,854.6 1827.6,855.5 1825.7,856.7 1824.5,858.2 1824.1,859.7 1824.5,861.2 1825.7,862.6 1827.6,863.8 1830.0,864.7 1832.9,865.3 1835.9,865.5 1838.9,865.3 1841.8,864.7 1844.2,863.8 1846.1,862.6" fill="#22662d" stroke="#0b2e12" stroke-width="1.3"/><polygon points="1844.0,863.8 1845.1,862.4 1845.2,860.9 1844.5,859.5 1842.9,858.3 1840.6,857.4 1837.8,856.9 1834.9,856.8 1832.1,857.2 1829.6,858.0 1827.7,859.1 1826.7,860.5 1826.5,862.0 1827.3,863.4 1828.9,864.6 1831.2,865.5 1833.9,866.0 1836.9,866.1 1839.7,865.7 1842.2,864.9 1844.0,863.8" fill="#154a1f"/>
<polygon points="1892.6,919.3 1892.4,916.9 1891.8,915.0 1890.9,913.7 1889.7,913.2 1888.3,913.4 1886.7,914.4 1885.2,916.0 1883.8,918.3 1882.6,920.9 1881.7,923.8 1881.1,926.7 1880.9,929.5 1881.1,932.0 1881.7,933.9 1882.6,935.1 1883.8,935.7 1885.2,935.5 1886.7,934.5 1888.3,932.8 1889.7,930.6 1890.9,927.9 1891.8,925.1 1892.4,922.1 1892.6,919.3" fill="#236e2e" stroke="#0c2a10" stroke-width="1.1"/>
<polygon points="1875.4,837.1 1876.5,835.7 1876.9,834.2 1876.5,832.7 1875.3,831.2 1873.5,830.0 1871.0,829.1 1868.2,828.5 1865.2,828.3 1862.1,828.5 1859.3,829.1 1856.9,830.1 1855.0,831.3 1853.8,832.7 1853.4,834.2 1853.8,835.7 1855.0,837.2 1856.9,838.4 1859.3,839.3 1862.2,839.9 1865.2,840.1 1868.2,839.9 1871.1,839.3 1873.5,838.3 1875.4,837.1" fill="#22662d" stroke="#0b2e12" stroke-width="1.3"/><polygon points="1873.3,838.3 1874.4,837.0 1874.5,835.5 1873.8,834.1 1872.2,832.8 1869.9,831.9 1867.1,831.4 1864.2,831.3 1861.4,831.7 1858.9,832.5 1857.0,833.7 1856.0,835.1 1855.8,836.5 1856.6,837.9 1858.2,839.2 1860.5,840.1 1863.2,840.6 1866.2,840.7 1869.0,840.3 1871.5,839.5 1873.3,838.3" fill="#154a1f"/>
<polygon points="1921.9,893.9 1921.7,891.5 1921.1,889.6 1920.2,888.3 1919.0,887.7 1917.6,888.0 1916.0,888.9 1914.5,890.6 1913.1,892.8 1911.9,895.5 1911.0,898.4 1910.4,901.3 1910.2,904.1 1910.4,906.5 1911.0,908.4 1911.9,909.7 1913.1,910.2 1914.5,910.0 1916.0,909.0 1917.6,907.4 1919.0,905.1 1920.2,902.5 1921.1,899.6 1921.7,896.7 1921.9,893.9" fill="#236e2e" stroke="#0c2a10" stroke-width="1.1"/>
<polygon points="1904.7,811.7 1905.8,810.2 1906.2,808.7 1905.8,807.2 1904.6,805.8 1902.8,804.6 1900.3,803.7 1897.5,803.1 1894.5,802.9 1891.4,803.1 1888.6,803.7 1886.2,804.6 1884.3,805.8 1883.1,807.3 1882.7,808.8 1883.1,810.3 1884.3,811.7 1886.2,812.9 1888.6,813.8 1891.5,814.4 1894.5,814.6 1897.5,814.4 1900.4,813.8 1902.8,812.9 1904.7,811.7" fill="#22662d" stroke="#0b2e12" stroke-width="1.3"/><polygon points="1902.6,812.9 1903.7,811.5 1903.8,810.0 1903.1,808.6 1901.5,807.4 1899.2,806.5 1896.4,806.0 1893.5,805.9 1890.7,806.3 1888.2,807.1 1886.3,808.2 1885.3,809.6 1885.1,811.1 1885.9,812.5 1887.5,813.7 1889.8,814.6 1892.5,815.1 1895.5,815.2 1898.3,814.8 1900.8,814.0 1902.6,812.9" fill="#154a1f"/>
<polygon points="1951.2,868.4 1951.0,866.0 1950.4,864.1 1949.5,862.8 1948.3,862.3 1946.9,862.5 1945.3,863.5 1943.8,865.1 1942.4,867.4 1941.2,870.0 1940.3,872.9 1939.7,875.8 1939.5,878.6 1939.7,881.1 1940.3,883.0 1941.2,884.2 1942.4,884.8 1943.8,884.6 1945.3,883.6 1946.9,881.9 1948.3,879.7 1949.5,877.0 1950.4,874.2 1951.0,871.2 1951.2,868.4" fill="#236e2e" stroke="#0c2a10" stroke-width="1.1"/>
<polygon points="1934.0,786.2 1935.1,784.8 1935.5,783.3 1935.1,781.8 1933.9,780.3 1932.1,779.1 1929.6,778.2 1926.8,777.6 1923.8,777.4 1920.7,777.6 1917.9,778.2 1915.5,779.2 1913.6,780.4 1912.4,781.8 1912.0,783.3 1912.4,784.8 1913.6,786.3 1915.5,787.5 1917.9,788.4 1920.8,789.0 1923.8,789.2 1926.8,789.0 1929.7,788.4 1932.1,787.4 1934.0,786.2" fill="#22662d" stroke="#0b2e12" stroke-width="1.3"/><polygon points="1931.9,787.4 1933.0,786.1 1933.1,784.6 1932.4,783.2 1930.8,781.9 1928.5,781.0 1925.7,780.5 1922.8,780.4 1920.0,780.8 1917.5,781.6 1915.6,782.8 1914.6,784.2 1914.4,785.6 1915.2,787.0 1916.8,788.3 1919.1,789.2 1921.8,789.7 1924.8,789.8 1927.6,789.4 1930.1,788.6 1931.9,787.4" fill="#154a1f"/>
<polygon points="1980.5,843.0 1980.3,840.6 1979.7,838.7 1978.8,837.4 1977.6,836.8 1976.2,837.1 1974.6,838.0 1973.1,839.7 1971.7,841.9 1970.5,844.6 1969.6,847.5 1969.0,850.4 1968.8,853.2 1969.0,855.6 1969.6,857.5 1970.5,858.8 1971.7,859.3 1973.1,859.1 1974.6,858.1 1976.2,856.5 1977.6,854.2 1978.8,851.6 1979.7,848.7 1980.3,845.8 1980.5,843.0" fill="#236e2e" stroke="#0c2a10" stroke-width="1.1"/>
<polygon points="1963.3,760.8 1964.4,759.3 1964.8,757.8 1964.4,756.3 1963.2,754.9 1961.4,753.7 1958.9,752.8 1956.1,752.2 1953.1,752.0 1950.0,752.2 1947.2,752.8 1944.8,753.7 1942.9,754.9 1941.7,756.4 1941.3,757.9 1941.7,759.4 1942.9,760.8 1944.8,762.0 1947.2,762.9 1950.1,763.5 1953.1,763.7 1956.1,763.5 1959.0,762.9 1961.4,762.0 1963.3,760.8" fill="#22662d" stroke="#0b2e12" stroke-width="1.3"/><polygon points="1961.2,762.0 1962.3,760.6 1962.4,759.1 1961.7,757.7 1960.1,756.5 1957.8,755.6 1955.0,755.1 1952.1,755.0 1949.3,755.4 1946.8,756.2 1944.9,757.3 1943.9,758.7 1943.7,760.2 1944.5,761.6 1946.1,762.8 1948.4,763.7 1951.1,764.2 1954.1,764.3 1956.9,763.9 1959.4,763.1 1961.2,762.0" fill="#154a1f"/>
<polygon points="2009.8,817.5 2009.6,815.1 2009.0,813.2 2008.1,811.9 2006.9,811.4 2005.5,811.6 2003.9,812.6 2002.4,814.2 2001.0,816.5 1999.8,819.1 1998.9,822.0 1998.3,824.9 1998.1,827.7 1998.3,830.2 1998.9,832.1 1999.8,833.3 2001.0,833.9 2002.4,833.7 2003.9,832.7 2005.5,831.0 2006.9,828.8 2008.1,826.1 2009.0,823.3 2009.6,820.3 2009.8,817.5" fill="#236e2e" stroke="#0c2a10" stroke-width="1.1"/>
<polygon points="1992.6,735.3 1993.7,733.9 1994.1,732.4 1993.7,730.9 1992.5,729.4 1990.7,728.2 1988.2,727.3 1985.4,726.7 1982.4,726.5 1979.3,726.7 1976.5,727.3 1974.1,728.3 1972.2,729.5 1971.0,730.9 1970.6,732.4 1971.0,733.9 1972.2,735.4 1974.1,736.6 1976.5,737.5 1979.4,738.1 1982.4,738.3 1985.4,738.1 1988.3,737.5 1990.7,736.5 1992.6,735.3" fill="#22662d" stroke="#0b2e12" stroke-width="1.3"/><polygon points="1990.5,736.5 1991.6,735.2 1991.7,733.7 1991.0,732.3 1989.4,731.0 1987.1,730.1 1984.3,729.6 1981.4,729.5 1978.6,729.9 1976.1,730.7 1974.2,731.9 1973.2,733.3 1973.0,734.7 1973.8,736.1 1975.4,737.4 1977.7,738.3 1980.4,738.8 1983.4,738.9 1986.2,738.5 1988.7,737.7 1990.5,736.5" fill="#154a1f"/>
<polygon points="2039.1,792.1 2038.9,789.7 2038.3,787.8 2037.4,786.5 2036.2,785.9 2034.8,786.2 2033.2,787.1 2031.7,788.8 2030.3,791.0 2029.1,793.7 2028.2,796.6 2027.6,799.5 2027.4,802.3 2027.6,804.7 2028.2,806.6 2029.1,807.9 2030.3,808.4 2031.7,808.2 2033.2,807.2 2034.8,805.6 2036.2,803.3 2037.4,800.7 2038.3,797.8 2038.9,794.9 2039.1,792.1" fill="#236e2e" stroke="#0c2a10" stroke-width="1.1"/>
<polygon points="2021.9,709.9 2023.0,708.4 2023.4,706.9 2023.0,705.4 2021.8,704.0 2020.0,702.8 2017.5,701.9 2014.7,701.3 2011.7,701.1 2008.6,701.3 2005.8,701.9 2003.4,702.8 2001.5,704.0 2000.3,705.5 1999.9,707.0 2000.3,708.5 2001.5,709.9 2003.4,711.1 2005.8,712.0 2008.7,712.6 2011.7,712.8 2014.7,712.6 2017.6,712.0 2020.0,711.1 2021.9,709.9" fill="#22662d" stroke="#0b2e12" stroke-width="1.3"/><polygon points="2019.8,711.1 2020.9,709.7 2021.0,708.2 2020.3,706.8 2018.7,705.6 2016.4,704.7 2013.6,704.2 2010.7,704.1 2007.9,704.5 2005.4,705.3 2003.5,706.4 2002.5,707.8 2002.3,709.3 2003.1,710.7 2004.7,711.9 2007.0,712.8 2009.7,713.3 2012.7,713.4 2015.5,713.0 2018.0,712.2 2019.8,711.1" fill="#154a1f"/>
<polygon points="2068.4,766.6 2068.2,764.2 2067.6,762.3 2066.7,761.0 2065.5,760.5 2064.1,760.7 2062.5,761.7 2061.0,763.3 2059.6,765.6 2058.4,768.2 2057.5,771.1 2056.9,774.0 2056.7,776.8 2056.9,779.3 2057.5,781.2 2058.4,782.4 2059.6,783.0 2061.0,782.8 2062.5,781.8 2064.1,780.1 2065.5,777.9 2066.7,775.2 2067.6,772.4 2068.2,769.4 2068.4,766.6" fill="#236e2e" stroke="#0c2a10" stroke-width="1.1"/>
<polygon points="2051.2,684.4 2052.3,683.0 2052.7,681.5 2052.3,680.0 2051.1,678.5 2049.3,677.3 2046.8,676.4 2044.0,675.8 2041.0,675.6 2037.9,675.8 2035.1,676.4 2032.7,677.4 2030.8,678.6 2029.6,680.0 2029.2,681.5 2029.6,683.0 2030.8,684.5 2032.7,685.7 2035.1,686.6 2038.0,687.2 2041.0,687.4 2044.0,687.2 2046.9,686.6 2049.3,685.6 2051.2,684.4" fill="#22662d" stroke="#0b2e12" stroke-width="1.3"/><polygon points="2049.1,685.6 2050.2,684.3 2050.3,682.8 2049.6,681.4 2048.0,680.1 2045.7,679.2 2042.9,678.7 2040.0,678.6 2037.2,679.0 2034.7,679.8 2032.8,681.0 2031.8,682.4 2031.6,683.8 2032.4,685.2 2034.0,686.5 2036.3,687.4 2039.0,687.9 2042.0,688.0 2044.8,687.6 2047.3,686.8 2049.1,685.6" fill="#154a1f"/>
<polygon points="2097.7,741.2 2097.5,738.8 2096.9,736.9 2096.0,735.6 2094.8,735.0 2093.4,735.3 2091.8,736.2 2090.3,737.9 2088.9,740.1 2087.7,742.8 2086.8,745.7 2086.2,748.6 2086.0,751.4 2086.2,753.8 2086.8,755.7 2087.7,757.0 2088.9,757.5 2090.3,757.3 2091.8,756.3 2093.4,754.7 2094.8,752.4 2096.0,749.8 2096.9,746.9 2097.5,744.0 2097.7,741.2" fill="#236e2e" stroke="#0c2a10" stroke-width="1.1"/>
<polygon points="2080.5,659.0 2081.6,657.5 2082.0,656.0 2081.6,654.5 2080.4,653.1 2078.6,651.9 2076.1,651.0 2073.3,650.4 2070.3,650.2 2067.2,650.4 2064.4,651.0 2062.0,651.9 2060.1,653.1 2058.9,654.6 2058.5,656.1 2058.9,657.6 2060.1,659.0 2062.0,660.2 2064.4,661.1 2067.3,661.7 2070.3,661.9 2073.3,661.7 2076.2,661.1 2078.6,660.2 2080.5,659.0" fill="#22662d" stroke="#0b2e12" stroke-width="1.3"/><polygon points="2078.4,660.2 2079.5,658.8 2079.6,657.3 2078.9,655.9 2077.3,654.7 2075.0,653.8 2072.2,653.3 2069.3,653.2 2066.5,653.6 2064.0,654.4 2062.1,655.5 2061.1,656.9 2060.9,658.4 2061.7,659.8 2063.3,661.0 2065.6,661.9 2068.3,662.4 2071.3,662.5 2074.1,662.1 2076.6,661.3 2078.4,660.2" fill="#154a1f"/>
<polygon points="2127.0,715.7 2126.8,713.3 2126.2,711.4 2125.3,710.1 2124.1,709.6 2122.7,709.8 2121.1,710.8 2119.6,712.4 2118.2,714.7 2117.0,717.3 2116.1,720.2 2115.5,723.1 2115.3,725.9 2115.5,728.4 2116.1,730.3 2117.0,731.5 2118.2,732.1 2119.6,731.9 2121.1,730.9 2122.7,729.2 2124.1,727.0 2125.3,724.3 2126.2,721.5 2126.8,718.5 2127.0,715.7" fill="#236e2e" stroke="#0c2a10" stroke-width="1.1"/>
<polygon points="2109.8,633.5 2110.9,632.1 2111.3,630.6 2110.9,629.1 2109.7,627.6 2107.9,626.4 2105.4,625.5 2102.6,624.9 2099.6,624.7 2096.5,624.9 2093.7,625.5 2091.3,626.5 2089.4,627.7 2088.2,629.1 2087.8,630.6 2088.2,632.1 2089.4,633.6 2091.3,634.8 2093.7,635.7 2096.6,636.3 2099.6,636.5 2102.6,636.3 2105.5,635.7 2107.9,634.7 2109.8,633.5" fill="#22662d" stroke="#0b2e12" stroke-width="1.3"/><polygon points="2107.7,634.7 2108.8,633.4 2108.9,631.9 2108.2,630.5 2106.6,629.2 2104.3,628.3 2101.5,627.8 2098.6,627.7 2095.8,628.1 2093.3,628.9 2091.4,630.1 2090.4,631.5 2090.2,632.9 2091.0,634.3 2092.6,635.6 2094.9,636.5 2097.6,637.0 2100.6,637.1 2103.4,636.7 2105.9,635.9 2107.7,634.7" fill="#154a1f"/>
<polygon points="2156.3,690.3 2156.1,687.9 2155.5,686.0 2154.6,684.7 2153.4,684.1 2152.0,684.4 2150.4,685.3 2148.9,687.0 2147.5,689.2 2146.3,691.9 2145.4,694.8 2144.8,697.7 2144.6,700.5 2144.8,702.9 2145.4,704.8 2146.3,706.1 2147.5,706.6 2148.9,706.4 2150.4,705.4 2152.0,703.8 2153.4,701.5 2154.6,698.9 2155.5,696.0 2156.1,693.1 2156.3,690.3" fill="#236e2e" stroke="#0c2a10" stroke-width="1.1"/>
<polygon points="2139.1,608.1 2140.2,606.6 2140.6,605.1 2140.2,603.6 2139.0,602.2 2137.2,601.0 2134.7,600.1 2131.9,599.5 2128.9,599.3 2125.8,599.5 2123.0,600.1 2120.6,601.0 2118.7,602.2 2117.5,603.7 2117.1,605.2 2117.5,606.7 2118.7,608.1 2120.6,609.3 2123.0,610.2 2125.9,610.8 2128.9,611.0 2131.9,610.8 2134.8,610.2 2137.2,609.3 2139.1,608.1" fill="#22662d" stroke="#0b2e12" stroke-width="1.3"/><polygon points="2137.0,609.3 2138.1,607.9 2138.2,606.4 2137.5,605.0 2135.9,603.8 2133.6,602.9 2130.8,602.4 2127.9,602.3 2125.1,602.7 2122.6,603.5 2120.7,604.6 2119.7,606.0 2119.5,607.5 2120.3,608.9 2121.9,610.1 2124.2,611.0 2126.9,611.5 2129.9,611.6 2132.7,611.2 2135.2,610.4 2137.0,609.3" fill="#154a1f"/>
<polygon points="2185.6,664.8 2185.4,662.4 2184.8,660.5 2183.9,659.2 2182.7,658.7 2181.3,658.9 2179.7,659.9 2178.2,661.5 2176.8,663.8 2175.6,666.4 2174.7,669.3 2174.1,672.2 2173.9,675.0 2174.1,677.5 2174.7,679.4 2175.6,680.6 2176.8,681.2 2178.2,681.0 2179.7,680.0 2181.3,678.3 2182.7,676.1 2183.9,673.4 2184.8,670.6 2185.4,667.6 2185.6,664.8" fill="#236e2e" stroke="#0c2a10" stroke-width="1.1"/>
<polygon points="2168.4,582.6 2169.5,581.2 2169.9,579.7 2169.5,578.2 2168.3,576.7 2166.5,575.5 2164.0,574.6 2161.2,574.0 2158.2,573.8 2155.1,574.0 2152.3,574.6 2149.9,575.6 2148.0,576.8 2146.8,578.2 2146.4,579.7 2146.8,581.2 2148.0,582.7 2149.9,583.9 2152.3,584.8 2155.2,585.4 2158.2,585.6 2161.2,585.4 2164.1,584.8 2166.5,583.8 2168.4,582.6" fill="#22662d" stroke="#0b2e12" stroke-width="1.3"/><polygon points="2166.3,583.8 2167.4,582.5 2167.5,581.0 2166.8,579.6 2165.2,578.3 2162.9,577.4 2160.1,576.9 2157.2,576.8 2154.4,577.2 2151.9,578.0 2150.0,579.2 2149.0,580.6 2148.8,582.0 2149.6,583.4 2151.2,584.7 2153.5,585.6 2156.2,586.1 2159.2,586.2 2162.0,585.8 2164.5,585.0 2166.3,583.8" fill="#154a1f"/>
<polygon points="2214.9,639.4 2214.7,637.0 2214.1,635.1 2213.2,633.8 2212.0,633.2 2210.6,633.5 2209.0,634.4 2207.5,636.1 2206.1,638.3 2204.9,641.0 2204.0,643.9 2203.4,646.8 2203.2,649.6 2203.4,652.0 2204.0,653.9 2204.9,655.2 2206.1,655.7 2207.5,655.5 2209.0,654.5 2210.6,652.9 2212.0,650.6 2213.2,648.0 2214.1,645.1 2214.7,642.2 2214.9,639.4" fill="#236e2e" stroke="#0c2a10" stroke-width="1.1"/>
<polygon points="2197.7,557.2 2198.8,555.7 2199.2,554.2 2198.8,552.7 2197.6,551.3 2195.8,550.1 2193.3,549.2 2190.5,548.6 2187.5,548.4 2184.4,548.6 2181.6,549.2 2179.2,550.1 2177.3,551.3 2176.1,552.8 2175.7,554.3 2176.1,555.8 2177.3,557.2 2179.2,558.4 2181.6,559.3 2184.5,559.9 2187.5,560.1 2190.5,559.9 2193.4,559.3 2195.8,558.4 2197.7,557.2" fill="#22662d" stroke="#0b2e12" stroke-width="1.3"/><polygon points="2195.6,558.4 2196.7,557.0 2196.8,555.5 2196.1,554.1 2194.5,552.9 2192.2,552.0 2189.4,551.5 2186.5,551.4 2183.7,551.8 2181.2,552.6 2179.3,553.7 2178.3,555.1 2178.1,556.6 2178.9,558.0 2180.5,559.2 2182.8,560.1 2185.5,560.6 2188.5,560.7 2191.3,560.3 2193.8,559.5 2195.6,558.4" fill="#154a1f"/>
<polygon points="2244.2,613.9 2244.0,611.5 2243.4,609.6 2242.5,608.3 2241.3,607.8 2239.9,608.0 2238.3,609.0 2236.8,610.6 2235.4,612.9 2234.2,615.5 2233.3,618.4 2232.7,621.3 2232.5,624.1 2232.7,626.6 2233.3,628.5 2234.2,629.7 2235.4,630.3 2236.8,630.1 2238.3,629.1 2239.9,627.4 2241.3,625.2 2242.5,622.5 2243.4,619.7 2244.0,616.7 2244.2,613.9" fill="#236e2e" stroke="#0c2a10" stroke-width="1.1"/>
<polygon points="2227.0,531.7 2228.1,530.3 2228.5,528.8 2228.1,527.3 2226.9,525.8 2225.1,524.6 2222.6,523.7 2219.8,523.1 2216.8,522.9 2213.7,523.1 2210.9,523.7 2208.5,524.7 2206.6,525.9 2205.4,527.3 2205.0,528.8 2205.4,530.3 2206.6,531.8 2208.5,533.0 2210.9,533.9 2213.8,534.5 2216.8,534.7 2219.8,534.5 2222.7,533.9 2225.1,532.9 2227.0,531.7" fill="#22662d" stroke="#0b2e12" stroke-width="1.3"/><polygon points="2224.9,532.9 2226.0,531.6 2226.1,530.1 2225.4,528.7 2223.8,527.4 2221.5,526.5 2218.7,526.0 2215.8,525.9 2213.0,526.3 2210.5,527.1 2208.6,528.3 2207.6,529.7 2207.4,531.1 2208.2,532.5 2209.8,533.8 2212.1,534.7 2214.8,535.2 2217.8,535.3 2220.6,534.9 2223.1,534.1 2224.9,532.9" fill="#154a1f"/>
<polygon points="2273.5,588.5 2273.3,586.1 2272.7,584.2 2271.8,582.9 2270.6,582.3 2269.2,582.6 2267.6,583.5 2266.1,585.2 2264.7,587.4 2263.5,590.1 2262.6,593.0 2262.0,595.9 2261.8,598.7 2262.0,601.1 2262.6,603.0 2263.5,604.3 2264.7,604.8 2266.1,604.6 2267.6,603.6 2269.2,602.0 2270.6,599.7 2271.8,597.1 2272.7,594.2 2273.3,591.3 2273.5,588.5" fill="#236e2e" stroke="#0c2a10" stroke-width="1.1"/>
<ellipse cx="2216.8" cy="531.3" rx="7" ry="2.6" fill="#fff"/>
<polygon points="1499.7,1084.0 1601.4,1113.0 2010.4,757.7 1908.7,728.7" fill="rgba(58,91,76,0.82)" stroke="#10201a" stroke-width="1" stroke-linejoin="round" />
<polygon points="1499.7,1084.0 1601.4,1113.0 1601.4,1122.1 1499.7,1093.0" fill="#2c4735" stroke="#10201a" stroke-width="1" stroke-linejoin="round" />
<ellipse cx="1572.5" cy="1077.5" rx="9" ry="4.6" fill="none" stroke="#10201a" stroke-width="1.1"/>
<ellipse cx="1572.5" cy="1087.5" rx="9" ry="4.6" fill="none" stroke="#10201a" stroke-width="1.1"/>
<polygon points="1908.7,728.7 2010.4,757.7 2010.4,701.5 1908.7,672.4" fill="rgba(58,91,76,0.82)" stroke="none" stroke-width="0" stroke-linejoin="round" clip-path="url(#rtclip)"/>
<polygon points="1637.3,1173.4 1637.4,1176.2 1612.0,1169.0 1611.9,1166.2" fill="url(#wpl)" stroke="url(#wpl)" stroke-width="0.8"/>
<polygon points="1637.4,1176.2 1637.8,1178.8 1612.3,1171.5 1612.0,1169.0" fill="url(#wpl)" stroke="url(#wpl)" stroke-width="0.8"/>
<polygon points="1637.8,1178.8 1638.3,1181.0 1612.9,1173.8 1612.3,1171.5" fill="url(#wpl)" stroke="url(#wpl)" stroke-width="0.8"/>
<polygon points="1638.3,1181.0 1639.1,1183.0 1613.6,1175.7 1612.9,1173.8" fill="url(#wpl)" stroke="url(#wpl)" stroke-width="0.8"/>
<polygon points="1639.1,1183.0 1640.0,1184.6 1614.6,1177.3 1613.6,1175.7" fill="url(#wpl)" stroke="url(#wpl)" stroke-width="0.8"/>
<polygon points="1640.0,1184.6 1641.1,1185.8 1615.7,1178.5 1614.6,1177.3" fill="url(#wpl)" stroke="url(#wpl)" stroke-width="0.8"/>
<polygon points="1641.1,1185.8 1642.4,1186.6 1616.9,1179.3 1615.7,1178.5" fill="url(#wpl)" stroke="url(#wpl)" stroke-width="0.8"/>
<polygon points="2000.9,454.1 1995.9,453.4 1970.5,446.1 1975.4,446.9" fill="#ebebeb" stroke="#ebebeb" stroke-width="0.8"/>
<polygon points="1995.9,453.4 1990.7,453.8 1965.3,446.6 1970.5,446.1" fill="#ececec" stroke="#ececec" stroke-width="0.8"/>
<polygon points="1990.7,453.8 1985.3,455.5 1959.9,448.2 1965.3,446.6" fill="#ededed" stroke="#ededed" stroke-width="0.8"/>
<polygon points="1985.3,455.5 1979.7,458.3 1954.3,451.0 1959.9,448.2" fill="#eeeeee" stroke="#eeeeee" stroke-width="0.8"/>
<polygon points="1979.7,458.3 1661.0,648.7 1635.6,641.5 1954.3,451.0" fill="#efefef" stroke="#efefef" stroke-width="0.8"/>
<polygon points="1661.0,648.7 1658.1,650.8 1632.7,643.6 1635.6,641.5" fill="#efefef" stroke="#efefef" stroke-width="0.8"/>
<polygon points="1658.1,650.8 1655.2,653.7 1629.7,646.4 1632.7,643.6" fill="#efefef" stroke="#efefef" stroke-width="0.8"/>
<polygon points="1655.2,653.7 1652.3,657.2 1626.8,650.0 1629.7,646.4" fill="#eeeeee" stroke="#eeeeee" stroke-width="0.8"/>
<polygon points="1652.3,657.2 1649.5,661.4 1624.1,654.1 1626.8,650.0" fill="#ededed" stroke="#ededed" stroke-width="0.8"/>
<polygon points="1649.5,661.4 1646.9,666.0 1621.5,658.7 1624.1,654.1" fill="#ebebeb" stroke="#ebebeb" stroke-width="0.8"/>
<polygon points="1646.9,666.0 1644.5,671.1 1619.1,663.8 1621.5,658.7" fill="#e9e9e9" stroke="#e9e9e9" stroke-width="0.8"/>
<polygon points="1644.5,671.1 1642.4,676.5 1617.0,669.2 1619.1,663.8" fill="#e6e6e6" stroke="#e6e6e6" stroke-width="0.8"/>
<polygon points="1642.4,676.5 1640.6,682.0 1615.2,674.8 1617.0,669.2" fill="#e2e2e2" stroke="#e2e2e2" stroke-width="0.8"/>
<polygon points="1640.6,682.0 1639.2,687.7 1613.8,680.4 1615.2,674.8" fill="#dedede" stroke="#dedede" stroke-width="0.8"/>
<polygon points="1639.2,687.7 1638.2,693.3 1612.7,686.1 1613.8,680.4" fill="#d9d9d9" stroke="#d9d9d9" stroke-width="0.8"/>
<polygon points="1638.2,693.3 1637.5,698.8 1612.1,691.6 1612.7,686.1" fill="#d3d3d3" stroke="#d3d3d3" stroke-width="0.8"/>
<polygon points="1637.5,698.8 1637.3,704.1 1611.9,696.8 1612.1,691.6" fill="url(#wpl)" stroke="url(#wpl)" stroke-width="0.8"/>
<polygon points="1637.3,704.1 1637.3,1173.4 1611.9,1166.2 1611.9,696.8" fill="url(#wpl)" stroke="url(#wpl)" stroke-width="0.8"/>
<polygon points="2004.6,531.2 2002.6,519.8 1999.2,510.4 1994.6,503.1 1989.0,498.4 1982.5,496.2 1975.3,496.7 1970.9,498.5 1973.8,503.1 1977.2,512.6 1979.2,524.0 1979.9,537.0 1979.2,551.2 1977.2,566.2 1973.8,581.5 1969.2,596.7 1963.6,611.2 1957.1,624.7 1949.8,636.8 1942.1,647.0 1934.2,655.1 1926.3,660.8 1923.0,662.1 1924.6,664.7 1930.2,669.5 1936.8,671.7 1944.0,671.2 1951.7,668.0 1959.6,662.3 1967.6,654.2 1975.3,644.0 1982.5,632.0 1989.0,618.5 1994.6,603.9 1999.2,588.8 2002.6,573.4 2004.6,558.5 2005.3,544.2" fill="url(#wpw)" stroke="#1a1a1a" stroke-width="0.9" stroke-linejoin="round"/>
<polygon points="1715.4,836.6 1713.9,828.4 1711.5,821.6 1708.2,816.4 1704.1,813.0 1699.4,811.5 1694.3,811.8 1688.7,814.1 1686.5,815.7 1688.4,821.1 1689.9,829.3 1690.4,838.7 1689.9,848.9 1688.4,859.6 1686.0,870.6 1682.7,881.5 1678.7,892.0 1674.0,901.7 1668.8,910.3 1663.3,917.7 1657.6,923.5 1654.1,925.9 1654.6,927.3 1657.9,932.5 1661.9,935.9 1666.6,937.4 1671.8,937.1 1677.3,934.8 1683.0,930.7 1688.7,924.9 1694.3,917.6 1699.4,908.9 1704.1,899.2 1708.2,888.8 1711.5,877.9 1713.9,866.9 1715.4,856.1 1715.8,845.9" fill="url(#wpw)" stroke="#1a1a1a" stroke-width="0.9" stroke-linejoin="round"/>
<polygon points="1892.0,617.9 1892.1,618.1 1892.4,618.1 1892.7,617.9 1892.9,617.5 1893.1,617.0 1893.2,616.5 1893.6,613.2 1893.7,613.2 1893.7,613.1 1893.7,613.0 1893.7,613.0 1893.7,612.9 1893.7,612.8 1895.6,600.5 1895.6,600.3 1895.6,600.2 1895.7,600.1 1895.7,600.0 1895.7,599.9 1895.7,599.8 1898.2,587.4 1898.2,587.3 1898.2,587.2 1898.3,587.0 1898.3,586.9 1898.3,586.8 1898.4,586.7 1901.4,574.3 1901.5,574.2 1901.5,574.1 1901.5,573.9 1901.5,573.8 1901.6,573.7 1901.6,573.6 1905.2,561.3 1905.3,561.2 1905.3,561.1 1905.3,560.9 1905.4,560.8 1905.4,560.7 1905.5,560.6 1909.6,548.5 1909.6,548.4 1909.7,548.3 1909.7,548.2 1909.8,548.1 1909.8,548.0 1909.8,547.8 1914.5,536.1 1914.5,536.0 1914.5,535.9 1914.6,535.8 1914.6,535.7 1914.7,535.5 1914.7,535.4 1919.8,524.1 1919.8,524.0 1919.9,523.9 1919.9,523.8 1920.0,523.7 1920.0,523.6 1920.1,523.5 1924.8,514.2 1925.0,513.8 1925.1,513.2 1925.2,512.7 1925.2,512.2 1925.2,511.8 1925.1,511.5 1925.0,511.5 1924.8,511.2 1924.6,511.0 1924.3,510.9 1924.1,510.9 1923.7,511.0 1923.4,511.2 1886.2,535.9 1884.4,540.6 1884.4,540.7 1884.3,540.8 1884.3,540.9 1884.2,541.0 1884.2,541.1 1884.2,541.2 1880.0,553.3 1880.0,553.5 1880.0,553.6 1879.9,553.7 1879.9,553.8 1879.8,553.9 1879.8,554.0 1876.2,566.3 1876.2,566.5 1876.1,566.6 1876.1,566.7 1876.1,566.8 1876.0,566.9 1876.0,567.0 1873.6,576.9" fill="url(#wpw)" stroke="#1a1a1a" stroke-width="0.9" stroke-linejoin="round"/>
<polygon points="1649.0,819.0 1649.1,819.8 1649.2,820.5 1649.3,821.2 1649.5,821.8 1649.7,822.3 1650.0,822.7 1650.1,822.8 1650.4,823.0 1650.8,823.1 1651.2,822.9 1651.6,822.6 1652.1,822.1 1652.5,821.4 1658.4,810.4 1658.4,810.2 1658.5,810.0 1658.6,809.8 1658.7,809.7 1658.8,809.5 1658.9,809.4 1666.5,797.7 1666.6,797.6 1666.7,797.4 1666.8,797.3 1666.9,797.2 1667.0,797.0 1667.1,796.9 1675.0,787.0 1675.1,786.9 1675.2,786.8 1675.3,786.6 1675.4,786.5 1675.5,786.4 1675.6,786.3 1683.7,778.5 1683.8,778.4 1683.9,778.3 1684.0,778.2 1684.1,778.1 1684.2,778.0 1684.3,777.9 1690.3,773.7 1690.2,773.4 1694.7,711.8 1694.7,711.4 1694.7,711.0 1694.7,710.6 1694.7,710.2 1694.6,709.8 1694.6,709.4 1693.7,703.0 1693.4,701.7 1692.9,700.8 1692.2,700.2 1691.5,700.1 1690.6,700.3 1689.6,701.0 1668.1,720.1 1664.8,766.1 1664.8,766.5 1658.9,770.6 1658.8,770.7 1658.7,770.8 1658.6,770.9 1658.5,771.0 1658.4,771.1 1658.3,771.2 1650.2,779.0 1650.1,779.2 1650.0,779.3 1649.9,779.4 1649.8,779.5 1649.7,779.6 1649.5,779.8 1649.0,780.4" fill="url(#wpw)" stroke="#1a1a1a" stroke-width="0.9" stroke-linejoin="round"/>
<polygon points="1700.5,761.2 1700.6,763.4 1701.0,765.1 1701.7,766.3 1702.6,766.9 1703.8,766.8 1705.1,766.1 1739.7,737.3 1741.5,735.1 1743.1,732.0 1744.2,728.4 1744.5,724.9 1744.1,722.1 1743.0,720.5 1711.1,698.2 1709.6,697.9 1707.9,698.8 1706.2,700.8 1704.7,703.6 1704.6,704.2 1717.5,713.2 1718.6,714.9 1719.1,717.7 1718.7,721.1 1717.7,724.7 1716.1,727.9 1714.3,730.0 1701.6,740.6" fill="url(#wpw)" stroke="#1a1a1a" stroke-width="0.9" stroke-linejoin="round"/>
<polygon points="1764.9,709.3 1765.4,710.0 1765.9,710.4 1766.5,710.6 1767.2,710.5 1767.9,710.2 1768.7,709.7 1798.0,685.9 1799.0,685.0 1799.9,683.7 1800.8,682.2 1801.6,680.5 1802.2,678.6 1802.6,676.8 1818.2,592.0 1818.4,590.6 1818.5,589.3 1818.4,588.1 1818.3,587.0 1818.1,586.0 1817.7,585.2 1816.1,582.2 1815.7,581.6 1815.2,581.2 1814.6,581.0 1814.0,580.9 1813.4,581.1 1812.7,581.5 1790.7,595.9 1777.2,669.5 1776.7,671.4 1776.1,673.2 1775.4,674.9 1774.5,676.4 1773.6,677.7 1772.6,678.6 1755.5,692.6" fill="url(#wpw)" stroke="#1a1a1a" stroke-width="0.9" stroke-linejoin="round"/>
<polygon points="1828.1,597.1 1840.0,608.6 1841.0,610.4 1841.3,613.2 1840.9,616.6 1839.8,620.0 1838.3,623.0 1836.5,625.2 1818.6,640.4 1813.9,662.0 1813.4,665.0 1813.5,667.6 1814.1,669.5 1815.2,670.6 1816.5,670.7 1818.1,669.8 1862.0,632.4 1863.7,630.3 1865.3,627.3 1866.3,623.9 1866.7,620.5 1866.4,617.7 1865.4,615.9 1836.0,587.4 1834.8,586.9 1833.4,587.3 1831.9,588.6 1830.4,590.7 1829.2,593.3 1828.4,596.2" fill="url(#wpw)" stroke="#1a1a1a" stroke-width="0.9" stroke-linejoin="round"/>
<polygon points="1717.6,1072.5 1718.7,1071.4 1719.7,1069.8 1720.5,1068.0 1721.2,1065.9 1721.6,1063.9 1721.7,1061.9 1721.7,1045.2 1721.7,1044.8 1721.7,1044.4 1721.6,1044.0 1721.6,1043.6 1721.5,1043.2 1721.4,1042.8 1696.8,960.7 1696.3,959.7 1695.7,959.0 1695.0,958.7 1694.2,958.8 1693.3,959.3 1692.4,960.2 1687.2,966.0 1687.1,966.1 1687.0,966.2 1686.9,966.3 1686.8,966.4 1686.7,966.5 1686.6,966.6 1678.5,973.5 1678.4,973.6 1678.3,973.7 1678.2,973.7 1678.1,973.8 1678.0,973.9 1677.9,974.0 1677.6,974.1 1696.0,1035.6 1696.1,1035.9 1696.1,1036.3 1696.2,1036.7 1696.2,1037.1 1696.3,1037.5 1696.3,1038.0 1696.3,1054.7 1696.1,1056.6 1695.7,1058.7 1695.1,1060.7 1694.2,1062.6 1693.2,1064.1 1692.2,1065.3 1649.0,1102.8 1649.0,1125.1 1649.2,1126.8 1649.6,1128.1 1650.2,1129.0 1651.1,1129.4 1652.1,1129.2 1653.1,1128.5" fill="url(#wpw)" stroke="#1a1a1a" stroke-width="0.9" stroke-linejoin="round"/>
<polygon points="1770.6,782.3 1770.7,780.0 1770.5,778.1 1769.9,776.7 1769.0,775.9 1767.9,776.0 1766.6,776.7 1741.7,798.4 1738.5,819.6 1738.5,820.0 1738.6,820.2 1738.6,820.4 1738.6,820.6 1738.6,820.9 1738.6,821.1 1738.6,821.4 1738.1,839.7 1738.1,839.9 1738.1,840.2 1738.1,840.4 1738.1,840.7 1738.0,841.0 1738.0,841.2 1735.4,860.9 1735.4,861.1 1735.4,861.4 1735.3,861.7 1735.3,861.9 1735.2,862.2 1735.2,862.5 1730.6,882.6 1730.5,882.9 1730.5,883.1 1730.4,883.4 1730.3,883.7 1730.2,883.9 1730.2,884.2 1727.8,891.5 1716.8,965.8 1730.6,1006.7 1731.6,1008.1 1733.0,1008.4 1734.7,1007.3 1736.2,1005.2 1737.5,1002.3 1738.3,999.1" fill="url(#wpw)" stroke="#1a1a1a" stroke-width="0.9" stroke-linejoin="round"/>
<polygon points="1854.7,953.4 1855.8,952.3 1856.8,950.7 1857.6,948.9 1858.3,946.8 1858.7,944.8 1858.8,942.8 1858.8,935.2 1858.8,934.4 1858.7,933.7 1858.6,933.1 1858.5,932.5 1858.3,932.0 1858.0,931.6 1784.5,828.6 1783.3,827.8 1781.9,828.2 1780.3,829.6 1778.9,831.8 1777.8,834.7 1777.2,837.6 1776.3,845.5 1832.6,924.4 1832.8,924.8 1833.0,925.3 1833.2,925.8 1833.3,926.5 1833.4,927.2 1833.4,927.9 1833.4,935.6 1833.3,937.5 1832.9,939.6 1832.2,941.6 1831.4,943.5 1830.4,945.0 1829.3,946.2 1757.2,1008.8 1754.5,1032.0 1754.4,1034.1 1754.7,1035.9 1755.3,1037.2 1756.2,1037.8 1757.3,1037.8 1758.5,1037.1" fill="url(#wpw)" stroke="#1a1a1a" stroke-width="0.9" stroke-linejoin="round"/>
<polygon points="1919.3,654.3 1919.5,651.7 1919.2,649.5 1918.5,648.0 1917.5,647.1 1916.2,647.2 1914.8,648.0 1890.8,668.9 1862.2,870.6 1878.3,894.4 1879.6,895.4 1881.2,895.1 1882.9,893.6 1884.6,891.1 1885.9,888.0 1886.6,884.6" fill="url(#wpw)" stroke="#1a1a1a" stroke-width="0.9" stroke-linejoin="round"/>
<polygon points="2014.1,815.0 2015.2,813.8 2016.2,812.3 2017.0,810.4 2017.7,808.4 2018.1,806.3 2018.2,804.4 2018.2,790.6 2018.2,789.9 2018.1,789.2 2018.0,788.6 2017.9,788.0 2017.7,787.6 2017.5,787.1 1938.4,666.9 1937.3,666.0 1935.8,666.3 1934.3,667.6 1932.8,669.8 1931.7,672.6 1931.1,675.6 1929.8,685.2 1992.0,779.9 1992.3,780.3 1992.5,780.8 1992.6,781.3 1992.7,781.9 1992.8,782.6 1992.8,783.3 1992.8,797.1 1992.7,799.1 1992.3,801.1 1991.6,803.1 1990.7,805.0 1989.8,806.6 1988.7,807.7 1903.7,881.6 1900.6,904.8 1900.5,907.0 1900.7,908.9 1901.3,910.2 1902.2,910.9 1903.3,910.9 1904.6,910.2" fill="url(#wpw)" stroke="#1a1a1a" stroke-width="0.9" stroke-linejoin="round"/>
<polygon points="2025.9,730.0 2026.7,728.4 2027.4,726.6 2028.0,724.8 2028.4,722.9 2028.6,721.1 2028.7,719.4 2027.6,629.2 2027.6,628.0 2027.4,627.0 2027.2,626.1 2026.9,625.3 2026.5,624.7 2026.0,624.2 2021.8,621.1 2020.8,620.7 2019.5,621.0 2018.2,621.8 2016.9,623.3 2015.7,625.2 2014.6,627.4 2009.5,640.2 2009.0,641.6 2008.5,643.1 2008.2,644.6 2008.0,646.1 2007.9,647.5 2007.9,648.8 2011.8,740.8 2012.2,743.3 2013.1,745.0 2014.5,745.7 2016.1,745.3 2017.9,743.8 2019.5,741.4" fill="url(#wpw)" stroke="#1a1a1a" stroke-width="0.9" stroke-linejoin="round"/>
<polygon points="1657.4,1149.1 1656.1,1147.0 1654.2,1146.5 1652.0,1147.6 1649.7,1150.4 1647.8,1154.2 1646.6,1158.6 1646.1,1162.8 1646.6,1166.2 1647.8,1168.4 1649.7,1168.9 1652.0,1167.7 1654.2,1165.0 1656.1,1161.2 1657.4,1156.8 1657.8,1152.6" fill="url(#wpw)" stroke="#1a1a1a" stroke-width="0.9" stroke-linejoin="round"/>
<polygon points="1686.7,1123.7 1685.4,1121.5 1683.5,1121.0 1681.3,1122.2 1679.0,1124.9 1677.1,1128.7 1675.9,1133.1 1675.4,1137.3 1675.9,1140.8 1677.1,1143.0 1679.0,1143.5 1681.3,1142.3 1683.5,1139.6 1685.4,1135.8 1686.7,1131.4 1687.1,1127.2" fill="url(#wpw)" stroke="#1a1a1a" stroke-width="0.9" stroke-linejoin="round"/>
<polygon points="1716.0,1098.2 1714.7,1096.1 1712.8,1095.6 1710.6,1096.7 1708.3,1099.5 1706.4,1103.3 1705.2,1107.7 1704.7,1111.9 1705.2,1115.3 1706.4,1117.5 1708.3,1118.0 1710.6,1116.8 1712.8,1114.1 1714.7,1110.3 1716.0,1105.9 1716.4,1101.7" fill="url(#wpw)" stroke="#1a1a1a" stroke-width="0.9" stroke-linejoin="round"/>
<polygon points="1745.3,1072.8 1744.0,1070.6 1742.1,1070.1 1739.9,1071.3 1737.6,1074.0 1735.7,1077.8 1734.5,1082.2 1734.0,1086.4 1734.5,1089.9 1735.7,1092.1 1737.6,1092.6 1739.9,1091.4 1742.1,1088.7 1744.0,1084.9 1745.3,1080.5 1745.7,1076.3" fill="url(#wpw)" stroke="#1a1a1a" stroke-width="0.9" stroke-linejoin="round"/>
<polygon points="1774.6,1047.3 1773.3,1045.2 1771.4,1044.7 1769.2,1045.8 1766.9,1048.6 1765.0,1052.4 1763.8,1056.8 1763.3,1061.0 1763.8,1064.4 1765.0,1066.6 1766.9,1067.1 1769.2,1065.9 1771.4,1063.2 1773.3,1059.4 1774.6,1055.0 1775.0,1050.8" fill="url(#wpw)" stroke="#1a1a1a" stroke-width="0.9" stroke-linejoin="round"/>
<polygon points="1803.9,1021.9 1802.6,1019.7 1800.7,1019.2 1798.5,1020.4 1796.2,1023.1 1794.3,1026.9 1793.1,1031.3 1792.6,1035.5 1793.1,1039.0 1794.3,1041.2 1796.2,1041.7 1798.5,1040.5 1800.7,1037.8 1802.6,1034.0 1803.9,1029.6 1804.3,1025.4" fill="url(#wpw)" stroke="#1a1a1a" stroke-width="0.9" stroke-linejoin="round"/>
<polygon points="1833.2,996.4 1831.9,994.3 1830.0,993.8 1827.8,994.9 1825.5,997.7 1823.6,1001.5 1822.4,1005.9 1821.9,1010.1 1822.4,1013.5 1823.6,1015.7 1825.5,1016.2 1827.8,1015.0 1830.0,1012.3 1831.9,1008.5 1833.2,1004.1 1833.6,999.9" fill="url(#wpw)" stroke="#1a1a1a" stroke-width="0.9" stroke-linejoin="round"/>
<polygon points="1862.5,971.0 1861.2,968.8 1859.3,968.3 1857.1,969.5 1854.8,972.2 1852.9,976.0 1851.7,980.4 1851.2,984.6 1851.7,988.1 1852.9,990.3 1854.8,990.8 1857.1,989.6 1859.3,986.9 1861.2,983.1 1862.5,978.7 1862.9,974.5" fill="url(#wpw)" stroke="#1a1a1a" stroke-width="0.9" stroke-linejoin="round"/>
<polygon points="1891.8,945.5 1890.5,943.4 1888.6,942.9 1886.4,944.0 1884.1,946.8 1882.2,950.6 1881.0,955.0 1880.5,959.2 1881.0,962.6 1882.2,964.8 1884.1,965.3 1886.4,964.1 1888.6,961.4 1890.5,957.6 1891.8,953.2 1892.2,949.0" fill="url(#wpw)" stroke="#1a1a1a" stroke-width="0.9" stroke-linejoin="round"/>
<polygon points="1921.1,920.1 1919.8,917.9 1917.9,917.4 1915.7,918.6 1913.4,921.3 1911.5,925.1 1910.3,929.5 1909.8,933.7 1910.3,937.2 1911.5,939.4 1913.4,939.9 1915.7,938.7 1917.9,936.0 1919.8,932.2 1921.1,927.8 1921.5,923.6" fill="url(#wpw)" stroke="#1a1a1a" stroke-width="0.9" stroke-linejoin="round"/>
<polygon points="1950.4,894.6 1949.1,892.5 1947.2,892.0 1945.0,893.1 1942.7,895.9 1940.8,899.7 1939.6,904.1 1939.1,908.3 1939.6,911.7 1940.8,913.9 1942.7,914.4 1945.0,913.2 1947.2,910.5 1949.1,906.7 1950.4,902.3 1950.8,898.1" fill="url(#wpw)" stroke="#1a1a1a" stroke-width="0.9" stroke-linejoin="round"/>
<polygon points="1979.7,869.2 1978.4,867.0 1976.5,866.5 1974.3,867.7 1972.0,870.4 1970.1,874.2 1968.9,878.6 1968.4,882.8 1968.9,886.3 1970.1,888.5 1972.0,889.0 1974.3,887.8 1976.5,885.1 1978.4,881.3 1979.7,876.9 1980.1,872.7" fill="url(#wpw)" stroke="#1a1a1a" stroke-width="0.9" stroke-linejoin="round"/>
<polygon points="2009.0,843.7 2007.7,841.6 2005.8,841.1 2003.6,842.2 2001.3,845.0 1999.4,848.8 1998.2,853.2 1997.7,857.4 1998.2,860.8 1999.4,863.0 2001.3,863.5 2003.6,862.3 2005.8,859.6 2007.7,855.8 2009.0,851.4 2009.4,847.2" fill="url(#wpw)" stroke="#1a1a1a" stroke-width="0.9" stroke-linejoin="round"/>
<polygon points="2038.3,818.3 2037.0,816.1 2035.1,815.6 2032.9,816.8 2030.6,819.5 2028.7,823.3 2027.5,827.7 2027.0,831.9 2027.5,835.4 2028.7,837.6 2030.6,838.1 2032.9,836.9 2035.1,834.2 2037.0,830.4 2038.3,826.0 2038.7,821.8" fill="url(#wpw)" stroke="#1a1a1a" stroke-width="0.9" stroke-linejoin="round"/>
<polygon points="1657.4,693.9 1656.1,691.7 1654.2,691.2 1652.0,692.4 1649.7,695.1 1647.8,698.9 1646.6,703.3 1646.1,707.5 1646.6,711.0 1647.8,713.1 1649.7,713.7 1652.0,712.5 1654.2,709.8 1656.1,705.9 1657.4,701.6 1657.8,697.3" fill="url(#wpw)" stroke="#1a1a1a" stroke-width="0.9" stroke-linejoin="round"/>
<polygon points="1686.7,668.4 1685.4,666.3 1683.5,665.7 1681.3,666.9 1679.0,669.6 1677.1,673.5 1675.9,677.8 1675.4,682.1 1675.9,685.5 1677.1,687.7 1679.0,688.2 1681.3,687.0 1683.5,684.3 1685.4,680.5 1686.7,676.1 1687.1,671.9" fill="url(#wpw)" stroke="#1a1a1a" stroke-width="0.9" stroke-linejoin="round"/>
<polygon points="1716.0,643.0 1714.7,640.8 1712.8,640.3 1710.6,641.5 1708.3,644.2 1706.4,648.0 1705.2,652.4 1704.7,656.6 1705.2,660.1 1706.4,662.2 1708.3,662.8 1710.6,661.6 1712.8,658.9 1714.7,655.0 1716.0,650.7 1716.4,646.4" fill="url(#wpw)" stroke="#1a1a1a" stroke-width="0.9" stroke-linejoin="round"/>
<polygon points="1987.3,466.6 1986.0,464.5 1984.1,463.9 1981.9,465.1 1979.7,467.8 1977.7,471.7 1976.5,476.0 1976.0,480.2 1976.5,483.7 1977.7,485.9 1979.7,486.4 1981.9,485.2 1984.1,482.5 1986.0,478.7 1987.3,474.3 1987.8,470.1" fill="url(#wpw)" stroke="#1a1a1a" stroke-width="0.9" stroke-linejoin="round"/>
<polygon points="1999.6,627.8 1998.3,625.6 1996.4,625.1 1994.2,626.3 1992.0,629.0 1990.1,632.8 1988.8,637.2 1988.3,641.4 1988.8,644.9 1990.1,647.0 1992.0,647.6 1994.2,646.4 1996.4,643.7 1998.3,639.8 1999.6,635.5 2000.1,631.2" fill="url(#wpw)" stroke="#1a1a1a" stroke-width="0.9" stroke-linejoin="round"/>
<path d="M1637.3 1173.4 L1637.4 1176.2 L1637.8 1178.8 L1638.3 1181.0 L1639.1 1183.0 L1640.0 1184.6 L1641.1 1185.8 L1642.4 1186.6 L1643.8 1187.0 L1645.3 1186.9 L1646.9 1186.5 L1648.5 1185.6 L1650.2 1184.3 L2027.9 856.3 L2030.3 853.9 L2032.7 850.9 L2035.0 847.5 L2037.2 843.6 L2039.2 839.4 L2041.0 834.9 L2042.5 830.2 L2043.7 825.5 L2044.6 820.8 L2045.2 816.2 L2045.4 811.8 L2045.3 807.6 L2023.9 499.1 L2022.9 490.3 L2021.4 482.2 L2019.2 474.9 L2016.5 468.6 L2013.3 463.3 L2009.6 459.1 L2005.4 456.0 L2000.9 454.1 L1995.9 453.4 L1990.7 453.8 L1985.3 455.5 L1979.7 458.3 L1661.0 648.7 L1658.1 650.8 L1655.2 653.7 L1652.3 657.2 L1649.5 661.4 L1646.9 666.0 L1644.5 671.1 L1642.4 676.5 L1640.6 682.0 L1639.2 687.7 L1638.2 693.3 L1637.5 698.8 L1637.3 704.1ZM2005.3 544.2 L2004.6 531.2 L2002.6 519.8 L1999.2 510.4 L1994.6 503.1 L1989.0 498.4 L1982.5 496.2 L1975.3 496.7 L1967.6 499.9 L1959.6 505.6 L1951.7 513.6 L1944.0 523.9 L1936.8 535.9 L1930.2 549.4 L1924.6 564.0 L1920.0 579.1 L1916.7 594.4 L1914.6 609.4 L1913.9 623.6 L1914.6 636.7 L1916.7 648.1 L1920.0 657.5 L1924.6 664.7 L1930.2 669.5 L1936.8 671.7 L1944.0 671.2 L1951.7 668.0 L1959.6 662.3 L1967.6 654.2 L1975.3 644.0 L1982.5 632.0 L1989.0 618.5 L1994.6 603.9 L1999.2 588.8 L2002.6 573.4 L2004.6 558.5ZM1715.8 845.9 L1715.4 836.6 L1713.9 828.4 L1711.5 821.6 L1708.2 816.4 L1704.1 813.0 L1699.4 811.5 L1694.3 811.8 L1688.7 814.1 L1683.0 818.2 L1677.3 824.0 L1671.8 831.3 L1666.6 840.0 L1661.9 849.7 L1657.9 860.1 L1654.6 871.0 L1652.2 882.0 L1650.7 892.7 L1650.2 902.9 L1650.7 912.3 L1652.2 920.5 L1654.6 927.3 L1657.9 932.5 L1661.9 935.9 L1666.6 937.4 L1671.8 937.1 L1677.3 934.8 L1683.0 930.7 L1688.7 924.9 L1694.3 917.6 L1699.4 908.9 L1704.1 899.2 L1708.2 888.8 L1711.5 877.9 L1713.9 866.9 L1715.4 856.1ZM1865.7 559.3 L1865.3 557.5 L1865.3 555.3 L1865.8 552.8 L1866.7 550.5 L1867.9 548.6 L1869.2 547.3 L1923.4 511.2 L1923.7 511.0 L1924.1 510.9 L1924.3 510.9 L1924.6 511.0 L1924.8 511.2 L1925.0 511.5 L1925.1 511.5 L1925.2 511.8 L1925.2 512.2 L1925.2 512.7 L1925.1 513.2 L1925.0 513.8 L1924.8 514.2 L1920.1 523.5 L1920.0 523.6 L1920.0 523.7 L1919.9 523.8 L1919.9 523.9 L1919.8 524.0 L1919.8 524.1 L1914.7 535.4 L1914.7 535.5 L1914.6 535.7 L1914.6 535.8 L1914.5 535.9 L1914.5 536.0 L1914.5 536.1 L1909.8 547.8 L1909.8 548.0 L1909.8 548.1 L1909.7 548.2 L1909.7 548.3 L1909.6 548.4 L1909.6 548.5 L1905.5 560.6 L1905.4 560.7 L1905.4 560.8 L1905.3 560.9 L1905.3 561.1 L1905.3 561.2 L1905.2 561.3 L1901.6 573.6 L1901.6 573.7 L1901.5 573.8 L1901.5 573.9 L1901.5 574.1 L1901.5 574.2 L1901.4 574.3 L1898.4 586.7 L1898.3 586.8 L1898.3 586.9 L1898.3 587.0 L1898.2 587.2 L1898.2 587.3 L1898.2 587.4 L1895.7 599.8 L1895.7 599.9 L1895.7 600.0 L1895.7 600.1 L1895.6 600.2 L1895.6 600.3 L1895.6 600.5 L1893.7 612.8 L1893.7 612.9 L1893.7 613.0 L1893.7 613.0 L1893.7 613.1 L1893.7 613.2 L1893.6 613.2 L1893.2 616.5 L1893.1 617.0 L1892.9 617.5 L1892.7 617.9 L1892.4 618.1 L1892.1 618.1 L1892.0 617.9ZM1649.0 744.1 L1649.2 742.2 L1649.6 740.1 L1650.2 738.1 L1651.1 736.3 L1652.0 734.7 L1653.1 733.5 L1689.6 701.0 L1690.6 700.3 L1691.5 700.1 L1692.2 700.2 L1692.9 700.8 L1693.4 701.7 L1693.7 703.0 L1694.6 709.4 L1694.6 709.8 L1694.7 710.2 L1694.7 710.6 L1694.7 711.0 L1694.7 711.4 L1694.7 711.8 L1690.2 773.4 L1690.3 773.9 L1690.4 774.2 L1690.5 774.4 L1690.8 774.5 L1691.1 774.3 L1691.4 774.0 L1691.4 773.9 L1691.5 773.7 L1691.6 773.4 L1691.6 773.2 L1691.6 773.0 L1691.5 772.9 L1691.3 773.0 L1684.3 777.9 L1684.2 778.0 L1684.1 778.1 L1684.0 778.2 L1683.9 778.3 L1683.8 778.4 L1683.7 778.5 L1675.6 786.3 L1675.5 786.4 L1675.4 786.5 L1675.3 786.6 L1675.2 786.8 L1675.1 786.9 L1675.0 787.0 L1667.1 796.9 L1667.0 797.0 L1666.9 797.2 L1666.8 797.3 L1666.7 797.4 L1666.6 797.6 L1666.5 797.7 L1658.9 809.4 L1658.8 809.5 L1658.7 809.7 L1658.6 809.8 L1658.5 810.0 L1658.4 810.2 L1658.4 810.4 L1652.5 821.4 L1652.1 822.1 L1651.6 822.6 L1651.2 822.9 L1650.8 823.1 L1650.4 823.0 L1650.1 822.8 L1650.0 822.7 L1649.7 822.3 L1649.5 821.8 L1649.3 821.2 L1649.2 820.5 L1649.1 819.8 L1649.0 819.0ZM1703.2 710.1 L1703.7 706.9 L1704.7 703.6 L1706.2 700.8 L1707.9 698.8 L1709.6 697.9 L1711.1 698.2 L1743.0 720.5 L1744.1 722.1 L1744.5 724.9 L1744.2 728.4 L1743.1 732.0 L1741.5 735.1 L1739.7 737.3 L1705.1 766.1 L1703.8 766.8 L1702.6 766.9 L1701.7 766.3 L1701.0 765.1 L1700.6 763.4 L1700.5 761.2ZM1730.7 648.5 L1730.0 646.3 L1730.0 643.3 L1730.7 639.9 L1731.9 636.7 L1733.4 634.0 L1735.2 632.3 L1812.7 581.5 L1813.4 581.1 L1814.0 580.9 L1814.6 581.0 L1815.2 581.2 L1815.7 581.6 L1816.1 582.2 L1817.7 585.2 L1818.1 586.0 L1818.3 587.0 L1818.4 588.1 L1818.5 589.3 L1818.4 590.6 L1818.2 592.0 L1802.6 676.8 L1802.2 678.6 L1801.6 680.5 L1800.8 682.2 L1799.9 683.7 L1799.0 685.0 L1798.0 685.9 L1768.7 709.7 L1767.9 710.2 L1767.2 710.5 L1766.5 710.6 L1765.9 710.4 L1765.4 710.0 L1764.9 709.3ZM1828.4 596.2 L1829.2 593.3 L1830.4 590.7 L1831.9 588.6 L1833.4 587.3 L1834.8 586.9 L1836.0 587.4 L1865.4 615.9 L1866.4 617.7 L1866.7 620.5 L1866.3 623.9 L1865.3 627.3 L1863.7 630.3 L1862.0 632.4 L1818.1 669.8 L1816.5 670.7 L1815.2 670.6 L1814.1 669.5 L1813.5 667.6 L1813.4 665.0 L1813.9 662.0ZM1653.1 1128.5 L1652.1 1129.2 L1651.1 1129.4 L1650.2 1129.0 L1649.6 1128.1 L1649.2 1126.8 L1649.0 1125.1 L1649.0 988.1 L1649.1 987.1 L1649.3 986.1 L1649.7 985.0 L1650.2 984.1 L1650.7 983.3 L1651.2 982.7 L1652.7 981.7 L1653.0 981.5 L1653.2 981.3 L1653.5 981.2 L1653.8 981.1 L1654.0 981.1 L1654.3 981.1 L1661.0 981.2 L1661.1 981.2 L1661.2 981.2 L1661.3 981.2 L1661.4 981.2 L1661.5 981.2 L1661.6 981.1 L1669.3 978.9 L1669.4 978.8 L1669.5 978.8 L1669.6 978.8 L1669.7 978.7 L1669.8 978.7 L1669.9 978.6 L1677.9 974.0 L1678.0 973.9 L1678.1 973.8 L1678.2 973.7 L1678.3 973.7 L1678.4 973.6 L1678.5 973.5 L1686.6 966.6 L1686.7 966.5 L1686.8 966.4 L1686.9 966.3 L1687.0 966.2 L1687.1 966.1 L1687.2 966.0 L1692.4 960.2 L1693.3 959.3 L1694.2 958.8 L1695.0 958.7 L1695.7 959.0 L1696.3 959.7 L1696.8 960.7 L1721.4 1042.8 L1721.5 1043.2 L1721.6 1043.6 L1721.6 1044.0 L1721.7 1044.4 L1721.7 1044.8 L1721.7 1045.2 L1721.7 1061.9 L1721.6 1063.9 L1721.2 1065.9 L1720.5 1068.0 L1719.7 1069.8 L1718.7 1071.4 L1717.6 1072.5ZM1738.3 999.1 L1737.5 1002.3 L1736.2 1005.2 L1734.7 1007.3 L1733.0 1008.4 L1731.6 1008.1 L1730.6 1006.7 L1709.9 945.7 L1709.6 944.6 L1709.5 943.4 L1709.6 942.0 L1709.8 940.6 L1710.1 939.1 L1710.5 937.6 L1714.8 925.5 L1714.8 925.3 L1714.9 925.1 L1715.0 924.9 L1715.0 924.7 L1715.1 924.6 L1715.2 924.4 L1723.2 905.5 L1723.3 905.3 L1723.4 905.0 L1723.5 904.8 L1723.6 904.5 L1723.7 904.3 L1723.8 904.0 L1730.2 884.2 L1730.2 883.9 L1730.3 883.7 L1730.4 883.4 L1730.5 883.1 L1730.5 882.9 L1730.6 882.6 L1735.2 862.5 L1735.2 862.2 L1735.3 861.9 L1735.3 861.7 L1735.4 861.4 L1735.4 861.1 L1735.4 860.9 L1738.0 841.2 L1738.0 841.0 L1738.1 840.7 L1738.1 840.4 L1738.1 840.2 L1738.1 839.9 L1738.1 839.7 L1738.6 821.4 L1738.6 821.1 L1738.6 820.9 L1738.6 820.6 L1738.6 820.4 L1738.6 820.2 L1738.5 820.0 L1736.9 804.0 L1736.9 803.8 L1736.9 803.4 L1737.0 803.1 L1737.1 802.8 L1737.3 802.5 L1737.4 802.3 L1737.7 801.9 L1737.9 801.8 L1738.0 801.6 L1738.1 801.5 L1738.2 801.4 L1738.4 801.3 L1738.5 801.1 L1766.6 776.7 L1767.9 776.0 L1769.0 775.9 L1769.9 776.7 L1770.5 778.1 L1770.7 780.0 L1770.6 782.3ZM1758.5 1037.1 L1757.3 1037.8 L1756.2 1037.8 L1755.3 1037.2 L1754.7 1035.9 L1754.4 1034.1 L1754.5 1032.0 L1777.2 837.6 L1777.8 834.7 L1778.9 831.8 L1780.3 829.6 L1781.9 828.2 L1783.3 827.8 L1784.5 828.6 L1858.0 931.6 L1858.3 932.0 L1858.5 932.5 L1858.6 933.1 L1858.7 933.7 L1858.8 934.4 L1858.8 935.2 L1858.8 942.8 L1858.7 944.8 L1858.3 946.8 L1857.6 948.9 L1856.8 950.7 L1855.8 952.3 L1854.7 953.4ZM1886.6 884.6 L1885.9 888.0 L1884.6 891.1 L1882.9 893.6 L1881.2 895.1 L1879.6 895.4 L1878.3 894.4 L1792.2 767.3 L1791.5 765.3 L1791.3 762.5 L1791.8 759.2 L1792.9 756.0 L1794.3 753.2 L1796.0 751.2 L1914.8 648.0 L1916.2 647.2 L1917.5 647.1 L1918.5 648.0 L1919.2 649.5 L1919.5 651.7 L1919.3 654.3ZM1904.6 910.2 L1903.3 910.9 L1902.2 910.9 L1901.3 910.2 L1900.7 908.9 L1900.5 907.0 L1900.6 904.8 L1931.1 675.6 L1931.7 672.6 L1932.8 669.8 L1934.3 667.6 L1935.8 666.3 L1937.3 666.0 L1938.4 666.9 L2017.5 787.1 L2017.7 787.6 L2017.9 788.0 L2018.0 788.6 L2018.1 789.2 L2018.2 789.9 L2018.2 790.6 L2018.2 804.4 L2018.1 806.3 L2017.7 808.4 L2017.0 810.4 L2016.2 812.3 L2015.2 813.8 L2014.1 815.0ZM2019.5 741.4 L2017.9 743.8 L2016.1 745.3 L2014.5 745.7 L2013.1 745.0 L2012.2 743.3 L2011.8 740.8 L2007.9 648.8 L2007.9 647.5 L2008.0 646.1 L2008.2 644.6 L2008.5 643.1 L2009.0 641.6 L2009.5 640.2 L2014.6 627.4 L2015.7 625.2 L2016.9 623.3 L2018.2 621.8 L2019.5 621.0 L2020.8 620.7 L2021.8 621.1 L2026.0 624.2 L2026.5 624.7 L2026.9 625.3 L2027.2 626.1 L2027.4 627.0 L2027.6 628.0 L2027.6 629.2 L2028.7 719.4 L2028.6 721.1 L2028.4 722.9 L2028.0 724.8 L2027.4 726.6 L2026.7 728.4 L2025.9 730.0ZM1657.8 1152.6 L1657.4 1149.1 L1656.1 1147.0 L1654.2 1146.5 L1652.0 1147.6 L1649.7 1150.4 L1647.8 1154.2 L1646.6 1158.6 L1646.1 1162.8 L1646.6 1166.2 L1647.8 1168.4 L1649.7 1168.9 L1652.0 1167.7 L1654.2 1165.0 L1656.1 1161.2 L1657.4 1156.8ZM1687.1 1127.2 L1686.7 1123.7 L1685.4 1121.5 L1683.5 1121.0 L1681.3 1122.2 L1679.0 1124.9 L1677.1 1128.7 L1675.9 1133.1 L1675.4 1137.3 L1675.9 1140.8 L1677.1 1143.0 L1679.0 1143.5 L1681.3 1142.3 L1683.5 1139.6 L1685.4 1135.8 L1686.7 1131.4ZM1716.4 1101.7 L1716.0 1098.2 L1714.7 1096.1 L1712.8 1095.6 L1710.6 1096.7 L1708.3 1099.5 L1706.4 1103.3 L1705.2 1107.7 L1704.7 1111.9 L1705.2 1115.3 L1706.4 1117.5 L1708.3 1118.0 L1710.6 1116.8 L1712.8 1114.1 L1714.7 1110.3 L1716.0 1105.9ZM1745.7 1076.3 L1745.3 1072.8 L1744.0 1070.6 L1742.1 1070.1 L1739.9 1071.3 L1737.6 1074.0 L1735.7 1077.8 L1734.5 1082.2 L1734.0 1086.4 L1734.5 1089.9 L1735.7 1092.1 L1737.6 1092.6 L1739.9 1091.4 L1742.1 1088.7 L1744.0 1084.9 L1745.3 1080.5ZM1775.0 1050.8 L1774.6 1047.3 L1773.3 1045.2 L1771.4 1044.7 L1769.2 1045.8 L1766.9 1048.6 L1765.0 1052.4 L1763.8 1056.8 L1763.3 1061.0 L1763.8 1064.4 L1765.0 1066.6 L1766.9 1067.1 L1769.2 1065.9 L1771.4 1063.2 L1773.3 1059.4 L1774.6 1055.0ZM1804.3 1025.4 L1803.9 1021.9 L1802.6 1019.7 L1800.7 1019.2 L1798.5 1020.4 L1796.2 1023.1 L1794.3 1026.9 L1793.1 1031.3 L1792.6 1035.5 L1793.1 1039.0 L1794.3 1041.2 L1796.2 1041.7 L1798.5 1040.5 L1800.7 1037.8 L1802.6 1034.0 L1803.9 1029.6ZM1833.6 999.9 L1833.2 996.4 L1831.9 994.3 L1830.0 993.8 L1827.8 994.9 L1825.5 997.7 L1823.6 1001.5 L1822.4 1005.9 L1821.9 1010.1 L1822.4 1013.5 L1823.6 1015.7 L1825.5 1016.2 L1827.8 1015.0 L1830.0 1012.3 L1831.9 1008.5 L1833.2 1004.1ZM1862.9 974.5 L1862.5 971.0 L1861.2 968.8 L1859.3 968.3 L1857.1 969.5 L1854.8 972.2 L1852.9 976.0 L1851.7 980.4 L1851.2 984.6 L1851.7 988.1 L1852.9 990.3 L1854.8 990.8 L1857.1 989.6 L1859.3 986.9 L1861.2 983.1 L1862.5 978.7ZM1892.2 949.0 L1891.8 945.5 L1890.5 943.4 L1888.6 942.9 L1886.4 944.0 L1884.1 946.8 L1882.2 950.6 L1881.0 955.0 L1880.5 959.2 L1881.0 962.6 L1882.2 964.8 L1884.1 965.3 L1886.4 964.1 L1888.6 961.4 L1890.5 957.6 L1891.8 953.2ZM1921.5 923.6 L1921.1 920.1 L1919.8 917.9 L1917.9 917.4 L1915.7 918.6 L1913.4 921.3 L1911.5 925.1 L1910.3 929.5 L1909.8 933.7 L1910.3 937.2 L1911.5 939.4 L1913.4 939.9 L1915.7 938.7 L1917.9 936.0 L1919.8 932.2 L1921.1 927.8ZM1950.8 898.1 L1950.4 894.6 L1949.1 892.5 L1947.2 892.0 L1945.0 893.1 L1942.7 895.9 L1940.8 899.7 L1939.6 904.1 L1939.1 908.3 L1939.6 911.7 L1940.8 913.9 L1942.7 914.4 L1945.0 913.2 L1947.2 910.5 L1949.1 906.7 L1950.4 902.3ZM1980.1 872.7 L1979.7 869.2 L1978.4 867.0 L1976.5 866.5 L1974.3 867.7 L1972.0 870.4 L1970.1 874.2 L1968.9 878.6 L1968.4 882.8 L1968.9 886.3 L1970.1 888.5 L1972.0 889.0 L1974.3 887.8 L1976.5 885.1 L1978.4 881.3 L1979.7 876.9ZM2009.4 847.2 L2009.0 843.7 L2007.7 841.6 L2005.8 841.1 L2003.6 842.2 L2001.3 845.0 L1999.4 848.8 L1998.2 853.2 L1997.7 857.4 L1998.2 860.8 L1999.4 863.0 L2001.3 863.5 L2003.6 862.3 L2005.8 859.6 L2007.7 855.8 L2009.0 851.4ZM2038.7 821.8 L2038.3 818.3 L2037.0 816.1 L2035.1 815.6 L2032.9 816.8 L2030.6 819.5 L2028.7 823.3 L2027.5 827.7 L2027.0 831.9 L2027.5 835.4 L2028.7 837.6 L2030.6 838.1 L2032.9 836.9 L2035.1 834.2 L2037.0 830.4 L2038.3 826.0ZM1657.8 697.3 L1657.4 693.9 L1656.1 691.7 L1654.2 691.2 L1652.0 692.4 L1649.7 695.1 L1647.8 698.9 L1646.6 703.3 L1646.1 707.5 L1646.6 711.0 L1647.8 713.1 L1649.7 713.7 L1652.0 712.5 L1654.2 709.8 L1656.1 705.9 L1657.4 701.6ZM1687.1 671.9 L1686.7 668.4 L1685.4 666.3 L1683.5 665.7 L1681.3 666.9 L1679.0 669.6 L1677.1 673.5 L1675.9 677.8 L1675.4 682.1 L1675.9 685.5 L1677.1 687.7 L1679.0 688.2 L1681.3 687.0 L1683.5 684.3 L1685.4 680.5 L1686.7 676.1ZM1716.4 646.4 L1716.0 643.0 L1714.7 640.8 L1712.8 640.3 L1710.6 641.5 L1708.3 644.2 L1706.4 648.0 L1705.2 652.4 L1704.7 656.6 L1705.2 660.1 L1706.4 662.2 L1708.3 662.8 L1710.6 661.6 L1712.8 658.9 L1714.7 655.0 L1716.0 650.7ZM1987.8 470.1 L1987.3 466.6 L1986.0 464.5 L1984.1 463.9 L1981.9 465.1 L1979.7 467.8 L1977.7 471.7 L1976.5 476.0 L1976.0 480.2 L1976.5 483.7 L1977.7 485.9 L1979.7 486.4 L1981.9 485.2 L1984.1 482.5 L1986.0 478.7 L1987.3 474.3ZM2000.1 631.2 L1999.6 627.8 L1998.3 625.6 L1996.4 625.1 L1994.2 626.3 L1992.0 629.0 L1990.1 632.8 L1988.8 637.2 L1988.3 641.4 L1988.8 644.9 L1990.1 647.0 L1992.0 647.6 L1994.2 646.4 L1996.4 643.7 L1998.3 639.8 L1999.6 635.5Z" fill="#e1e1e1" fill-rule="evenodd" stroke="#1a1a1a" stroke-width="1.2" stroke-linejoin="round"/>
<polyline points="1611.9,1166.2 1612.0,1169.0 1612.0,1169.0 1612.3,1171.5 1612.3,1171.5 1612.9,1173.8 1612.9,1173.8 1613.6,1175.7 1613.6,1175.7 1614.6,1177.3 1614.6,1177.3 1615.7,1178.5 1615.7,1178.5 1616.9,1179.3" fill="none" stroke="#1a1a1a" stroke-width="1.1" stroke-linejoin="round" stroke-linecap="round" />
<polyline points="1975.4,446.9 1970.5,446.1 1970.5,446.1 1965.3,446.6 1965.3,446.6 1959.9,448.2 1959.9,448.2 1954.3,451.0 1954.3,451.0 1635.6,641.5 1635.6,641.5 1632.7,643.6 1632.7,643.6 1629.7,646.4 1629.7,646.4 1626.8,650.0 1626.8,650.0 1624.1,654.1 1624.1,654.1 1621.5,658.7 1621.5,658.7 1619.1,663.8 1619.1,663.8 1617.0,669.2 1617.0,669.2 1615.2,674.8 1615.2,674.8 1613.8,680.4 1613.8,680.4 1612.7,686.1 1612.7,686.1 1612.1,691.6 1612.1,691.6 1611.9,696.8 1611.9,696.8 1611.9,1166.2 1611.9,1166.2 1612.0,1169.0" fill="none" stroke="#1a1a1a" stroke-width="1.1" stroke-linejoin="round" stroke-linecap="round" />
<g clip-path="url(#sc2)"><polygon points="1650.2,842.8 1743.7,869.5 1743.7,896.9 1650.2,870.2" fill="#363b40" stroke="#0e0f11" stroke-width="1.0" stroke-linejoin="round" />
<polygon points="1650.2,870.2 1743.7,896.9 1743.7,907.1 1650.2,880.4" fill="#2a2d31" stroke="#0e0f11" stroke-width="1.0" stroke-linejoin="round" />
<polygon points="1650.2,880.4 1743.7,907.1 1743.7,929.5 1650.2,902.8" fill="#222528" stroke="#0e0f11" stroke-width="1.0" stroke-linejoin="round" /></g>
<polygon points="1761.0,873.7 1760.8,871.5 1760.3,869.8 1759.5,868.6 1758.4,868.1 1746.4,866.7 1745.1,866.9 1743.7,867.8 1742.4,869.2 1741.1,871.3 1729.1,893.5 1728.0,895.9 1727.2,898.5 1726.7,901.2 1726.5,903.7 1726.5,927.4 1726.7,929.6 1727.2,931.3 1728.0,932.4 1729.1,932.9 1741.1,934.4 1742.4,934.2 1743.7,933.3 1745.1,931.8 1746.4,929.8 1758.4,907.5 1759.5,905.1 1760.3,902.5 1760.8,899.9 1761.0,897.4" fill="#3a3f44" stroke="#0b0c0d" stroke-width="1.1" stroke-linejoin="round" />
<polygon points="1747.8,897.0 1747.5,894.5 1746.6,893.0 1745.3,892.7 1743.7,893.5 1742.2,895.4 1740.8,898.1 1740.0,901.1 1739.6,904.1 1740.0,906.5 1740.8,908.0 1742.2,908.4 1743.7,907.6 1745.3,905.7 1746.6,903.0 1747.5,899.9 1747.8,897.0" fill="#15171a" stroke="#0b0c0d" stroke-width="1"/>
<polygon points="1985.0,588.2 1986.0,585.0 2021.6,595.2 2020.6,598.4" fill="#1f1f1f" stroke="#1f1f1f" stroke-width="1"/>
<polygon points="1986.0,585.0 1986.8,581.8 2022.4,592.0 2021.6,595.2" fill="#1f1f1f" stroke="#1f1f1f" stroke-width="1"/>
<polygon points="1983.9,591.3 1985.0,588.2 2020.6,598.4 2019.5,601.5" fill="#1f1f1f" stroke="#1f1f1f" stroke-width="1"/>
<polygon points="1986.8,581.8 1987.5,578.7 2023.1,588.8 2022.4,592.0" fill="#202020" stroke="#202020" stroke-width="1"/>
<polygon points="1982.8,594.3 1983.9,591.3 2019.5,601.5 2018.4,604.5" fill="#1e1e1e" stroke="#1e1e1e" stroke-width="1"/>
<polygon points="1987.5,578.7 1988.1,575.5 2023.7,585.7 2023.1,588.8" fill="#212121" stroke="#212121" stroke-width="1"/>
<polygon points="1981.5,597.3 1982.8,594.3 2018.4,604.5 2017.1,607.4" fill="#1e1e1e" stroke="#1e1e1e" stroke-width="1"/>
<polygon points="1988.1,575.5 1988.5,572.4 2024.1,582.5 2023.7,585.7" fill="#212121" stroke="#212121" stroke-width="1"/>
<polygon points="1980.2,600.1 1981.5,597.3 2017.1,607.4 2015.8,610.3" fill="#1d1d1d" stroke="#1d1d1d" stroke-width="1"/>
<polygon points="1988.5,572.4 1988.8,569.3 2024.4,579.5 2024.1,582.5" fill="#222222" stroke="#222222" stroke-width="1"/>
<polygon points="1978.8,602.8 1980.2,600.1 2015.8,610.3 2014.3,613.0" fill="#1d1d1d" stroke="#1d1d1d" stroke-width="1"/>
<polygon points="1988.8,569.3 1989.0,566.3 2024.6,576.5 2024.4,579.5" fill="#222222" stroke="#222222" stroke-width="1"/>
<polygon points="1977.3,605.3 1978.8,602.8 2014.3,613.0 2012.9,615.5" fill="#1d1d1d" stroke="#1d1d1d" stroke-width="1"/>
<polygon points="1989.0,566.3 1989.0,563.5 2024.6,573.6 2024.6,576.5" fill="#232323" stroke="#232323" stroke-width="1"/>
<polygon points="1975.7,607.7 1977.3,605.3 2012.9,615.5 2011.3,617.9" fill="#1c1c1c" stroke="#1c1c1c" stroke-width="1"/>
<polygon points="1989.0,563.5 1988.9,560.7 2024.5,570.9 2024.6,573.6" fill="#232323" stroke="#232323" stroke-width="1"/>
<polygon points="1974.1,609.9 1975.7,607.7 2011.3,617.9 2009.7,620.1" fill="#1c1c1c" stroke="#1c1c1c" stroke-width="1"/>
<polygon points="1988.9,560.7 1988.7,558.1 2024.3,568.3 2024.5,570.9" fill="#242424" stroke="#242424" stroke-width="1"/>
<polygon points="1972.5,611.9 1974.1,609.9 2009.7,620.1 2008.1,622.0" fill="#1c1c1c" stroke="#1c1c1c" stroke-width="1"/>
<polygon points="1988.7,558.1 1988.3,555.7 2023.9,565.9 2024.3,568.3" fill="#252525" stroke="#252525" stroke-width="1"/>
<polygon points="1970.9,613.6 1972.5,611.9 2008.1,622.0 2006.4,623.8" fill="#1c1c1c" stroke="#1c1c1c" stroke-width="1"/>
<polygon points="1988.3,555.7 1987.8,553.4 2023.3,563.6 2023.9,565.9" fill="#252525" stroke="#252525" stroke-width="1"/>
<polygon points="1969.2,615.2 1970.9,613.6 2006.4,623.8 2004.8,625.3" fill="#1c1c1c" stroke="#1c1c1c" stroke-width="1"/>
<polygon points="1987.8,553.4 1987.1,551.4 2022.7,561.6 2023.3,563.6" fill="#262626" stroke="#262626" stroke-width="1"/>
<polygon points="1987.1,551.4 1986.3,549.6 2021.9,559.7 2022.7,561.6" fill="#262626" stroke="#262626" stroke-width="1"/>
<polygon points="1986.3,549.6 1985.4,548.0 2021.0,558.1 2021.9,559.7" fill="#272727" stroke="#272727" stroke-width="1"/>
<polygon points="1985.4,548.0 1984.4,546.6 2020.0,556.8 2021.0,558.1" fill="#272727" stroke="#272727" stroke-width="1"/>
<polygon points="1984.4,546.6 1983.3,545.5 2018.9,555.6 2020.0,556.8" fill="#282828" stroke="#282828" stroke-width="1"/>
<polygon points="1983.3,545.5 1982.1,544.6 2017.7,554.8 2018.9,555.6" fill="#282828" stroke="#282828" stroke-width="1"/>
<polygon points="1982.1,544.6 1980.8,544.0 2016.3,554.2 2017.7,554.8" fill="#292929" stroke="#292929" stroke-width="1"/>
<polygon points="1685.2,973.4 1969.2,615.2 2004.8,625.3 1720.8,983.6" fill="#1c1c1c" stroke="#1c1c1c" stroke-width="1"/>
<polygon points="1681.3,976.4 1685.2,973.4 1720.8,983.6 1716.9,986.6" fill="#1c1c1c" stroke="#1c1c1c" stroke-width="1"/>
<polygon points="1677.5,979.0 1681.3,976.4 1716.9,986.6 1713.1,989.2" fill="#1c1c1c" stroke="#1c1c1c" stroke-width="1"/>
<polygon points="1673.7,981.1 1677.5,979.0 1713.1,989.2 1709.2,991.2" fill="#1c1c1c" stroke="#1c1c1c" stroke-width="1"/>
<polygon points="1669.9,982.6 1673.7,981.1 1709.2,991.2 1705.5,992.7" fill="#1c1c1c" stroke="#1c1c1c" stroke-width="1"/>
<polygon points="1666.2,983.6 1669.9,982.6 1705.5,992.7 1701.8,993.7" fill="#1c1c1c" stroke="#1c1c1c" stroke-width="1"/>
<polygon points="1662.7,984.0 1666.2,983.6 1701.8,993.7 1698.3,994.2" fill="#1d1d1d" stroke="#1d1d1d" stroke-width="1"/>
<polygon points="1659.2,983.9 1662.7,984.0 1698.3,994.2 1694.8,994.1" fill="#1d1d1d" stroke="#1d1d1d" stroke-width="1"/>
<polygon points="1655.9,983.3 1659.2,983.9 1694.8,994.1 1691.5,993.4" fill="#1d1d1d" stroke="#1d1d1d" stroke-width="1"/>
<polygon points="1983.6,534.5 1981.9,534.1 2017.5,544.3 2019.2,544.7" fill="#2f2f2f" stroke="#2f2f2f" stroke-width="1"/>
<polygon points="1981.9,534.1 1980.1,534.0 2015.6,544.2 2017.5,544.3" fill="#2f2f2f" stroke="#2f2f2f" stroke-width="1"/>
<polygon points="1980.1,534.0 1978.1,534.3 2013.7,544.4 2015.6,544.2" fill="#2f2f2f" stroke="#2f2f2f" stroke-width="1"/>
<polygon points="1978.1,534.3 1976.2,534.9 2011.8,545.0 2013.7,544.4" fill="#303030" stroke="#303030" stroke-width="1"/>
<polygon points="1976.2,534.9 1974.1,535.8 2009.7,546.0 2011.8,545.0" fill="#303030" stroke="#303030" stroke-width="1"/>
<polygon points="1974.1,535.8 1972.1,537.0 2007.7,547.2 2009.7,546.0" fill="#303030" stroke="#303030" stroke-width="1"/>
<polygon points="1972.1,537.0 1970.0,538.6 2005.6,548.8 2007.7,547.2" fill="#303030" stroke="#303030" stroke-width="1"/>
<polygon points="1970.0,538.6 1967.9,540.5 2003.5,550.6 2005.6,548.8" fill="#303030" stroke="#303030" stroke-width="1"/>
<polygon points="1967.9,540.5 1965.9,542.6 2001.5,552.8 2003.5,550.6" fill="#303030" stroke="#303030" stroke-width="1"/>
<polygon points="1965.9,542.6 1963.8,545.1 1999.4,555.2 2001.5,552.8" fill="#303030" stroke="#303030" stroke-width="1"/>
<polygon points="1963.8,545.1 1672.5,794.6 1708.1,804.8 1999.4,555.2" fill="#303030" stroke="#303030" stroke-width="1"/>
<polygon points="1649.7,991.5 1653.1,992.8 1688.7,1002.9 1685.3,1001.6" fill="#242424" stroke="#242424" stroke-width="1"/>
<polygon points="1646.4,989.6 1649.7,991.5 1685.3,1001.6 1682.0,999.8" fill="#242424" stroke="#242424" stroke-width="1"/>
<polygon points="1643.4,987.2 1646.4,989.6 1682.0,999.8 1679.0,997.3" fill="#242424" stroke="#242424" stroke-width="1"/>
<polygon points="1640.6,984.2 1643.4,987.2 1679.0,997.3 1676.2,994.3" fill="#242424" stroke="#242424" stroke-width="1"/>
<polygon points="1638.0,980.6 1640.6,984.2 1676.2,994.3 1673.6,990.8" fill="#242424" stroke="#242424" stroke-width="1"/>
<polygon points="1635.6,976.5 1638.0,980.6 1673.6,990.8 1671.2,986.7" fill="#252525" stroke="#252525" stroke-width="1"/>
<polygon points="1633.6,972.0 1635.6,976.5 1671.2,986.7 1669.2,982.1" fill="#252525" stroke="#252525" stroke-width="1"/>
<polygon points="1631.8,966.9 1633.6,972.0 1669.2,982.1 1667.4,977.1" fill="#262626" stroke="#262626" stroke-width="1"/>
<polygon points="1630.3,961.4 1631.8,966.9 1667.4,977.1 1665.9,971.6" fill="#262626" stroke="#262626" stroke-width="1"/>
<polygon points="1629.1,955.5 1630.3,961.4 1665.9,971.6 1664.7,965.7" fill="#272727" stroke="#272727" stroke-width="1"/>
<polygon points="1628.1,949.2 1629.1,955.5 1664.7,965.7 1663.7,959.3" fill="#272727" stroke="#272727" stroke-width="1"/>
<polygon points="1627.5,942.5 1628.1,949.2 1663.7,959.3 1663.1,952.7" fill="#282828" stroke="#282828" stroke-width="1"/>
<polygon points="1672.5,794.6 1668.4,800.1 1704.0,810.2 1708.1,804.8" fill="#303030" stroke="#303030" stroke-width="1"/>
<polygon points="1627.2,935.5 1627.5,942.5 1663.1,952.7 1662.8,945.7" fill="#282828" stroke="#282828" stroke-width="1"/>
<polygon points="1668.4,800.1 1664.4,806.0 1700.0,816.1 1704.0,810.2" fill="#303030" stroke="#303030" stroke-width="1"/>
<polygon points="1627.2,928.2 1627.2,935.5 1662.8,945.7 1662.8,938.4" fill="#292929" stroke="#292929" stroke-width="1"/>
<polygon points="1664.4,806.0 1660.5,812.3 1696.1,822.4 1700.0,816.1" fill="#2f2f2f" stroke="#2f2f2f" stroke-width="1"/>
<polygon points="1627.5,920.7 1627.2,928.2 1662.8,938.4 1663.1,930.8" fill="#292929" stroke="#292929" stroke-width="1"/>
<polygon points="1660.5,812.3 1656.7,818.9 1692.3,829.1 1696.1,822.4" fill="#2f2f2f" stroke="#2f2f2f" stroke-width="1"/>
<polygon points="1628.1,912.9 1627.5,920.7 1663.1,930.8 1663.7,923.1" fill="#2a2a2a" stroke="#2a2a2a" stroke-width="1"/>
<polygon points="1656.7,818.9 1653.1,825.9 1688.7,836.1 1692.3,829.1" fill="#2f2f2f" stroke="#2f2f2f" stroke-width="1"/>
<polygon points="1629.1,905.0 1628.1,912.9 1663.7,923.1 1664.6,915.2" fill="#2a2a2a" stroke="#2a2a2a" stroke-width="1"/>
<polygon points="1653.1,825.9 1649.7,833.2 1685.3,843.3 1688.7,836.1" fill="#2f2f2f" stroke="#2f2f2f" stroke-width="1"/>
<polygon points="1630.3,896.9 1629.1,905.0 1664.6,915.2 1665.9,907.1" fill="#2b2b2b" stroke="#2b2b2b" stroke-width="1"/>
<polygon points="1649.7,833.2 1646.4,840.7 1682.0,850.9 1685.3,843.3" fill="#2e2e2e" stroke="#2e2e2e" stroke-width="1"/>
<polygon points="1631.8,888.8 1630.3,896.9 1665.9,907.1 1667.4,899.0" fill="#2b2b2b" stroke="#2b2b2b" stroke-width="1"/>
<polygon points="1646.4,840.7 1643.4,848.4 1679.0,858.6 1682.0,850.9" fill="#2e2e2e" stroke="#2e2e2e" stroke-width="1"/>
<polygon points="1633.6,880.6 1631.8,888.8 1667.4,899.0 1669.2,890.8" fill="#2c2c2c" stroke="#2c2c2c" stroke-width="1"/>
<polygon points="1643.4,848.4 1640.5,856.3 1676.1,866.5 1679.0,858.6" fill="#2e2e2e" stroke="#2e2e2e" stroke-width="1"/>
<polygon points="1635.6,872.5 1633.6,880.6 1669.2,890.8 1671.2,882.6" fill="#2c2c2c" stroke="#2c2c2c" stroke-width="1"/>
<polygon points="1640.5,856.3 1638.0,864.4 1673.6,874.5 1676.1,866.5" fill="#2d2d2d" stroke="#2d2d2d" stroke-width="1"/>
<polygon points="1638.0,864.4 1635.6,872.5 1671.2,882.6 1673.6,874.5" fill="#2d2d2d" stroke="#2d2d2d" stroke-width="1"/>
<path d="M1708.1 804.8 L1704.0 810.2 L1700.0 816.1 L1696.1 822.4 L1692.3 829.1 L1688.7 836.1 L1685.3 843.3 L1682.0 850.9 L1679.0 858.6 L1676.1 866.5 L1673.6 874.5 L1671.2 882.6 L1669.2 890.8 L1667.4 899.0 L1665.9 907.1 L1664.6 915.2 L1663.7 923.1 L1663.1 930.8 L1662.8 938.4 L1662.8 945.7 L1663.1 952.7 L1663.7 959.3 L1664.7 965.7 L1665.9 971.6 L1667.4 977.1 L1669.2 982.1 L1671.2 986.7 L1673.6 990.8 L1676.2 994.3 L1679.0 997.3 L1682.0 999.8 L1685.3 1001.6 L1688.7 1002.9 L1692.3 1003.6 L1696.1 1003.7 L1700.0 1003.3 L1704.0 1002.2 L1708.1 1000.5 L1712.3 998.3 L1716.5 995.5 L1720.8 992.1 L2004.7 633.9 L2006.8 632.0 L2008.9 629.8 L2010.9 627.3 L2012.9 624.6 L2014.9 621.6 L2016.7 618.4 L2018.5 615.0 L2020.2 611.5 L2021.8 607.8 L2023.2 604.0 L2024.6 600.1 L2025.8 596.1 L2026.8 592.1 L2027.7 588.1 L2028.4 584.2 L2029.0 580.3 L2029.3 576.4 L2029.6 572.7 L2029.6 569.1 L2029.5 565.7 L2029.1 562.4 L2028.7 559.4 L2028.0 556.5 L2027.2 554.0 L2026.2 551.7 L2025.1 549.7 L2023.8 547.9 L2022.4 546.5 L2020.9 545.5 L2019.2 544.7 L2017.5 544.3 L2015.6 544.2 L2013.7 544.4 L2011.8 545.0 L2009.7 546.0 L2007.7 547.2 L2005.6 548.8 L2003.5 550.6 L2001.5 552.8 L1999.4 555.2 L1708.1 804.8ZM1709.2 812.1 L1705.5 817.1 L1701.8 822.5 L1698.2 828.3 L1694.8 834.3 L1691.5 840.7 L1688.3 847.4 L1685.4 854.3 L1682.6 861.4 L1680.0 868.6 L1677.6 875.9 L1675.5 883.4 L1673.6 890.8 L1672.0 898.3 L1670.6 905.8 L1669.5 913.1 L1668.6 920.4 L1668.1 927.4 L1667.8 934.3 L1667.8 941.0 L1668.1 947.4 L1668.6 953.5 L1669.5 959.3 L1670.6 964.7 L1672.0 969.8 L1673.6 974.4 L1675.5 978.6 L1677.6 982.3 L1680.0 985.6 L1682.6 988.3 L1685.4 990.5 L1688.3 992.3 L1691.5 993.4 L1694.8 994.1 L1698.3 994.2 L1701.8 993.7 L1705.5 992.7 L1709.2 991.2 L1713.1 989.2 L1716.9 986.6 L1720.8 983.6 L2004.8 625.3 L2006.4 623.8 L2008.1 622.0 L2009.7 620.1 L2011.3 617.9 L2012.9 615.5 L2014.3 613.0 L2015.8 610.3 L2017.1 607.4 L2018.4 604.5 L2019.5 601.5 L2020.6 598.4 L2021.6 595.2 L2022.4 592.0 L2023.1 588.8 L2023.7 585.7 L2024.1 582.5 L2024.4 579.5 L2024.6 576.5 L2024.6 573.6 L2024.5 570.9 L2024.3 568.3 L2023.9 565.9 L2023.3 563.6 L2022.7 561.6 L2021.9 559.7 L2021.0 558.1 L2020.0 556.8 L2018.9 555.6 L2017.7 554.8 L2016.3 554.2 L2015.0 553.8 L2013.5 553.8 L2012.0 554.0 L2010.4 554.4 L2008.8 555.2 L2007.1 556.2 L2005.5 557.4 L2003.8 558.9 L2002.2 560.6 L2000.5 562.6 L1709.2 812.1Z" fill="#2e2e2e" fill-rule="evenodd" stroke="#0a0a0a" stroke-width="1.1"/>
<polyline points="1672.5,794.6 1668.4,800.1 1664.4,806.0 1660.5,812.3 1656.7,818.9 1653.1,825.9 1649.7,833.2 1646.4,840.7 1643.4,848.4 1640.5,856.3 1638.0,864.4 1635.6,872.5 1633.6,880.6 1631.8,888.8 1630.3,896.9 1629.1,905.0 1628.1,912.9 1627.5,920.7 1627.2,928.2 1627.2,935.5 1627.5,942.5 1628.1,949.2 1629.1,955.5 1630.3,961.4 1631.8,966.9 1633.6,972.0 1635.6,976.5 1638.0,980.6 1640.6,984.2 1643.4,987.2 1646.4,989.6 1649.7,991.5 1653.1,992.8" fill="none" stroke="#0a0a0a" stroke-width="1.1" stroke-linejoin="round" stroke-linecap="round" />
<polyline points="1981.9,534.1 1980.1,534.0 1978.1,534.3 1976.2,534.9 1974.1,535.8 1972.1,537.0 1970.0,538.6 1967.9,540.5 1965.9,542.6 1963.8,545.1 1672.5,794.6" fill="none" stroke="#0a0a0a" stroke-width="1.1" stroke-linejoin="round" stroke-linecap="round" />
<polyline points="1655.9,983.3 1659.2,983.9 1662.7,984.0 1666.2,983.6 1669.9,982.6 1673.7,981.1 1677.5,979.0 1681.3,976.4 1685.2,973.4 1969.2,615.2 1970.9,613.6 1972.5,611.9 1974.1,609.9 1975.7,607.7 1977.3,605.3 1978.8,602.8 1980.2,600.1 1981.5,597.3 1982.8,594.3 1983.9,591.3 1985.0,588.2 1986.0,585.0 1986.8,581.8 1987.5,578.7 1988.1,575.5 1988.5,572.4 1988.8,569.3 1989.0,566.3 1989.0,563.5 1988.9,560.7 1988.7,558.1 1988.3,555.7 1987.8,553.4 1987.1,551.4 1986.3,549.6 1985.4,548.0 1984.4,546.6 1983.3,545.5 1982.1,544.6 1980.8,544.0" fill="none" stroke="#0a0a0a" stroke-width="1.0" stroke-linejoin="round" stroke-linecap="round" />
</svg>
<svg class="a" style="left:0;top:0" width="2559" height="1439" viewBox="0 0 2559 1439"><polygon points="2374.0,215.8 2422.8,186.9 2484.2,214.0 2480.6,275.4 2439.0,311.5 2370.4,282.6" fill="#dde4e8" stroke="#dde4e8" stroke-width="6" stroke-linejoin="round"/><polygon points="2393.0,215.2 2425.2,196.1 2465.8,214.0 2435.9,230.7" fill="#fff" stroke="#fff" stroke-width="8" stroke-linejoin="round"/><polygon points="2384.7,231.6 2427.6,247.1 2427.6,294.8 2382.4,275.7" fill="#fff" stroke="#fff" stroke-width="8" stroke-linejoin="round"/><polygon points="2446.4,246.4 2476.2,229.7 2473.8,270.2 2446.4,294.0" fill="#fff" stroke="#fff" stroke-width="8" stroke-linejoin="round"/><ellipse cx="2439" cy="241" rx="6.5" ry="7.5" fill="#fff" opacity="0.95"/><ellipse cx="2375.5" cy="219" rx="6.5" ry="7.5" fill="#fff" opacity="0.95"/><ellipse cx="2439" cy="306" rx="6.5" ry="7.5" fill="#fff" opacity="0.95"/><path d="M2363.5 296.2 L2406.5 259.1" stroke="#4caf50" stroke-width="1.6"/><path d="M2363.5 221.2 L2363.5 296.2" stroke="#4a4ad8" stroke-width="2"/><path d="M2363.5 296.2 L2440 318.8" stroke="#e03c3c" stroke-width="2"/><polygon points="2425.5,136 2436,152 2415,152" fill="#dde4e8"/><polygon points="2425.5,361 2436,346 2415,346" fill="#dde4e8"/><polygon points="2314,248.5 2329,238 2329,259" fill="#dde4e8"/><polygon points="2538,248.5 2523,238 2523,259" fill="#dde4e8"/><path d="M2394 152 C2375 158 2360 168 2351 182" fill="none" stroke="#dde4e8" stroke-width="8"/><polygon points="2344,170 2346,186 2362,186" fill="#dde4e8"/><path d="M2459 152 C2478 158 2493 168 2501 182" fill="none" stroke="#dde4e8" stroke-width="8"/><polygon points="2507,170 2506,186 2490,186" fill="#dde4e8"/><g stroke="#222" stroke-width="1.3" stroke-linejoin="round"><polygon points="2492.5,334.5 2505.5,339.5 2505.5,354 2492.5,360.5 2479.5,354 2479.5,339.5" fill="#e4e4e4"/><polygon points="2479.500,339.500 2492.500,345 2492.500,360.500 2479.500,354" fill="#9c9c9c"/><polygon points="2492.500,334.500 2505.500,339.500 2492.500,345 2479.500,339.500" fill="#fafafa"/></g><polygon points="2518,345 2530,345 2524,351" fill="#222"/><text x="2354.500" y="214.500" font-family="Liberation Sans,sans-serif" font-size="19" fill="#6a5ae0" stroke="#6a5ae0" stroke-width="0.5">Z</text><text x="2445.500" y="331" font-family="Liberation Sans,sans-serif" font-size="21" fill="#e03c3c" stroke="#e03c3c" stroke-width="0.600">X</text><text x="2409" y="256" font-family="Liberation Sans,sans-serif" font-size="14" fill="#8fd08f">Y</text><text transform="matrix(0.93,0.36,0,1,2386,262)" font-family="Liberation Sans,sans-serif" font-size="18" fill="#444">Front</text><text transform="matrix(0.88,0.32,-0.75,0.42,2417,201)" font-family="Liberation Sans,sans-serif" font-size="15" font-style="italic" fill="#444">Top</text><text transform="matrix(0.55,-0.62,0.05,1,2455,272)" font-family="Liberation Sans,sans-serif" font-size="14" font-style="italic" fill="#555">Right</text></svg>
<div class="a" style="left:0px;top:0px;width:2559px;height:60px;background:#f9f9f9;"></div>
<svg class="a" style="left:0px;top:0px;" width="60" height="60" viewBox="0 0 60 60"><g transform="translate(22,30.2)">
<polygon points="-14.2,-8.2 0,-16.4 5.2,-13.4 -9,-5.2 -9,5.4 -14.2,8.4" fill="#5cb848"/>
<polygon points="3.6,-9.6 14.2,-8.2 14.2,8.2 9,11.2 9,-5 " fill="#5cb848"/>
<polygon points="3.6,-9.6 8,-12.1 14.2,-8.2 9,-5" fill="#5cb848"/>
<polygon points="-14.2,11 -9,8 0.2,13.3 6.6,9.6 6.6,15 0.2,18.4 -14.2,10.4" fill="#5cb848" transform="translate(0,-2)"/>
<polygon points="-6.4,-3.6 0,-7.3 6.2,-3.6 6.2,3.6 0,7.3 -6.4,3.6" fill="none" stroke="#4a4a4a" stroke-width="1.7"/>
<polygon points="-8,0 -3,-1.5 -3,2.5 -8,2" fill="#f9f9f9"/>
<polygon points="1,-9 4,-4 0.5,-2.6 -1,-6" fill="#f9f9f9"/>
<polygon points="2.5,9 6,1 8,3 5,9" fill="#f9f9f9"/>
</g></svg>
<span class="t" style="left:47.8px;top:16.1px;font:normal 400 24px/24px 'Liberation Sans',sans-serif;color:#6a6a6a;transform:scaleX(1.0903);">onshape</span>
<div class="a" style="left:170px;top:22px;width:24px;height:4px;background:#333;"></div>
<div class="a" style="left:170px;top:30.5px;width:24px;height:4px;background:#333;"></div>
<div class="a" style="left:170px;top:39px;width:24px;height:4px;background:#333;"></div>
<span class="t" style="left:211.5px;top:14.2px;font:normal 700 34px/34px 'Liberation Sans',sans-serif;color:#2b2b2b;transform:scaleX(0.9382);">1E - Practice Exercise Solutions</span>
<span class="t" style="left:711.5px;top:23.1px;font:normal 400 23.5px/23.5px 'Liberation Sans',sans-serif;color:#7a7a7a;transform:scaleX(0.9718);">Main</span>
<svg class="a" style="left:774px;top:18px;" width="28" height="28" viewBox="0 0 28 28"><g fill="none" stroke="#333" stroke-width="2.6" stroke-linecap="round">
<path d="M10.5 14.5 l-2.6 2.6 a3.6 3.6 0 0 0 5.1 5.1 l3.2 -3.2 a3.6 3.6 0 0 0 0 -5.1"/>
<path d="M15.5 11.5 l2.6 -2.6 a3.6 3.6 0 0 0 -5.1 -5.1 l-3.2 3.2 a3.6 3.6 0 0 0 0 5.1" transform="translate(2.2,2.2)"/>
</g></svg>
<svg class="a" style="left:813px;top:20px;" width="28" height="24" viewBox="0 0 28 24"><path d="M1.5 3.5 h8.5 l2.5 3 h12.5 a1.5 1.5 0 0 1 1.5 1.5 v12 a1.5 1.5 0 0 1 -1.5 1.5 h-22 a1.5 1.5 0 0 1 -1.5 -1.5 z" fill="none" stroke="#8a8a8a" stroke-width="1.6"/></svg>
<span class="t" style="left:849.0px;top:23.1px;font:normal 400 23.5px/23.5px 'Liberation Sans',sans-serif;color:#8a8a8a;transform:scaleX(0.9443);">Stage 1</span>
<svg class="a" style="left:1035px;top:19px;" width="27" height="23" viewBox="0 0 27 23"><g fill="#1b5bb7"><polygon points="13,1 26,7 13,13 0,7"/><path d="M5.5 10.8 v6.2 c2.5 -1.6 5 -1.6 7.5 0.8 c2.5 -2.4 5 -2.4 7.5 -0.8 v-6.2 l-7.5 3.6z"/>
<path d="M2.2 8.6 v8.4 l-1.2 4.6 h3.6 l-1.2 -4.6 v-7.8z"/></g></svg>
<span class="t" style="left:2026.0px;top:19.0px;font:normal 400 29px/29px 'Liberation Sans',sans-serif;color:#5a5a5a;transform:scaleX(1.0325);-webkit-text-stroke:0.5px #5a5a5a;">{</span>
<span class="t" style="left:2048.0px;top:19.0px;font:normal 400 29px/29px 'Liberation Sans',sans-serif;color:#5a5a5a;transform:scaleX(1.0325);-webkit-text-stroke:0.5px #5a5a5a;">}</span>
<svg class="a" style="left:2034px;top:24px;" width="16" height="16" viewBox="0 0 16 16"><path d="M2 8.5 l4.2 4.2 l8 -9" fill="none" stroke="#5a5a5a" stroke-width="3"/></svg>
<svg class="a" style="left:2078px;top:22px;" width="24" height="25" viewBox="0 0 24 25"><path d="M12 1.5 c-4.6 0 -7.2 3.4 -7.2 8 v5.2 l-3.6 4.6 h21.6 l-3.6 -4.6 v-5.2 c0 -4.6 -2.6 -8 -7.2 -8z M8.6 20.6 a3.5 3.5 0 0 0 6.8 0z" fill="#5e5e5e"/></svg>
<div class="a" style="left:2090.5px;top:9.5px;width:23.5px;height:23px;background:#1b5bb7;border-radius:3px;"></div>
<span class="t" style="left:2093.0px;top:13.1px;font:normal 700 17px/17px 'Liberation Sans',sans-serif;color:#fff;transform:scaleX(0.9803);">9+</span>
<svg class="a" style="left:2126px;top:20px;" width="24" height="26" viewBox="0 0 24 26"><rect x="1.3" y="1.3" width="21.4" height="23.4" rx="2.5" fill="none" stroke="#5a5a5a" stroke-width="2.2"/>
<g stroke="#5a5a5a" stroke-width="2.4"><path d="M12 7.5h8M12 13h8M12 18.5h8"/></g>
<g stroke="#5a5a5a" stroke-width="1.6" fill="none"><path d="M4.5 7.3l1.8 1.8 3.2-3.6M4.5 12.8l1.8 1.8 3.2-3.6M4.5 18.3l1.8 1.8 3.2-3.6"/></g></svg>
<svg class="a" style="left:2172px;top:20px;" width="28" height="27" viewBox="0 0 28 27"><g fill="none" stroke="#5a5a5a" stroke-width="2.4"><rect x="1.5" y="1.5" width="9.5" height="9.5"/><rect x="1.5" y="15.5" width="9.5" height="9.5"/><rect x="15.5" y="15.5" width="9.5" height="9.5"/>
<path d="M20.2 0.5v12M14.2 6.5h12" stroke-width="2.8"/></g></svg>
<svg class="a" style="left:2221px;top:20px;" width="27" height="27" viewBox="0 0 27 27"><path d="M13 0.8 c-6.6 0 -11.5 4.8 -11.5 10.8 c0 4 1.8 6.6 4.3 8.6 v5.6 h11.4 v-3.6 h3.6 c1.4 0 2.2 -0.8 2.2 -2.2 v-3 l2.6 -1 l-2.8 -5 c-0.6 -5.8 -4.6 -10.2 -9.8 -10.2z" fill="#5e5e5e"/>
<g fill="#f9f9f9"><circle cx="10" cy="12.5" r="3.4"/><circle cx="16.8" cy="7" r="2.5"/></g><g fill="#5e5e5e"><circle cx="10" cy="12.5" r="1.3"/><circle cx="16.8" cy="7" r="0.9"/></g></svg>
<div class="a" style="left:2264px;top:4.5px;width:88px;height:48.5px;background:#1b5bb7;border-radius:8px;"></div>
<span class="t" style="left:2282.0px;top:18.8px;font:normal 400 21.5px/21.5px 'Liberation Sans',sans-serif;color:#fff;transform:scaleX(0.9238);-webkit-text-stroke:0.7px #fff;">Share</span>
<div class="a" style="left:2368.5px;top:20px;width:27px;height:27px;background:#5a5a5a;border-radius:50%;"></div>
<span class="t" style="left:2376.0px;top:21.2px;font:normal 700 24px/24px 'Liberation Sans',sans-serif;color:#f9f9f9;transform:scaleX(0.8185);">?</span>
<svg class="a" style="left:2407px;top:30px;" width="12" height="6" viewBox="0 0 12 6"><polygon points="0,0 12,0 6,6" fill="#333"/></svg>
<svg class="a" style="left:2437.5px;top:15px;border-radius:3px;" width="35" height="36" viewBox="0 0 35 36"><rect width="35" height="36" fill="#7d8a7a"/><rect y="0" width="35" height="14" fill="#b8c4c0"/><rect x="0" y="8" width="8" height="16" fill="#56683f"/><rect x="27" y="10" width="8" height="14" fill="#8a8f86"/>
<ellipse cx="17.5" cy="15" rx="9.5" ry="12" fill="#7a6248"/><ellipse cx="17.5" cy="17" rx="6" ry="8" fill="#d3b29c"/>
<path d="M0 36 v-6 c4 -4 10 -5 17.5 -5 s14 1 17.5 5 v6z" fill="#4c5560"/></svg>
<span class="t" style="left:2482.0px;top:21.2px;font:normal 400 20.5px/20.5px 'Liberation Sans',sans-serif;color:#2b2b2b;transform:scaleX(1.0240);-webkit-text-stroke:0.3px #2b2b2b;">Kelly</span>
<svg class="a" style="left:2539.5px;top:27.5px;" width="11" height="5.5" viewBox="0 0 11 5.5"><polygon points="0,0 11,0 5.5,5.5" fill="#333"/></svg>
<div class="a" style="left:0px;top:60px;width:59px;height:1379px;background:#f7f7f7;border-right:1px solid #dcdcdc;border-top:1px solid #e2e2e2;"></div>
<svg class="a" style="left:72px;top:74px;" width="27" height="27" viewBox="0 0 27 27"><path d="M11 2 L2 10 l9 8 v-5 c6 0 9 2.500 9.500 9 c3 -8 0 -15 -9.500 -15z" fill="#222"/></svg>
<svg class="a" style="left:124px;top:74px;" width="27" height="27" viewBox="0 0 27 27"><path d="M16 2 L25 10 l-9 8 v-5 c-6 0 -9 2.500 -9.500 9 c-3 -8 0 -15 9.500 -15z" fill="#9b9b9b"/></svg>
<div class="a" style="left:164.7px;top:68px;width:3px;height:38px;background:#d0d0d0;"></div>
<svg class="a" style="left:180px;top:73px;" width="30" height="30" viewBox="0 0 30 30"><path d="M3.500 23 l2 -6 l14 -14 l4 4 l-14 14z M5.500 17 l4 4" fill="none" stroke="#333" stroke-width="1.600" stroke-linejoin="round"/><path d="M3.500 23 l0.800 -2.600 l1.800 1.800z" fill="#333"/><path d="M1 26.500 h27" stroke="#2a62c0" stroke-width="1.400"/></svg>
<span class="t" style="left:216.5px;top:77.6px;font:normal 400 20.5px/20.5px 'Liberation Sans',sans-serif;color:#2b2b2b;transform:scaleX(1.0052);-webkit-text-stroke:0.3px #2b2b2b;">Sketch</span>
<div class="a" style="left:297.5px;top:68px;width:3px;height:38px;background:#d0d0d0;"></div>
<svg class="a" style="left:313.0px;top:72.5px;" width="30" height="30" viewBox="-1 -1 30 30"><g stroke-linejoin="round" stroke-linecap="round"><path d="M1 4 l3 -3 h20 l3 3 v20 h-20 l-6 -4z" fill="#fff" stroke="#333" stroke-width="1.6"/><path d="M1 4 h5 v17 M6 4 l-2 -3" fill="none" stroke="#888" stroke-width="1"/>
<path d="M10 12 l3 -3 h14 v18 h-14 l-3 -3z" fill="#999" stroke="#555" stroke-width="1.4"/><path d="M10 12 h14 l3 -3 M24 12 v15" fill="none" stroke="#666" stroke-width="1"/></g></svg>
<svg class="a" style="left:364.0px;top:72.5px;" width="30" height="30" viewBox="-1 -1 30 30"><g stroke-linejoin="round" stroke-linecap="round"><path d="M24 8 A12.5 12.5 0 1 0 24 22 c-2.5 1 -6 -1 -7.5 -4.5 h-6 v-5 h6 c1.500 -3.5 5 -5.500 7.5 -4.500z" fill="#999" stroke="#333" stroke-width="1.6"/>
<ellipse cx="20.8" cy="9.6" rx="4.2" ry="2.6" transform="rotate(-35 20.8 9.6)" fill="#fff" stroke="#333" stroke-width="1.3"/><ellipse cx="20.8" cy="20.4" rx="4.2" ry="2.6" transform="rotate(35 20.8 20.4)" fill="#fff" stroke="#333" stroke-width="1.3"/>
<circle cx="14" cy="15" r="2.6" fill="#fff"/><path d="M1 15 h5 M10 15 h3 M16 15 h5 M23 15 h5" stroke="#333" stroke-width="1.3" fill="none"/></g></svg>
<svg class="a" style="left:415.0px;top:72.5px;" width="30" height="30" viewBox="-1 -1 30 30"><g stroke-linejoin="round" stroke-linecap="round"><path d="M2 24 c-1 -9 3 -13 9 -13.500 c5 -0.500 8 -1.500 9 -6.500 l7.800 1.500 c-0.500 8 -5 12.500 -11.800 13.500 c-3.500 0.500 -4.500 2 -4.500 6 c-3 2.500 -7 2.500 -9.500 -1z" fill="#999" stroke="#333" stroke-width="1.6"/>
<ellipse cx="23.900" cy="4.200" rx="4" ry="2.700" fill="#fff" stroke="#333" stroke-width="1.400"/></g></svg>
<svg class="a" style="left:466.0px;top:72.5px;" width="30" height="30" viewBox="-1 -1 30 30"><g stroke-linejoin="round" stroke-linecap="round"><path d="M7 3.500 c0 8 -1.500 15 -6 21.500 l7 1 l6 2 l6 -2 l7 -1 c-4.500 -6.500 -6 -13.500 -6 -21.500z" fill="#999" stroke="#333" stroke-width="1.600"/><ellipse cx="14" cy="3.700" rx="7" ry="2.900" fill="#fff" stroke="#333" stroke-width="1.400"/></g></svg>
<svg class="a" style="left:517.0px;top:72.5px;" width="30" height="30" viewBox="-1 -1 30 30"><g stroke-linejoin="round" stroke-linecap="round"><path d="M1 7 c5 -2 8 -2 12 -4 c4 -2 8 -2 11 0 l3 4 v14 c-4 -2 -8 -1 -11 1 c-3 2 -6 3 -9 4 l-6 -5z" fill="#999" stroke="#333" stroke-width="1.600"/>
<path d="M1 7 l6 4 c4 -1 7 -2.500 10 -4 c3 -1.500 6 -1.500 10 0 M7 11 v15" fill="none" stroke="#333" stroke-width="1.300"/><path d="M1 7 c5 -2 8 -2 12 -4 c4 -2 8 -2 11 0 l3 4 c-4 -1.500 -7 -1.500 -10 0 c-3 1.500 -6 3 -10 4z" fill="#fff" stroke="#333" stroke-width="1.300"/>
<path d="M11.500 13.500 h11 l-5.500 8z" fill="#fff" stroke="#fff" stroke-width="2"/><path d="M15.600 6 h2.800 v7.500 h3.800 l-5.200 6.500 l-5.200 -6.500 h3.800z" fill="#222"/></g></svg>
<svg class="a" style="left:560px;top:81px;" width="18" height="12" viewBox="0 0 18 12"><path d="M2.5 2.5 L9 9 L15.5 2.5" fill="none" stroke="#333" stroke-width="2.8"/></svg>
<div class="a" style="left:586.0px;top:68px;width:3px;height:38px;background:#d0d0d0;"></div>
<svg class="a" style="left:601.0px;top:72.5px;" width="30" height="30" viewBox="-1 -1 30 30"><g stroke-linejoin="round" stroke-linecap="round"><path d="M1 12 c0 -6 4 -11 11 -11 h11 l4 4 v22 h-21 l-5 -4z" fill="#fff" stroke="#333" stroke-width="1.600"/><path d="M1 12 c0 -6 4 -11 11 -11 l5 4.500 c-6 0 -10 4.500 -10 10.500z" fill="#999" stroke="#333" stroke-width="1.300"/><path d="M17 5.500 h10 M7 16 v11" fill="none" stroke="#777" stroke-width="1"/></g></svg>
<svg class="a" style="left:644px;top:81px;" width="18" height="12" viewBox="0 0 18 12"><path d="M2.5 2.5 L9 9 L15.5 2.5" fill="none" stroke="#333" stroke-width="2.8"/></svg>
<svg class="a" style="left:679.0px;top:72.5px;" width="30" height="30" viewBox="-1 -1 30 30"><g stroke-linejoin="round" stroke-linecap="round"><path d="M1 11 l10 -10 h12 l4 4 v22 h-21 l-5 -4z" fill="#fff" stroke="#333" stroke-width="1.600"/><path d="M1 11 l10 -10 l5 4.500 l-10 10.500z" fill="#999" stroke="#333" stroke-width="1.300"/><path d="M16 5.500 h11 M6 16 v11" fill="none" stroke="#777" stroke-width="1"/></g></svg>
<svg class="a" style="left:730.0px;top:72.5px;" width="30" height="30" viewBox="-1 -1 30 30"><g stroke-linejoin="round" stroke-linecap="round"><path d="M12 1 h12 l3 3 v23 h-21 l-5 -4z" fill="#999" stroke="#333" stroke-width="1.600"/><path d="M12 1 h12 l3 3 h-12z" fill="#fff" stroke="#333" stroke-width="1.300"/><path d="M15 4 l-9 23" stroke="#666" stroke-width="1" fill="none"/></g></svg>
<svg class="a" style="left:773px;top:81px;" width="18" height="12" viewBox="0 0 18 12"><path d="M2.5 2.5 L9 9 L15.5 2.5" fill="none" stroke="#333" stroke-width="2.8"/></svg>
<svg class="a" style="left:808.0px;top:72.5px;" width="30" height="30" viewBox="-1 -1 30 30"><g stroke-linejoin="round" stroke-linecap="round"><path d="M1 16 h6 l10 -15 h6 l4 4 v22 h-21 l-5 -4z" fill="#fff" stroke="#333" stroke-width="1.600"/><path d="M7 16 l10 -11 v3 l3 3 v12 h-9 l-4 -3z" fill="#999" stroke="#333" stroke-width="1.200"/><path d="M17 1 l4 4 h6 M21 5 v15 h-10 M1 16 l5 4.500 v6.500 M6 20.500 h5" fill="none" stroke="#333" stroke-width="1.200"/></g></svg>
<svg class="a" style="left:859.0px;top:72.5px;" width="30" height="30" viewBox="-1 -1 30 30"><g stroke-linejoin="round" stroke-linecap="round"><path d="M1 1 h22 l4 4 v22 h-22 l-4 -4z" fill="#fff" stroke="#333" stroke-width="1.600"/><path d="M1 1 l4 4 h22 M5 5 v22" fill="none" stroke="#333" stroke-width="1.200"/><path d="M9 5 h11 v17 h-11z" fill="#999" stroke="#333" stroke-width="1.300"/><path d="M9 5 l3 0 v14 h8" fill="none" stroke="#666" stroke-width="1"/></g></svg>
<svg class="a" style="left:910.0px;top:72.5px;" width="30" height="30" viewBox="-1 -1 30 30"><g stroke-linejoin="round" stroke-linecap="round"><path d="M1 1 h22 l4 4 v22 h-22 l-4 -4z" fill="#fff" stroke="#333" stroke-width="1.600"/><path d="M1 1 l4 4 h22 M5 5 v22" fill="none" stroke="#333" stroke-width="1.200"/><circle cx="16.500" cy="16.500" r="8" fill="#999" stroke="#333" stroke-width="1.400"/><circle cx="15" cy="14.500" r="4.300" fill="#ccc" stroke="#333" stroke-width="1.200"/></g></svg>
<svg class="a" style="left:961.0px;top:72.5px;" width="30" height="30" viewBox="-1 -1 30 30"><g stroke-linejoin="round" stroke-linecap="round"><path d="M5.500 5 v19 a8.500 3.400 0 0 0 17 0 v-19z" fill="#fff" stroke="#333" stroke-width="1.500"/><path d="M5.500 5 v13 a8.500 3.400 0 0 0 17 0 v-13z" fill="#999" stroke="#333" stroke-width="1.300"/><ellipse cx="14" cy="5" rx="8.500" ry="3.400" fill="#fff" stroke="#333" stroke-width="1.500"/>
<path d="M5.500 9.500 a8.500 3.400 0 0 0 17 0 M5.500 13.500 a8.500 3.400 0 0 0 17 0" fill="none" stroke="#333" stroke-width="1.400"/></g></svg>
<div class="a" style="left:1003.1px;top:68px;width:3px;height:38px;background:#d0d0d0;"></div>
<svg class="a" style="left:1018.0px;top:72.5px;" width="30" height="30" viewBox="-1 -1 30 30"><g stroke-linejoin="round" stroke-linecap="round"><g stroke="#333" stroke-width="1.500"><path d="M1 4 l2 -2 h9 l2 2 v9 h-11 l-2 -2z" fill="#fff"/><path d="M14 3 l2 -2 h9 l2 2 v10 h-11 l-2 -2z" fill="#999"/><path d="M1 17 l2 -2 h9 l2 2 v10 h-11 l-2 -2z" fill="#999"/><path d="M14 17 l2 -2 h9 l2 2 v10 h-11 l-2 -2z" fill="#999"/></g>
<g stroke="#555" stroke-width="1" fill="none"><path d="M1 4 h11 v9 M14 3 h2 v10 M16 3 h11 M3 17 v10 M3 17 h11 M16 17 v10 M16 17 h11"/></g></g></svg>
<svg class="a" style="left:1061px;top:81px;" width="18" height="12" viewBox="0 0 18 12"><path d="M2.5 2.5 L9 9 L15.5 2.5" fill="none" stroke="#333" stroke-width="2.8"/></svg>
<svg class="a" style="left:1095.0px;top:72.5px;" width="30" height="30" viewBox="-1 -1 30 30"><g stroke-linejoin="round" stroke-linecap="round"><path d="M1 4 l3 -3 h5 l3 3 v9 l3 3 v11 h-10 l-4 -4z" fill="#fff" stroke="#333" stroke-width="1.500"/><path d="M1 4 h4 l3 3 v9 h3 M5 4 l0 0 M12 4 l-4 3" fill="none" stroke="#777" stroke-width="1"/>
<path d="M10 2 l8 8 v12 l-8 -6z" fill="#ccc" opacity="0.9"/><path d="M27 4 l-3 -3 h-5 v12 l-3 3 v11 h11z" fill="#999" stroke="#333" stroke-width="1.500"/><path d="M19 1 l3 3 v9 l-3 3 v11" fill="none" stroke="#555" stroke-width="1"/></g></svg>
<div class="a" style="left:1137.2px;top:68px;width:3px;height:38px;background:#d0d0d0;"></div>
<svg class="a" style="left:1152.0px;top:72.5px;" width="30" height="30" viewBox="-1 -1 30 30"><g stroke-linejoin="round" stroke-linecap="round"><circle cx="9.500" cy="15" r="8.500" fill="#fff" stroke="#333" stroke-width="1.600"/><circle cx="18.500" cy="15" r="8.500" fill="#999" stroke="#333" stroke-width="1.600"/><circle cx="9.500" cy="15" r="8.500" fill="none" stroke="#333" stroke-width="1.600"/></g></svg>
<svg class="a" style="left:1203.0px;top:72.5px;" width="30" height="30" viewBox="-1 -1 30 30"><g stroke-linejoin="round" stroke-linecap="round"><path d="M1 2 h23 l3 3 v21 h-22 l-4 -4z" fill="#fff" stroke="#333" stroke-width="1.500"/><path d="M1 2 l4 4 h22 M5 6 v20" fill="none" stroke="#333" stroke-width="1.200"/><path d="M0 13 c3 3 4 4 7 5 c5 1 8 -3 13 -3 c4 0 6 0 9 -1" fill="none" stroke="#bbb" stroke-width="2.200"/></g></svg>
<svg class="a" style="left:1255.0px;top:72.5px;" width="30" height="30" viewBox="-1 -1 30 30"><g stroke-linejoin="round" stroke-linecap="round"><path d="M1 15 l3 -2 h9 v12 l-3 2 h-9z" fill="#fff" stroke="#333" stroke-width="1.500"/><path d="M1 15 h9 v12 M10 15 l3 -2" fill="none" stroke="#333" stroke-width="1.100"/>
<path d="M19 1 l7 6 l-6 7 l-7 -6z" fill="#999" stroke="#333" stroke-width="1.500"/><path d="M13 8 l6 -1 l7 0 M19 7 l1 7" fill="none" stroke="#555" stroke-width="1"/>
<path d="M4 11 c0 -5 2 -8 6 -9" fill="none" stroke="#333" stroke-width="1.800"/><polygon points="8,0 14,1 10,5.500" fill="#333"/><path d="M26 16 c0 4 -2 7 -5 8.500" fill="none" stroke="#333" stroke-width="1.800"/><polygon points="23,27 17,26.500 20.500,21.500" fill="#333"/></g></svg>
<svg class="a" style="left:1298px;top:81px;" width="18" height="12" viewBox="0 0 18 12"><path d="M2.5 2.5 L9 9 L15.5 2.5" fill="none" stroke="#333" stroke-width="2.8"/></svg>
<svg class="a" style="left:1333.0px;top:72.5px;" width="30" height="30" viewBox="-1 -1 30 30"><g stroke-linejoin="round" stroke-linecap="round"><path d="M2 2 h19 l2 2 v17 h-19 l-2 -2z" fill="#aaa"/><path d="M2 2 l3 3 v16 M5 5 h17" stroke="#888" fill="none" stroke-width="1"/><circle cx="19.500" cy="20" r="7.500" fill="#222"/><path d="M16.300 16.800 l6.400 6.400 M22.700 16.800 l-6.400 6.400" stroke="#fff" stroke-width="2.200"/></g></svg>
<div class="a" style="left:1374.9px;top:68px;width:3px;height:38px;background:#d0d0d0;"></div>
<svg class="a" style="left:1389.0px;top:72.5px;" width="30" height="30" viewBox="-1 -1 30 30"><g stroke-linejoin="round" stroke-linecap="round"><path d="M1 20 c1 -11 7 -18 17 -19 l5 4 l-8 6 l-2 14 c-4 2 -8 0 -12 -5z" fill="#999"/><path d="M13 14 c5 -3 9 -5 13 -6 l2 5 c-5 2 -8 5 -11 12 l-6 -2 c0 -3 1 -6 2 -9z" fill="#fff" stroke="#333" stroke-width="1.400"/>
<path d="M9.500 7 l8.500 2 l-3 2 l3.500 4 l-2.200 2 l-3.500 -4 l-2.500 2.500z" fill="#222"/></g></svg>
<svg class="a" style="left:1441.0px;top:72.5px;" width="30" height="30" viewBox="-1 -1 30 30"><g stroke-linejoin="round" stroke-linecap="round"><path d="M0 5 c5 0 8 -3 14 -4 c3 0 5 1 7 3 l5 9 l-8 2 l-8 5 c-3 -6 -6 -11 -10 -15z" fill="#999"/><circle cx="19.500" cy="20" r="7.500" fill="#222"/><path d="M16.300 16.800 l6.400 6.400 M22.700 16.800 l-6.400 6.400" stroke="#fff" stroke-width="2.200"/></g></svg>
<svg class="a" style="left:1492.0px;top:72.5px;" width="30" height="30" viewBox="-1 -1 30 30"><g stroke-linejoin="round" stroke-linecap="round"><path d="M1 15 l5 -4 c4 2 8 1 12 -1 l4 -1 l5 6 v9 h-21 l-5 -4z" fill="#fff" stroke="#333" stroke-width="1.500"/><path d="M1 15 l5 -4 c4 2 8 1 12 -1 l4 -1 l5 6 c-6 -1 -9 0 -12 2 c-3 2 -5 2 -9 2z" fill="#999" stroke="#333" stroke-width="1.200"/><path d="M6 19 v8" stroke="#333" stroke-width="1.200"/>
<path d="M12.500 14 v-8 h-3 l4.500 -6 l4.500 6 h-3 v8z" fill="#222" stroke="#fff" stroke-width="0.800"/></g></svg>
<svg class="a" style="left:1543.0px;top:72.5px;" width="30" height="30" viewBox="-1 -1 30 30"><g stroke-linejoin="round" stroke-linecap="round"><path d="M3 4 c5 0 9 -1 13 -3 c3 -1 5 0 7 2 l4 6 c-5 0 -8 1 -11 3 c-2 1 -4 1 -6 0z" fill="#999"/><path d="M1 16 l5 -3 h21 v10 l-4 4 h-17 l-5 -4z" fill="#fff" stroke="#333" stroke-width="1.500"/><path d="M1 16 l5 3 h17 l4 -6 M6 19 v8 M23 19 v8" fill="none" stroke="#333" stroke-width="1.200"/></g></svg>
<div class="a" style="left:1584.3px;top:68px;width:3px;height:38px;background:#d0d0d0;"></div>
<svg class="a" style="left:1600.0px;top:72.5px;" width="30" height="30" viewBox="-1 -1 30 30"><g stroke-linejoin="round" stroke-linecap="round"><path d="M1 2 l25 4 v21 l-25 -4z" fill="#ddd" stroke="#333" stroke-width="1.600"/><path d="M13 4 v11 l13 2" fill="none" stroke="#333" stroke-width="1.600"/></g></svg>
<svg class="a" style="left:1650.0px;top:72.5px;" width="30" height="30" viewBox="-1 -1 30 30"><g stroke-linejoin="round" stroke-linecap="round"><path d="M14 2 l6 -1 l5 8 l2 9 l-5 8 l-4 -3z" fill="#999"/><path d="M2 10 l5 -6 h8 l-2 6 l2 16 h-13z" fill="#fff" stroke="#333" stroke-width="1.500"/><path d="M2 10 h9 l4 -6 M11 10 l1.500 16" fill="none" stroke="#333" stroke-width="1.200"/></g></svg>
<svg class="a" style="left:1694px;top:81px;" width="18" height="12" viewBox="0 0 18 12"><path d="M2.5 2.5 L9 9 L15.5 2.5" fill="none" stroke="#333" stroke-width="2.8"/></svg>
<svg class="a" style="left:1728.0px;top:72.5px;" width="30" height="30" viewBox="-1 -1 30 30"><g stroke-linejoin="round" stroke-linecap="round"><g fill="none" stroke="#333" stroke-width="2"><path d="M25 5 c-2 -3 -20 -3 -21 2 c-1 5 22 3 22 6 c0 4 -22 3 -22 6 c0 4 22 2 22 5 c0 3 -20 3 -21 -1 M5 23 c-1 1 -2 2 -3 3.500"/></g><ellipse cx="19" cy="4.500" rx="4" ry="1.500" fill="#999" stroke="#333" stroke-width="1"/></g></svg>
<svg class="a" style="left:1772px;top:81px;" width="18" height="12" viewBox="0 0 18 12"><path d="M2.5 2.5 L9 9 L15.5 2.5" fill="none" stroke="#333" stroke-width="2.8"/></svg>
<svg class="a" style="left:1807.0px;top:72.5px;" width="30" height="30" viewBox="-1 -1 30 30"><g stroke-linejoin="round" stroke-linecap="round"><circle cx="14" cy="14" r="12.500" fill="none" stroke="#333" stroke-width="1.500"/><circle cx="14" cy="14" r="9.500" fill="#fff" stroke="#333" stroke-width="1.500"/><path d="M14 4.500 v9.500 h9.500 a9.500 9.500 0 0 0 -9.500 -9.500z" fill="#ddd" stroke="#333" stroke-width="1.500"/></g></svg>
<svg class="a" style="left:1858.0px;top:72.5px;" width="30" height="30" viewBox="-1 -1 30 30"><g stroke-linejoin="round" stroke-linecap="round"><path d="M2 16 l6 -4 h6 v-8 l3 -3 h7 l3 3 v23 h-19 l-6 -4z" fill="#fff" stroke="#333" stroke-width="1.500"/><path d="M2 16 l6 4.500 h8 v-13 h11 M8 20.500 v6.500 M16 7.500 l-2 -3.500 M16 20.500 l4 -4" fill="none" stroke="#333" stroke-width="1.100"/><path d="M16 8 l8 8 l3 -11z" fill="#ddd" opacity="0.7"/>
<path d="M2 3 h5 c4 0 6 2 6 6" fill="none" stroke="#222" stroke-width="2"/><polygon points="8.500,8.500 17.500,8.500 13,14" fill="#222"/></g></svg>
<span class="t" style="left:1909.0px;top:74.0px;font:normal 700 26px/26px 'Liberation Sans',sans-serif;color:#222;transform:scaleX(0.7506);">(</span>
<span class="t" style="left:1932.5px;top:74.0px;font:normal 700 26px/26px 'Liberation Sans',sans-serif;color:#222;transform:scaleX(0.7506);">)</span>
<span class="t" style="left:1915.5px;top:72.0px;font:italic 700 28px/28px 'Liberation Serif',serif;color:#222;transform:scaleX(1.2143);">x</span>
<svg class="a" style="left:1960.0px;top:72.5px;" width="30" height="30" viewBox="-1 -1 30 30"><g stroke-linejoin="round" stroke-linecap="round"><g fill="#fff" stroke="#333" stroke-width="1.300"><path d="M14 1 l5.500 2.600 v6 l-5.500 2.600 l-5.500 -2.600 v-6z"/><path d="M8.500 3.600 l5.500 2.600 l5.500 -2.600 M14 6.200 v6"/>
<path d="M7.500 13.500 l5.500 2.600 v6 l-5.500 2.600 l-5.500 -2.600 v-6z"/><path d="M2 16.100 l5.500 2.600 l5.500 -2.600 M7.500 18.700 v6"/>
<path d="M20.500 13.500 l5.500 2.600 v6 l-5.500 2.600 l-5.500 -2.600 v-6z"/><path d="M15 16.100 l5.500 2.600 l5.500 -2.600 M20.500 18.700 v6"/></g></g></svg>
<div class="a" style="left:2002.1px;top:68px;width:3px;height:38px;background:#d0d0d0;"></div>
<svg class="a" style="left:2016.0px;top:72.5px;" width="30" height="30" viewBox="-1 -1 30 30"><g stroke-linejoin="round" stroke-linecap="round"><path d="M2 3 h7 v14 c0 2 1 3 3 3 h3 c2 0 3 -1 3 -3 v-16 h3 l6 6 v15 c0 4 -2 6 -6 6 h-9 c-2 0 -4 -1 -6 -3 l-4 -4z" fill="#ccc" stroke="#333" stroke-width="1.600"/><path d="M2 3 l4 4 v16 c0 2 1 4 4 4 M9 17 l4 3 M18 17 l7 6 M21 1 v17" fill="none" stroke="#666" stroke-width="1"/><path d="M9 17 c0 2 1 3 3 3 h3 l8 7 h-9 c-3 0 -5 -2 -5 -5z" fill="#e8e8e8" stroke="#666" stroke-width="0.800"/></g></svg>
<svg class="a" style="left:2060px;top:81px;" width="18" height="12" viewBox="0 0 18 12"><path d="M2.5 2.5 L9 9 L15.5 2.5" fill="none" stroke="#333" stroke-width="2.8"/></svg>
<div class="a" style="left:2086.1px;top:68px;width:3px;height:38px;background:#d0d0d0;"></div>
<svg class="a" style="left:2101.0px;top:72.5px;" width="30" height="30" viewBox="-1 -1 30 30"><g stroke-linejoin="round" stroke-linecap="round"><path d="M3 1 h15 c5 0 8 3 8 7 v4 h-9 v7 h9 v8 h-13 c-4 0 -6 -1 -8 -3 l-4 -4 v-17z" fill="#999" stroke="#333" stroke-width="1.600"/><path d="M1 3 l2 -2 h15 c5 0 8 3 8 7 h-16 c-3 0 -5 -2 -9 -5z" fill="#ddd" stroke="#333" stroke-width="1.100"/><path d="M10 8 v15 c0 3 1 4 3 4 M17 12 l-4 0 v10 h4" fill="none" stroke="#555" stroke-width="1"/></g></svg>
<svg class="a" style="left:2144px;top:81px;" width="18" height="12" viewBox="0 0 18 12"><path d="M2.5 2.5 L9 9 L15.5 2.5" fill="none" stroke="#333" stroke-width="2.8"/></svg>
<div class="a" style="left:2170.3px;top:68px;width:3px;height:38px;background:#d0d0d0;"></div>
<span class="t" style="left:2185.0px;top:70.5px;font:italic 400 34px/34px 'Liberation Serif',serif;color:#111;transform:scaleX(1.1928);">x</span>
<span class="t" style="left:2201.0px;top:68.4px;font:normal 400 22px/22px 'Liberation Sans',sans-serif;color:#111;transform:scaleX(1.0897);">+</span>
<svg class="a" style="left:2228px;top:81px;" width="18" height="12" viewBox="0 0 18 12"><path d="M2.5 2.5 L9 9 L15.5 2.5" fill="none" stroke="#333" stroke-width="2.8"/></svg>
<div class="a" style="left:2269px;top:63px;width:240px;height:47.5px;background:#eeeeee;border-radius:6px;"></div>
<span class="t" style="left:2284.5px;top:77.6px;font:normal 400 19.7px/19.7px 'Liberation Sans',sans-serif;color:#2b2b2b;transform:scaleX(1.0284);-webkit-text-stroke:0.3px #2b2b2b;">Search tools...</span>
<div class="a" style="left:2419.5px;top:75.5px;width:48px;height:27px;border:1px solid #bdbdbd;border-bottom-width:2px;border-radius:4px;box-sizing:border-box;background:#f0f0f0;"></div>
<div class="a" style="left:2469.5px;top:75.5px;width:24px;height:27px;border:1px solid #bdbdbd;border-bottom-width:2px;border-radius:4px;box-sizing:border-box;background:#f0f0f0;"></div>
<span class="t" style="left:2424.0px;top:81.0px;font:normal 400 16.5px/16.5px 'Liberation Sans',sans-serif;color:#444;transform:scaleX(1.0904);">alt/</span>
<svg class="a" style="left:2448px;top:83px;" width="16" height="12" viewBox="0 0 16 12"><path d="M0.500 2.500 h4.500 l5 8 h5 M10 2.500 h5" fill="none" stroke="#444" stroke-width="1.300"/></svg>
<span class="t" style="left:2477.5px;top:81.0px;font:normal 400 16.5px/16.5px 'Liberation Sans',sans-serif;color:#444;transform:scaleX(0.9697);">c</span>
<div class="a" style="left:60px;top:114px;width:308px;height:1279px;background:#fff;border-top:1px solid #d8d8d8;border-right:1px solid #d8d8d8;border-bottom:1px solid #d8d8d8;"></div>
<svg class="a" style="left:15px;top:73px;" width="32" height="30" viewBox="0 0 32 30"><g fill="none" stroke="#222" stroke-width="2.600"><path d="M13 5 h18 M16 12 h15 M13 19 h18 M16 26 h15" /><circle cx="6.500" cy="5.500" r="3.500" stroke-width="2.200"/><path d="M6.500 9 v13 M6.500 22 c0 -5 3 -8 8 -9" stroke-width="2.200"/></g><circle cx="6.500" cy="24" r="3" fill="#222"/><circle cx="15.500" cy="12.500" r="3" fill="#222"/></svg>
<svg class="a" style="left:16px;top:126px;" width="32" height="30" viewBox="0 0 32 30"><path d="M8 0 v28" stroke="#222" stroke-width="2.200" stroke-dasharray="2.500 2.500" fill="none"/><circle cx="8" cy="14" r="4.500" fill="#222"/><path d="M22 14.500 v12 M16 20.500 h12" stroke="#1b5bb7" stroke-width="2.800"/></svg>
<svg class="a" style="left:15px;top:178px;" width="31" height="27" viewBox="0 0 31 27"><ellipse cx="15.500" cy="10.500" rx="14.500" ry="10" fill="#2b2b2b"/><path d="M6 16 c0 4 -2 7 -5 9 c5 0 9 -2 12 -6z" fill="#2b2b2b"/></svg>
<svg class="a" style="left:15px;top:229px;" width="32" height="30" viewBox="0 0 32 30"><g fill="none" stroke="#2b2b2b" stroke-width="2.600"><circle cx="17.500" cy="17" r="10.500"/><path d="M13.500 2 h8 M17.500 2 v4 M25 7 l2 -2" /><path d="M17.500 17 l4 -4.500" stroke-width="2"/><path d="M3 10.500 h6 M1 15 h6 M3 19.500 h4" stroke-width="1.400"/></g></svg>
<div class="a" style="left:0px;top:271px;width:59px;height:2px;background:#dcdcdc;"></div>
<svg class="a" style="left:17px;top:285px;" width="26" height="28" viewBox="0 0 26 28"><rect x="1.500" y="1.500" width="23" height="25" rx="2.500" fill="none" stroke="#222" stroke-width="2.400"/><g stroke="#222" stroke-width="2.400"><path d="M13 8h8M13 14h8M13 20h8"/></g><g stroke="#222" stroke-width="1.600" fill="none"><path d="M5 7.800l1.800 1.800 3.200-3.600M5 13.800l1.800 1.800 3.200-3.600M5 19.800l1.800 1.800 3.200-3.600"/></g></svg>
<svg class="a" style="left:17px;top:1406px;" width="28" height="26" viewBox="0 0 28 26"><path d="M1 1.500 h17 v5 M9 15 h-3 l-4 4 v-4 h-1z" fill="#2b2b2b"/><rect x="1" y="1.500" width="17" height="12" fill="#2b2b2b"/><circle cx="17" cy="13.500" r="6.500" fill="#f7f7f7" stroke="#2b2b2b" stroke-width="2.600"/><path d="M21.500 18.500 l5 5.500" stroke="#2b2b2b" stroke-width="3.400"/></svg>
<svg class="a" style="left:76px;top:137px;" width="24" height="26" viewBox="0 0 24 26"><path d="M1.500 1.500 h21 l-8.500 10.500 v11 l-4 -3 v-8z" fill="none" stroke="#222" stroke-width="1.700" stroke-linejoin="round"/></svg>
<div class="a" style="left:119px;top:126px;width:237px;height:43.5px;border:1px solid #b5b5b5;border-radius:4px;box-sizing:border-box;background:#fff;"></div>
<span class="t" style="left:128.5px;top:139.1px;font:italic 400 19.5px/19.5px 'Liberation Sans',sans-serif;color:#b0b0b0;transform:scaleX(0.9794);">Filter by name or type</span>
<span class="t" style="left:66.3px;top:183.0px;font:normal 400 20.8px/20.8px 'Liberation Sans',sans-serif;color:#2b2b2b;transform:scaleX(0.9459);-webkit-text-stroke:0.6px #2b2b2b;">Features (21)</span>
<svg class="a" style="left:263px;top:181px;" width="30" height="26" viewBox="0 0 30 26"><path d="M1.500 19 v-16.500 h8 l2.500 3 h14.500 v18.500 h-15" fill="none" stroke="#2b2b2b" stroke-width="1.600"/><path d="M1.500 21 v3 h3" fill="none" stroke="#2b2b2b" stroke-width="1.600"/><path d="M8 10.500 v11 M2.500 16 h11" stroke="#1b5bb7" stroke-width="2.800"/></svg>
<svg class="a" style="left:309px;top:179px;" width="28" height="30" viewBox="0 0 28 30"><g fill="none" stroke="#2b2b2b" stroke-width="2.700"><circle cx="14" cy="17.500" r="10.500"/><path d="M10 2 h8 M14 2 v5 M22 8 l2.200 -2.200"/><path d="M14 17.500 l4.500 4.500" stroke-width="1.800"/></g></svg>
<div class="a" style="left:74px;top:254px;width:1.5px;height:156px;background:#d2d2d2;"></div>
<div class="a" style="left:67px;top:409.5px;width:15px;height:1.5px;background:#d2d2d2;"></div>
<svg class="a" style="left:66px;top:229px;" width="18" height="12" viewBox="0 0 18 12"><path d="M2 2.500 L9 9.500 L16 2.500" fill="none" stroke="#555" stroke-width="2.800"/></svg>
<span class="t" style="left:95.4px;top:225.8px;font:normal 400 19px/19px 'Liberation Sans',sans-serif;color:#2b2b2b;transform:scaleX(1.0471);-webkit-text-stroke:0.25px #2b2b2b;">Default geometry</span>
<svg class="a" style="left:102px;top:267.5px;" width="13" height="13" viewBox="0 0 13 13"><circle cx="6.500" cy="6.500" r="5" fill="none" stroke="#444" stroke-width="1.300"/><circle cx="6.500" cy="6.500" r="2.200" fill="#444"/></svg>
<span class="t" style="left:128.0px;top:264.8px;font:normal 400 19px/19px 'Liberation Sans',sans-serif;color:#2b2b2b;transform:scaleX(1.0141);-webkit-text-stroke:0.25px #2b2b2b;">Origin</span>
<svg class="a" style="left:98px;top:301px;" width="24" height="24" viewBox="0 0 24 24"><path d="M1 1.500 l21 3.500 v17.500 l-21 -3.500z" fill="#e6e6e6" stroke="#b0b0b0" stroke-width="1.500"/><path d="M11 3.200 v9.300 l11 1.800" fill="none" stroke="#b0b0b0" stroke-width="1.500"/></svg>
<span class="t" style="left:128.7px;top:303.8px;font:normal 400 19px/19px 'Liberation Sans',sans-serif;color:#9a9a9a;transform:scaleX(1.0348);-webkit-text-stroke:0.15px #9a9a9a;">Top</span>
<svg class="a" style="left:98px;top:340px;" width="24" height="24" viewBox="0 0 24 24"><path d="M1 1.500 l21 3.500 v17.500 l-21 -3.500z" fill="#e6e6e6" stroke="#b0b0b0" stroke-width="1.500"/><path d="M11 3.200 v9.300 l11 1.800" fill="none" stroke="#b0b0b0" stroke-width="1.500"/></svg>
<span class="t" style="left:128.7px;top:342.8px;font:normal 400 19px/19px 'Liberation Sans',sans-serif;color:#9a9a9a;transform:scaleX(1.0395);-webkit-text-stroke:0.15px #9a9a9a;">Front</span>
<svg class="a" style="left:98px;top:379px;" width="24" height="24" viewBox="0 0 24 24"><path d="M1 1.500 l21 3.500 v17.500 l-21 -3.500z" fill="#e6e6e6" stroke="#b0b0b0" stroke-width="1.500"/><path d="M11 3.200 v9.300 l11 1.800" fill="none" stroke="#b0b0b0" stroke-width="1.500"/></svg>
<span class="t" style="left:128.7px;top:381.8px;font:normal 400 19px/19px 'Liberation Sans',sans-serif;color:#9a9a9a;transform:scaleX(1.0078);-webkit-text-stroke:0.15px #9a9a9a;">Right</span>
<svg class="a" style="left:69px;top:421px;" width="12" height="18" viewBox="0 0 12 18"><path d="M2.500 2 L9.500 9 L2.500 16" fill="none" stroke="#555" stroke-width="2.800"/></svg>
<svg class="a" style="left:99px;top:419px;" width="22" height="23" viewBox="0 0 22 23"><g fill="none" stroke="#a0a0a0" stroke-width="1.400" stroke-linejoin="round"><path d="M11 1 l9.500 4.500 v11.500 l-9.500 5 l-9.500 -5 v-11.500z"/><path d="M1.500 5.500 l9.500 5 l9.500 -5 M11 10.500 v11.500"/></g></svg>
<span class="t" style="left:129.5px;top:420.8px;font:normal 400 19px/19px 'Liberation Sans',sans-serif;color:#9a9a9a;transform:scaleX(1.0001);-webkit-text-stroke:0.15px #9a9a9a;">Origin Cube</span>
<svg class="a" style="left:294px;top:416px;" width="12" height="28" viewBox="0 0 12 28"><path d="M6 0 v28" stroke="#222" stroke-width="2" stroke-dasharray="2.500 2.500" fill="none"/><circle cx="6" cy="14" r="4.500" fill="#222"/></svg>
<svg class="a" style="left:68px;top:456px;" width="26" height="26" viewBox="0 0 26 26"><path d="M3.500 20 l1.800 -5.500 l12.500 -12.500 l3.700 3.700 l-12.500 12.500z M5.300 14.500 l3.700 3.700" fill="none" stroke="#a0a0a0" stroke-width="1.400" stroke-linejoin="round"/><path d="M1 23.500 h23" stroke="#8fa8d0" stroke-width="1.200"/></svg>
<span class="t" style="left:99.7px;top:459.8px;font:normal 400 19px/19px 'Liberation Sans',sans-serif;color:#9a9a9a;transform:scaleX(1.0306);-webkit-text-stroke:0.15px #9a9a9a;">Layout Sketch</span>
<svg class="a" style="left:69px;top:499px;" width="12" height="18" viewBox="0 0 12 18"><path d="M2.500 2 L9.500 9 L2.500 16" fill="none" stroke="#555" stroke-width="2.800"/></svg>
<svg class="a" style="left:99px;top:498px;" width="24" height="20" viewBox="0 0 24 20"><path d="M1 1.500 h7.500 l2.200 2.600 h11 a1.300 1.300 0 0 1 1.300 1.300 v12 a1.300 1.300 0 0 1 -1.300 1.300 h-20.400 a1.300 1.300 0 0 1 -1.300 -1.300 z" fill="none" stroke="#777" stroke-width="1.300"/></svg>
<span class="t" style="left:130.0px;top:498.8px;font:normal 400 19px/19px 'Liberation Sans',sans-serif;color:#2b2b2b;transform:scaleX(0.9915);-webkit-text-stroke:0.25px #2b2b2b;">Tube (3)</span>
<svg class="a" style="left:69px;top:538px;" width="12" height="18" viewBox="0 0 12 18"><path d="M2.500 2 L9.500 9 L2.500 16" fill="none" stroke="#555" stroke-width="2.800"/></svg>
<svg class="a" style="left:99px;top:537px;" width="24" height="20" viewBox="0 0 24 20"><path d="M1 1.500 h7.500 l2.200 2.600 h11 a1.300 1.300 0 0 1 1.300 1.300 v12 a1.300 1.300 0 0 1 -1.300 1.300 h-20.400 a1.300 1.300 0 0 1 -1.300 -1.300 z" fill="none" stroke="#777" stroke-width="1.300"/></svg>
<span class="t" style="left:130.0px;top:537.8px;font:normal 400 19px/19px 'Liberation Sans',sans-serif;color:#2b2b2b;transform:scaleX(1.0054);-webkit-text-stroke:0.25px #2b2b2b;">Plate (6)</span>
<svg class="a" style="left:69px;top:577px;" width="12" height="18" viewBox="0 0 12 18"><path d="M2.500 2 L9.500 9 L2.500 16" fill="none" stroke="#555" stroke-width="2.800"/></svg>
<svg class="a" style="left:99px;top:576px;" width="24" height="20" viewBox="0 0 24 20"><path d="M1 1.500 h7.500 l2.200 2.600 h11 a1.300 1.300 0 0 1 1.300 1.300 v12 a1.300 1.300 0 0 1 -1.300 1.300 h-20.400 a1.300 1.300 0 0 1 -1.300 -1.300 z" fill="none" stroke="#777" stroke-width="1.300"/></svg>
<span class="t" style="left:130.0px;top:576.8px;font:normal 400 19px/19px 'Liberation Sans',sans-serif;color:#2b2b2b;transform:scaleX(0.9918);-webkit-text-stroke:0.25px #2b2b2b;">2x1 Tube (2)</span>
<svg class="a" style="left:69px;top:616px;" width="12" height="18" viewBox="0 0 12 18"><path d="M2.500 2 L9.500 9 L2.500 16" fill="none" stroke="#555" stroke-width="2.800"/></svg>
<svg class="a" style="left:99px;top:615px;" width="24" height="20" viewBox="0 0 24 20"><path d="M1 1.500 h7.500 l2.200 2.600 h11 a1.300 1.300 0 0 1 1.300 1.300 v12 a1.300 1.300 0 0 1 -1.300 1.300 h-20.400 a1.300 1.300 0 0 1 -1.300 -1.300 z" fill="none" stroke="#777" stroke-width="1.300"/></svg>
<span class="t" style="left:130.0px;top:615.8px;font:normal 400 19px/19px 'Liberation Sans',sans-serif;color:#2b2b2b;transform:scaleX(1.0239);-webkit-text-stroke:0.25px #2b2b2b;">Polycarb Floor (2)</span>
<svg class="a" style="left:67px;top:651px;" width="26" height="26" viewBox="0 0 26 26"><g stroke="#555" stroke-width="1.300" fill="#e4e4e4" stroke-linejoin="round"><path d="M6 8 c2 -5 8 -7 13 -5 c4 1.500 6 4 5 8 l-4 13 h-5 l2 -10 l-5 -1.500 l-7 11.500 h-4z"/><ellipse cx="15" cy="7.500" rx="7" ry="3.600" transform="rotate(12 15 7.500)" fill="#fff"/><ellipse cx="15" cy="7.500" rx="3" ry="1.500" transform="rotate(12 15 7.500)" fill="#bbb"/></g></svg>
<span class="t" style="left:99.7px;top:654.8px;font:normal 400 19px/19px 'Liberation Sans',sans-serif;color:#2b2b2b;transform:scaleX(0.9872);-webkit-text-stroke:0.25px #2b2b2b;">1/2&quot; Rounded Hex ...</span>
<svg class="a" style="left:294px;top:650px;" width="12" height="28" viewBox="0 0 12 28"><path d="M6 0 v28" stroke="#222" stroke-width="2" stroke-dasharray="2.500 2.500" fill="none"/><circle cx="6" cy="14" r="4.500" fill="#222"/></svg>
<svg class="a" style="left:67px;top:690px;" width="26" height="26" viewBox="0 0 26 26"><path d="M11 2 c2 -2 6 -2 7.500 1 l6.500 12 c1 3 0 5 -3 6 l-15 3.500 c-4 0.500 -6.500 -2.500 -5.500 -6.500z" fill="#b5b5b5" stroke="#888" stroke-width="1.200"/><path d="M9 11 l5 2 l5 -3 l2 6 l-4 2 l-1 4 l-6 -1 l-3 -4z" fill="#fff"/><circle cx="14.500" cy="6" r="4" fill="#c8c8c8" stroke="#999" stroke-width="0.800"/><circle cx="6" cy="20" r="4.500" fill="#c8c8c8" stroke="#999" stroke-width="0.800"/></svg>
<span class="t" style="left:99.7px;top:693.8px;font:normal 400 19px/19px 'Liberation Sans',sans-serif;color:#2b2b2b;transform:scaleX(1.0203);-webkit-text-stroke:0.25px #2b2b2b;">70T 5M Belt - 350...</span>
<svg class="a" style="left:294px;top:689px;" width="12" height="28" viewBox="0 0 12 28"><path d="M6 0 v28" stroke="#222" stroke-width="2" stroke-dasharray="2.500 2.500" fill="none"/><circle cx="6" cy="14" r="4.500" fill="#222"/></svg>
<div class="a" style="left:68px;top:737px;width:285px;height:9.5px;background:#b2b2b2;"></div>
<div class="a" style="left:368px;top:716px;width:49px;height:51px;border:1px solid #cfcfcf;border-left:none;background:#fff;box-sizing:border-box;"></div>
<svg class="a" style="left:378px;top:728px;" width="30" height="30" viewBox="0 0 30 30"><g stroke="#333" stroke-width="1.500" fill="none"><path d="M4 5 v22 M9 4 h18 M9 12 h18 M9 20 h18 M9 27 h18"/><path d="M0.500 2 l3.500 3.500 l3.500 -3.500"/></g></svg>
<div class="a" style="left:60px;top:939.5px;width:300px;height:2px;background:#dadada;"></div>
<svg class="a" style="left:66px;top:955px;" width="18" height="12" viewBox="0 0 18 12"><path d="M2 2.500 L9 9.500 L16 2.500" fill="none" stroke="#555" stroke-width="2.800"/></svg>
<span class="t" style="left:95.4px;top:951.8px;font:normal 400 19px/19px 'Liberation Sans',sans-serif;color:#2b2b2b;transform:scaleX(1.0048);-webkit-text-stroke:0.25px #2b2b2b;">Parts (8)</span>
<svg class="a" style="left:96px;top:988px;" width="26" height="24" viewBox="0 0 26 24"><g fill="#fff" stroke="#666" stroke-width="1.400" stroke-linejoin="round"><path d="M1.500 13 l4 -3 h7 v-7 l4 -2 h4.500 l3 2.500 v16.500 l-1 1.500 h-17 l-4.500 -3z"/><path d="M1.500 13 l4.500 3 h10 v-11.500 h8 M6 16 v6.500 M16 4.500 l-3.500 -1.500 M16 16 l0 0" fill="none" stroke-width="1.100"/></g></svg>
<span class="t" style="left:127.9px;top:990.8px;font:normal 400 19px/19px 'Liberation Sans',sans-serif;color:#2b2b2b;transform:scaleX(1.0001);-webkit-text-stroke:0.25px #2b2b2b;">Origin Cube</span>
<svg class="a" style="left:96px;top:1027px;" width="26" height="24" viewBox="0 0 26 24"><g fill="#fff" stroke="#666" stroke-width="1.400" stroke-linejoin="round"><path d="M1.500 13 l4 -3 h7 v-7 l4 -2 h4.500 l3 2.500 v16.500 l-1 1.500 h-17 l-4.500 -3z"/><path d="M1.500 13 l4.500 3 h10 v-11.500 h8 M6 16 v6.500 M16 4.500 l-3.500 -1.500 M16 16 l0 0" fill="none" stroke-width="1.100"/></g></svg>
<span class="t" style="left:127.9px;top:1029.8px;font:normal 400 19px/19px 'Liberation Sans',sans-serif;color:#2b2b2b;transform:scaleX(1.0225);-webkit-text-stroke:0.25px #2b2b2b;">Tube 1&quot;x1&quot;x12&quot;</span>
<svg class="a" style="left:96px;top:1066px;" width="26" height="24" viewBox="0 0 26 24"><g fill="#fff" stroke="#666" stroke-width="1.400" stroke-linejoin="round"><path d="M1.500 13 l4 -3 h7 v-7 l4 -2 h4.500 l3 2.500 v16.500 l-1 1.500 h-17 l-4.500 -3z"/><path d="M1.500 13 l4.500 3 h10 v-11.500 h8 M6 16 v6.500 M16 4.500 l-3.500 -1.500 M16 16 l0 0" fill="none" stroke-width="1.100"/></g></svg>
<span class="t" style="left:127.9px;top:1068.8px;font:normal 400 19px/19px 'Liberation Sans',sans-serif;color:#2b2b2b;transform:scaleX(1.0321);-webkit-text-stroke:0.25px #2b2b2b;">Plate</span>
<svg class="a" style="left:96px;top:1105px;" width="26" height="24" viewBox="0 0 26 24"><g fill="#fff" stroke="#666" stroke-width="1.400" stroke-linejoin="round"><path d="M1.500 13 l4 -3 h7 v-7 l4 -2 h4.500 l3 2.500 v16.500 l-1 1.500 h-17 l-4.500 -3z"/><path d="M1.500 13 l4.500 3 h10 v-11.500 h8 M6 16 v6.500 M16 4.500 l-3.500 -1.500 M16 16 l0 0" fill="none" stroke-width="1.100"/></g></svg>
<span class="t" style="left:127.9px;top:1107.8px;font:normal 400 19px/19px 'Liberation Sans',sans-serif;color:#2b2b2b;transform:scaleX(0.9876);-webkit-text-stroke:0.25px #2b2b2b;">zREF Plate</span>
<svg class="a" style="left:96px;top:1144px;" width="26" height="24" viewBox="0 0 26 24"><g fill="#fff" stroke="#666" stroke-width="1.400" stroke-linejoin="round"><path d="M1.500 13 l4 -3 h7 v-7 l4 -2 h4.500 l3 2.500 v16.500 l-1 1.500 h-17 l-4.500 -3z"/><path d="M1.500 13 l4.500 3 h10 v-11.500 h8 M6 16 v6.500 M16 4.500 l-3.500 -1.500 M16 16 l0 0" fill="none" stroke-width="1.100"/></g></svg>
<span class="t" style="left:127.9px;top:1146.8px;font:normal 400 19px/19px 'Liberation Sans',sans-serif;color:#2b2b2b;transform:scaleX(1.0377);-webkit-text-stroke:0.25px #2b2b2b;">Tube 2&quot;x1&quot;x8&quot;</span>
<svg class="a" style="left:96px;top:1183px;" width="26" height="24" viewBox="0 0 26 24"><g fill="#fff" stroke="#666" stroke-width="1.400" stroke-linejoin="round"><path d="M1.500 13 l4 -3 h7 v-7 l4 -2 h4.500 l3 2.500 v16.500 l-1 1.500 h-17 l-4.500 -3z"/><path d="M1.500 13 l4.500 3 h10 v-11.500 h8 M6 16 v6.500 M16 4.500 l-3.500 -1.500 M16 16 l0 0" fill="none" stroke-width="1.100"/></g></svg>
<span class="t" style="left:127.9px;top:1185.8px;font:normal 400 19px/19px 'Liberation Sans',sans-serif;color:#2b2b2b;transform:scaleX(1.0439);-webkit-text-stroke:0.25px #2b2b2b;">Polycarbonate Floor</span>
<svg class="a" style="left:96px;top:1222px;" width="26" height="24" viewBox="0 0 26 24"><g fill="#fff" stroke="#666" stroke-width="1.400" stroke-linejoin="round"><path d="M1.500 13 l4 -3 h7 v-7 l4 -2 h4.500 l3 2.500 v16.500 l-1 1.500 h-17 l-4.500 -3z"/><path d="M1.500 13 l4.500 3 h10 v-11.500 h8 M6 16 v6.500 M16 4.500 l-3.500 -1.500 M16 16 l0 0" fill="none" stroke-width="1.100"/></g></svg>
<span class="t" style="left:127.9px;top:1224.8px;font:normal 400 19px/19px 'Liberation Sans',sans-serif;color:#2b2b2b;transform:scaleX(0.9853);-webkit-text-stroke:0.25px #2b2b2b;">1/2&quot; Rounded Hex (RE...</span>
<svg class="a" style="left:96px;top:1261px;" width="26" height="24" viewBox="0 0 26 24"><g fill="#fff" stroke="#666" stroke-width="1.400" stroke-linejoin="round"><path d="M1.500 13 l4 -3 h7 v-7 l4 -2 h4.500 l3 2.500 v16.500 l-1 1.500 h-17 l-4.500 -3z"/><path d="M1.500 13 l4.500 3 h10 v-11.500 h8 M6 16 v6.500 M16 4.500 l-3.500 -1.500 M16 16 l0 0" fill="none" stroke-width="1.100"/></g></svg>
<span class="t" style="left:127.9px;top:1263.8px;font:normal 400 19px/19px 'Liberation Sans',sans-serif;color:#2b2b2b;transform:scaleX(1.0365);-webkit-text-stroke:0.25px #2b2b2b;">70T 5M 9mm Wide Belt</span>
<div class="a" style="left:59px;top:1395px;width:2500px;height:44px;background:#d9d9d9;"></div>
<div class="a" style="left:60px;top:1395px;width:59px;height:44px;background:#e2e2e2;"></div>
<svg class="a" style="left:73px;top:1405px;" width="24" height="24" viewBox="0 0 24 24"><path d="M12 1.500 v21 M1.500 12 h21" stroke="#444" stroke-width="3.200"/></svg>
<div class="a" style="left:119.5px;top:1395px;width:298.5px;height:41.5px;background:#fff;border-bottom:3px solid #1b5bb7;box-sizing:border-box;border-radius:0 0 3px 3px;"></div>
<svg class="a" style="left:135.5px;top:1404.5px;" width="27" height="21" viewBox="0 0 27 21"><path d="M1.200 1.500 h8 l2.400 2.800 h12.600 a1.400 1.400 0 0 1 1.400 1.400 v12.400 a1.400 1.400 0 0 1 -1.400 1.400 h-21.600 a1.400 1.400 0 0 1 -1.400 -1.400 z" fill="none" stroke="#444" stroke-width="1.500"/></svg>
<span class="t" style="left:168.8px;top:1406.4px;font:normal 400 20.5px/20.5px 'Liberation Sans',sans-serif;color:#2b2b2b;transform:scaleX(0.9891);-webkit-text-stroke:0.2px #2b2b2b;">Exercise 1: Flat Intake</span>
<div class="a" style="left:422.20000000000005px;top:1395px;width:299.3px;height:41.5px;background:#e9e9e9;border-radius:0 0 7px 7px;box-shadow:0 1px 1px #c4c4c4;"></div>
<svg class="a" style="left:437.90000000000003px;top:1404.5px;" width="27" height="21" viewBox="0 0 27 21"><path d="M1.200 1.500 h8 l2.400 2.800 h12.600 a1.400 1.400 0 0 1 1.400 1.400 v12.400 a1.400 1.400 0 0 1 -1.400 1.400 h-21.600 a1.400 1.400 0 0 1 -1.400 -1.400 z" fill="none" stroke="#555" stroke-width="1.500"/></svg>
<span class="t" style="left:470.9px;top:1406.4px;font:normal 400 20.5px/20.5px 'Liberation Sans',sans-serif;color:#6a6a6a;transform:scaleX(0.9747);-webkit-text-stroke:0.1px #6a6a6a;">Exercise 2: Dead Axle R...</span>
<div class="a" style="left:725.3000000000001px;top:1395px;width:299.3px;height:41.5px;background:#e9e9e9;border-radius:0 0 7px 7px;box-shadow:0 1px 1px #c4c4c4;"></div>
<svg class="a" style="left:741.0px;top:1404.5px;" width="27" height="21" viewBox="0 0 27 21"><path d="M1.200 1.500 h8 l2.400 2.800 h12.600 a1.400 1.400 0 0 1 1.400 1.400 v12.400 a1.400 1.400 0 0 1 -1.400 1.400 h-21.600 a1.400 1.400 0 0 1 -1.400 -1.400 z" fill="none" stroke="#555" stroke-width="1.500"/></svg>
<span class="t" style="left:774.0px;top:1406.4px;font:normal 400 20.5px/20.5px 'Liberation Sans',sans-serif;color:#6a6a6a;transform:scaleX(0.9922);-webkit-text-stroke:0.1px #6a6a6a;">Exercise 3: Shooter</span>
<div class="a" style="left:1028.4px;top:1395px;width:299.3px;height:41.5px;background:#e9e9e9;border-radius:0 0 7px 7px;box-shadow:0 1px 1px #c4c4c4;"></div>
<svg class="a" style="left:1044.1000000000001px;top:1404.5px;" width="27" height="21" viewBox="0 0 27 21"><path d="M1.200 1.500 h8 l2.400 2.800 h12.600 a1.400 1.400 0 0 1 1.400 1.400 v12.400 a1.400 1.400 0 0 1 -1.400 1.400 h-21.600 a1.400 1.400 0 0 1 -1.400 -1.400 z" fill="none" stroke="#555" stroke-width="1.500"/></svg>
<span class="t" style="left:1077.1px;top:1406.4px;font:normal 400 20.5px/20.5px 'Liberation Sans',sans-serif;color:#6a6a6a;transform:scaleX(1.0039);-webkit-text-stroke:0.1px #6a6a6a;">Exercise 4 - Telescopin...</span>
<div class="a" style="left:1331.5px;top:1395px;width:299.3px;height:41.5px;background:#e9e9e9;border-radius:0 0 7px 7px;box-shadow:0 1px 1px #c4c4c4;"></div>
<svg class="a" style="left:1347.2px;top:1404.5px;" width="27" height="21" viewBox="0 0 27 21"><path d="M1.200 1.500 h8 l2.400 2.800 h12.600 a1.400 1.400 0 0 1 1.400 1.400 v12.400 a1.400 1.400 0 0 1 -1.400 1.400 h-21.600 a1.400 1.400 0 0 1 -1.400 -1.400 z" fill="none" stroke="#555" stroke-width="1.500"/></svg>
<span class="t" style="left:1380.2px;top:1406.4px;font:normal 400 20.5px/20.5px 'Liberation Sans',sans-serif;color:#6a6a6a;transform:scaleX(0.9741);-webkit-text-stroke:0.1px #6a6a6a;">Exercise 5 - Flipped Ge...</span>
<div class="a" style="left:1634.6px;top:1395px;width:299.3px;height:41.5px;background:#e9e9e9;border-radius:0 0 7px 7px;box-shadow:0 1px 1px #c4c4c4;"></div>
<svg class="a" style="left:1650.3px;top:1404.5px;" width="27" height="21" viewBox="0 0 27 21"><path d="M1.200 1.500 h8 l2.400 2.800 h12.600 a1.400 1.400 0 0 1 1.400 1.400 v12.400 a1.400 1.400 0 0 1 -1.400 1.400 h-21.600 a1.400 1.400 0 0 1 -1.400 -1.400 z" fill="none" stroke="#555" stroke-width="1.500"/></svg>
<span class="t" style="left:1683.3px;top:1406.4px;font:normal 400 20.5px/20.5px 'Liberation Sans',sans-serif;color:#6a6a6a;transform:scaleX(0.9867);-webkit-text-stroke:0.1px #6a6a6a;">Exercise 6 - Direction S...</span>
<div class="a" style="left:1937.7px;top:1395px;width:299.3px;height:41.5px;background:#e9e9e9;border-radius:0 0 7px 7px;box-shadow:0 1px 1px #c4c4c4;"></div>
<svg class="a" style="left:1953.4px;top:1404.5px;" width="27" height="21" viewBox="0 0 27 21"><path d="M1.200 1.500 h8 l2.400 2.800 h12.600 a1.400 1.400 0 0 1 1.400 1.400 v12.400 a1.400 1.400 0 0 1 -1.400 1.400 h-21.600 a1.400 1.400 0 0 1 -1.400 -1.400 z" fill="none" stroke="#555" stroke-width="1.500"/></svg>
<span class="t" style="left:1986.4px;top:1406.4px;font:normal 400 20.5px/20.5px 'Liberation Sans',sans-serif;color:#6a6a6a;transform:scaleX(0.9953);-webkit-text-stroke:0.1px #6a6a6a;">Exercise 7 - Vertical Rol...</span>
<div class="a" style="left:2240.8px;top:1395px;width:299.3px;height:41.5px;background:#e9e9e9;border-radius:0 0 7px 7px;box-shadow:0 1px 1px #c4c4c4;"></div>
<svg class="a" style="left:2256.5000000000005px;top:1404.5px;" width="27" height="21" viewBox="0 0 27 21"><path d="M1.200 1.500 h8 l2.400 2.800 h12.600 a1.400 1.400 0 0 1 1.400 1.400 v12.400 a1.400 1.400 0 0 1 -1.400 1.400 h-21.600 a1.400 1.400 0 0 1 -1.400 -1.400 z" fill="none" stroke="#555" stroke-width="1.500"/></svg>
<span class="t" style="left:2289.5px;top:1406.4px;font:normal 400 20.5px/20.5px 'Liberation Sans',sans-serif;color:#6a6a6a;transform:scaleX(0.9728);-webkit-text-stroke:0.1px #6a6a6a;">Exercise 8 - Indexer Ce...</span>
<svg class="a" style="left:2412px;top:1362px;" width="26" height="24" viewBox="0 0 26 24"><g fill="none" stroke="#333" stroke-width="1.500"><ellipse cx="17" cy="7.500" rx="7" ry="4"/><path d="M10 7.500 v8 c0 2 3 4 7 4 s7 -2 7 -4 v-8"/><path d="M10 14 h-8.500 v5.500 h15"/><ellipse cx="17" cy="7.500" rx="2.500" ry="1.300"/><path d="M4 17 v2 M7 16.500 v3 M10 17 v2.500"/></g></svg>
<svg class="a" style="left:2463px;top:1362px;" width="30" height="24" viewBox="0 0 30 24"><g fill="none" stroke="#333" stroke-width="1.600"><path d="M1.500 19.500 a13.500 13.500 0 0 1 27 0 v2 h-27z"/><path d="M7.500 19.500 a7.500 7.500 0 0 1 15 0"/><path d="M15 19.500 l7.500 -9"/></g></svg>
<svg class="a" style="left:2517px;top:1361px;" width="26" height="26" viewBox="0 0 26 26"><g fill="none" stroke="#333" stroke-width="1.600"><path d="M13 2 v19 M6 23 h14 M3 4 h20"/><path d="M5 4.500 l-3.500 10 h7z M21 4.500 l-3.500 10 h7z" /><path d="M1 14.500 a4 2 0 0 0 8 0 M17 14.500 a4 2 0 0 0 8 0"/></g></svg>
<div class="a" style="left:2512px;top:560px;width:48px;height:199px;border:1px solid #b4b4b4;border-right:none;background:#fff;box-sizing:border-box;"></div>
<div class="a" style="left:2512px;top:609.5px;width:48px;height:1px;background:#b4b4b4;"></div>
<div class="a" style="left:2512px;top:659.5px;width:48px;height:1px;background:#b4b4b4;"></div>
<div class="a" style="left:2512px;top:708.5px;width:48px;height:1px;background:#b4b4b4;"></div>
<div class="a" style="left:2512px;top:774px;width:48px;height:150px;border:1px solid #b4b4b4;border-right:none;background:#fff;box-sizing:border-box;"></div>
<div class="a" style="left:2512px;top:824px;width:48px;height:1px;background:#b4b4b4;"></div>
<div class="a" style="left:2512px;top:873px;width:48px;height:1px;background:#b4b4b4;"></div>
<svg class="a" style="left:2521px;top:570px;" width="32" height="32" viewBox="0 0 32 32"><g stroke="#555" stroke-width="1"><rect x="2" y="19.500" width="28" height="8.500" rx="1.500" fill="#fff"/><path d="M20.500 19.500 v8.500 M11.500 19.500 v8.500" /><rect x="20.500" y="19.500" width="9.500" height="8.500" fill="#ccc"/><circle cx="6.500" cy="24" r="1.500" fill="none"/></g><path d="M3 19.500 l10 -16 c1 -1.500 3 -1.500 4 -0.800 l4 2.300 l-7 14.500z" fill="#666"/><path d="M14 19.500 l7 -11 c1 -1.500 3 -1.500 4 -0.800 l3 2.300 l-5 9.500z" fill="#9a9a9a"/><path d="M23 19.500 l4 -6 l3 3 v3z" fill="#bbb"/></svg>
<svg class="a" style="left:2521px;top:619px;" width="32" height="32" viewBox="0 0 32 32"><g fill="#fff" stroke="#333" stroke-width="1.700" stroke-linejoin="round"><path d="M18 8 l10.500 5 v12 l-10.500 5.500 l-10.500 -5.500 v-12z"/><path d="M7.500 13 l10.500 5 l10.500 -5 M18 18 v12.500" fill="none"/></g><g transform="translate(1.500,1.500)"><g fill="#1b5bb7"><rect x="0" y="0" width="4" height="3.200"/><rect x="4.800" y="0" width="4" height="3.200"/><rect x="9.600" y="0" width="4" height="3.200"/><rect x="0" y="4" width="4" height="3.200"/><rect x="4.800" y="4" width="4" height="3.200"/><rect x="9.600" y="4" width="4" height="3.200"/><rect x="0" y="8" width="4" height="3.200"/><rect x="4.800" y="8" width="4" height="3.200"/><rect x="9.600" y="8" width="4" height="3.200"/></g></g></svg>
<svg class="a" style="left:2521px;top:668px;" width="32" height="32" viewBox="0 0 32 32"><g fill="#fff" stroke="#333" stroke-width="1.500" stroke-linejoin="round"><path d="M17 9.500 l8 3.800 v9 l-8 4.200 l-8 -4.200 v-9z"/><path d="M9 13.300 l8 3.800 l8 -3.800 M17 17.100 v9.400" fill="none"/></g><path d="M6.500 14 c-2 0 -1 5 -3 6 c2 1 1 7 3.500 7 M27.500 6 c2.500 0 1 7 3 8 c-2 1 -0.500 9 -3 9" fill="none" stroke="#333" stroke-width="1.500"/><g transform="translate(1.500,1.500)"><g fill="#444"><rect x="0" y="0" width="4" height="3.200"/><rect x="4.800" y="0" width="4" height="3.200"/><rect x="9.600" y="0" width="4" height="3.200"/><rect x="0" y="4" width="4" height="3.200"/><rect x="4.800" y="4" width="4" height="3.200"/><rect x="9.600" y="4" width="4" height="3.200"/><rect x="0" y="8" width="4" height="3.200"/><rect x="4.800" y="8" width="4" height="3.200"/><rect x="9.600" y="8" width="4" height="3.200"/></g></g></svg>
<svg class="a" style="left:2521px;top:717px;" width="32" height="32" viewBox="0 0 32 32"><g transform="translate(1.500,1.500)"><g fill="#444"><rect x="0" y="0" width="4" height="3.200"/><rect x="4.800" y="0" width="4" height="3.200"/><rect x="9.600" y="0" width="4" height="3.200"/><rect x="0" y="4" width="4" height="3.200"/><rect x="4.800" y="4" width="4" height="3.200"/><rect x="9.600" y="4" width="4" height="3.200"/><rect x="0" y="8" width="4" height="3.200"/><rect x="4.800" y="8" width="4" height="3.200"/><rect x="9.600" y="8" width="4" height="3.200"/></g></g><path d="M5 13 c-3 5 -3 12 0 17 M27.500 9 c3.500 6 3.500 15 0 21" fill="none" stroke="#222" stroke-width="2.400"/></svg>
<span class="t" style="left:2527.5px;top:717.7px;font:italic 700 32px/32px 'Liberation Serif',serif;color:#222;transform:scaleX(1.3125);">x</span>
<div class="a" style="left:2519px;top:781px;width:36px;height:36px;background:#dcdcdc;border-radius:5px;"></div>
<div class="a" style="left:2521.5px;top:784px;width:31px;height:30px;background:#0a50d6;border:2px solid #1a1a2a;box-sizing:border-box;"></div>
<span class="t" style="left:2524.0px;top:789.2px;font:normal 700 23px/23px 'Liberation Serif',serif;color:#fff;transform:scaleX(0.6566);">MK</span>
<div class="a" style="left:2519px;top:830.5px;width:36px;height:36px;background:#dcdcdc;border-radius:5px;"></div>
<svg class="a" style="left:2519px;top:830.5px;" width="36" height="36" viewBox="0 0 36 36"><rect x="5" y="14" width="26" height="16" rx="2" fill="#2a2a2a" transform="rotate(-4 18 22)"/><rect x="2" y="19" width="4" height="8" fill="#2a2a2a"/><rect x="30" y="17" width="4" height="8" fill="#2a2a2a"/><circle cx="12.500" cy="21.500" r="4.200" fill="#fff"/><circle cx="23.500" cy="20.500" r="4.200" fill="#fff"/><circle cx="12.500" cy="21.500" r="2.400" fill="#1b7fd6"/><circle cx="23.500" cy="20.500" r="2.400" fill="#1b7fd6"/><path d="M18 13 v-5" stroke="#2a2a2a" stroke-width="1.500"/><circle cx="18" cy="7" r="2" fill="#2a2a2a"/><path d="M9 5 l1.500 5 M12 4 l1 5 M27 5 l-1.500 5 M24 4 l-1 5" stroke="#3a78c8" stroke-width="1" fill="none"/><path d="M14 26.500 c3 2 6 1.500 8 -0.500" stroke="#fff" stroke-width="1.300" fill="none"/></svg>
<div class="a" style="left:2519px;top:879.5px;width:36px;height:36px;background:#dcdcdc;border-radius:5px;"></div>
<svg class="a" style="left:2519px;top:879.5px;" width="36" height="36" viewBox="0 0 36 36"><path d="M18 6 l14.500 26 h-9 c-1 -5 -4 -6 -8 -7 c-3 -1 -3 -4 0 -5.500 c-4 0 -7 3 -6 6.500 c0.500 2 2 3 4 4 v2 h-10z" fill="#1aa3e0"/></svg>
</div></body></html>
